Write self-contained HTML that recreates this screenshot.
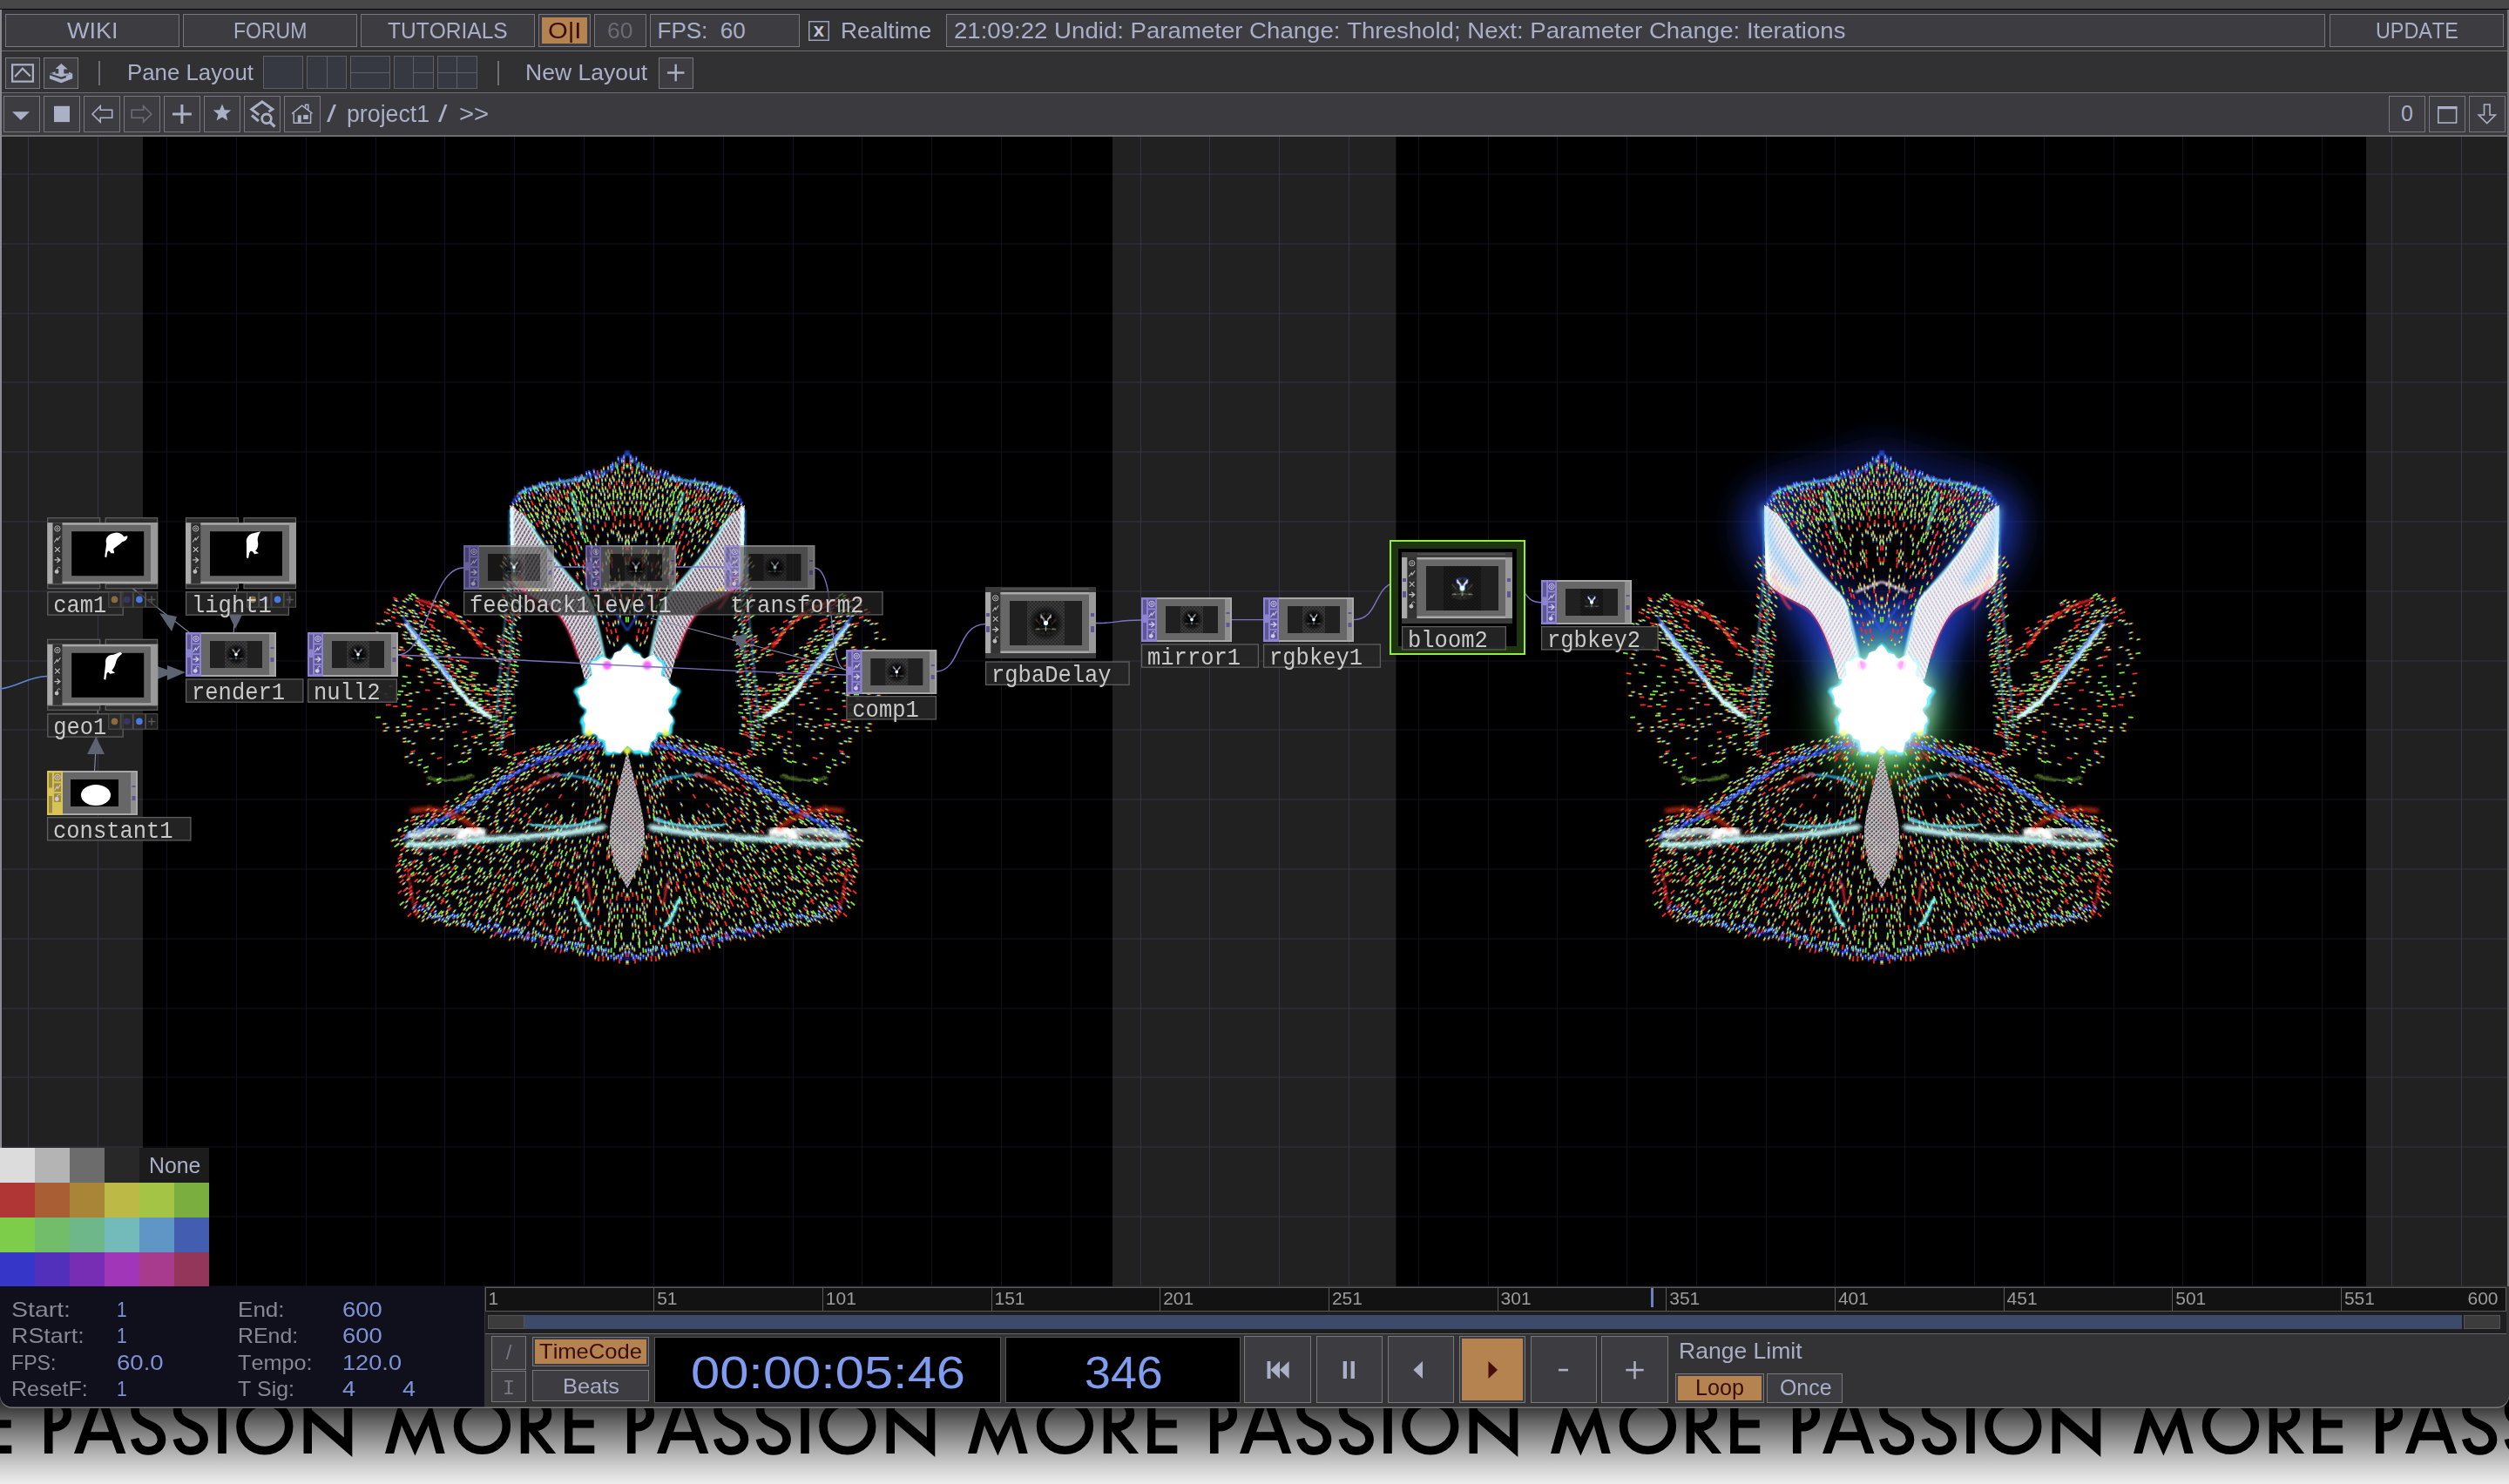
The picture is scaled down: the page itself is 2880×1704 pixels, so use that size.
<!DOCTYPE html>
<html><head><meta charset="utf-8"><style>
html,body{margin:0;padding:0;}
body{width:2880px;height:1704px;position:relative;overflow:hidden;background:#f2f2f2;font-family:"Liberation Sans",sans-serif;}
.a{position:absolute;}
.t{white-space:pre;transform-origin:0 0;font-kerning:none;}
</style></head><body>
<div class="a" style="left:0;top:1600px;width:2880px;height:104px;background:linear-gradient(#202020 0px,#3e3e3e 17px,#6c6c6c 35px,#a2a2a2 60px,#d2d2d2 85px,#ededed 104px);"></div>
<svg class="a" style="left:0;top:0" width="2880" height="1704"><defs><g id="pmunit">
<g fill="none" stroke="#000" stroke-width="9.6">
<path d="M55.75,1669 V1600 M55.75,1608.8 H62.45 A14.95,14.95 0 0 1 62.45,1638.7 H55.75"/>
<path d="M100,1649 H130"/>
<path d="M185.5,1614 C181.5,1608 175.5,1604.8 169,1604.8 C160,1604.8 155,1611 155,1619 C155,1628 162,1632 170,1635.5 C180,1639.5 185.5,1645 185.5,1653 C185.5,1661 179,1666 170,1666 C162,1666 156.5,1661 154.8,1652"/>
<path transform="translate(48.6,0)" d="M185.5,1614 C181.5,1608 175.5,1604.8 169,1604.8 C160,1604.8 155,1611 155,1619 C155,1628 162,1632 170,1635.5 C180,1639.5 185.5,1645 185.5,1653 C185.5,1661 179,1666 170,1666 C162,1666 156.5,1661 154.8,1652"/>
<path d="M255,1669 V1600"/>
<circle cx="303.85" cy="1637.8" r="27.85"/>
<circle cx="553.45" cy="1637.4" r="27.85"/>
<path d="M602.5,1669 V1600 M602.5,1608.8 H613.65 A14.85,14.85 0 0 1 613.65,1638.5 H602.5"/>
</g>
<g fill="#000">
<polygon points="85,1669 95.3,1669 119.7,1600 109.4,1600"/>
<polygon points="134,1669 144.4,1669 119.8,1600 109.5,1600"/>
<polygon points="348.5,1600 348.5,1669 358,1669 358,1633 404.3,1673 404.3,1600 394.8,1600 394.8,1650.5 358,1619 358,1600"/>
<polygon points="442,1669 452.1,1669 461,1636.6 476.4,1671.6 491.7,1636.6 500.6,1669 510.7,1669 494.8,1610.9 476.4,1650 457.9,1610.9"/>
<polygon points="606,1642 616.8,1642 638.2,1669 627.3,1669"/>
<rect x="648.2" y="1600" width="9.2" height="69"/>
<rect x="648.2" y="1630.4" width="33.5" height="9.2"/>
<rect x="648.2" y="1659.6" width="34.1" height="9.4"/>
</g></g></defs>
<use href="#pmunit" transform="translate(-669,0)"/><use href="#pmunit"/><use href="#pmunit" transform="translate(669,0)"/><use href="#pmunit" transform="translate(1338,0)"/><use href="#pmunit" transform="translate(2007,0)"/><use href="#pmunit" transform="translate(2676,0)"/>
</svg>
<div class="a" style="left:0.00px;top:0.00px;width:2880.00px;height:10.00px;background:#474747;"></div>
<div class="a" style="left:0.00px;top:9.50px;width:2880.00px;height:1.80px;background:#050505;"></div>
<div class="a" style="left:0.00px;top:11.00px;width:2880.00px;height:47.00px;background:#333335;"></div>
<div class="a" style="left:0.00px;top:58.00px;width:2880.00px;height:1.00px;background:#6c6c72;"></div>
<div class="a" style="left:0.00px;top:59.00px;width:2880.00px;height:47.00px;background:#313133;"></div>
<div class="a" style="left:0.00px;top:106.00px;width:2880.00px;height:1.00px;background:#6c6c72;"></div>
<div class="a" style="left:0.00px;top:107.00px;width:2880.00px;height:48.00px;background:#3a3a3f;"></div>
<div class="a" style="left:0.00px;top:155.00px;width:2880.00px;height:1.50px;background:#6c6c72;"></div>
<div class="a" style="left:6.00px;top:16.00px;width:200.00px;height:38.00px;background:#3c3c41;box-shadow:inset 0 0 0 1px #77777d;"></div>
<div class="a t" style="left:77.00px;top:20.67px;font-size:26px;line-height:29.04px;font-family:'Liberation Sans', sans-serif;color:#a9afc7;transform:scaleX(1.0403);">WIKI</div>
<div class="a" style="left:210.00px;top:16.00px;width:200.00px;height:38.00px;background:#3c3c41;box-shadow:inset 0 0 0 1px #77777d;"></div>
<div class="a t" style="left:267.60px;top:20.67px;font-size:26px;line-height:29.04px;font-family:'Liberation Sans', sans-serif;color:#a9afc7;transform:scaleX(0.8855);">FORUM</div>
<div class="a" style="left:414.00px;top:16.00px;width:200.00px;height:38.00px;background:#3c3c41;box-shadow:inset 0 0 0 1px #77777d;"></div>
<div class="a t" style="left:444.65px;top:20.67px;font-size:26px;line-height:29.04px;font-family:'Liberation Sans', sans-serif;color:#a9afc7;transform:scaleX(0.9438);">TUTORIALS</div>
<div class="a" style="left:618.00px;top:16.00px;width:60.00px;height:38.00px;background:#3c3c41;box-shadow:inset 0 0 0 1px #77777d;"></div>
<div class="a" style="left:622.00px;top:19.50px;width:52.00px;height:30.50px;background:#b5834f;"></div>
<div class="a t" style="left:628.55px;top:20.67px;font-size:26px;line-height:29.04px;font-family:'Liberation Sans', sans-serif;color:#3b0c0c;transform:scaleX(1.1257);">O|I</div>
<div class="a" style="left:682.00px;top:16.00px;width:60.00px;height:38.00px;background:#3c3c41;box-shadow:inset 0 0 0 1px #77777d;"></div>
<div class="a t" style="left:697.00px;top:20.67px;font-size:26px;line-height:29.04px;font-family:'Liberation Sans', sans-serif;color:#6b6b72;transform:scaleX(1.0166);">60</div>
<div class="a" style="left:746.00px;top:16.00px;width:172.00px;height:38.00px;background:#3c3c41;box-shadow:inset 0 0 0 1px #77777d;"></div>
<div class="a t" style="left:754.50px;top:20.67px;font-size:26px;line-height:29.04px;font-family:'Liberation Sans', sans-serif;color:#a9afc7;">FPS:  60</div>
<div class="a" style="left:928.00px;top:24.40px;width:23.50px;height:23.00px;box-shadow:inset 0 0 0 1.5px #9aa0b5;"></div>
<div class="a t" style="left:933.68px;top:22.59px;font-size:22px;line-height:24.57px;font-family:'Liberation Sans', sans-serif;font-weight:bold;color:#c0c4d4;">x</div>
<div class="a t" style="left:964.50px;top:20.97px;font-size:26px;line-height:29.04px;font-family:'Liberation Sans', sans-serif;color:#a9afc7;transform:scaleX(1.0157);">Realtime</div>
<div class="a" style="left:1086.00px;top:16.00px;width:1583.00px;height:38.00px;background:#3c3c41;box-shadow:inset 0 0 0 1px #77777d;"></div>
<div class="a t" style="left:1094.50px;top:20.67px;font-size:26px;line-height:29.04px;font-family:'Liberation Sans', sans-serif;color:#a9afc7;transform:scaleX(1.0617);">21:09:22 Undid: Parameter Change: Threshold; Next: Parameter Change: Iterations</div>
<div class="a" style="left:2674.00px;top:16.00px;width:200.00px;height:38.00px;background:#3c3c41;box-shadow:inset 0 0 0 1px #77777d;"></div>
<div class="a t" style="left:2726.65px;top:20.67px;font-size:26px;line-height:29.04px;font-family:'Liberation Sans', sans-serif;color:#a9afc7;transform:scaleX(0.8980);">UPDATE</div>
<div class="a" style="left:6.20px;top:66.00px;width:39.60px;height:35.60px;background:#3c3c41;box-shadow:inset 0 0 0 1px #77777d;"></div>
<div class="a" style="left:50.20px;top:66.00px;width:39.60px;height:35.60px;background:#3c3c41;box-shadow:inset 0 0 0 1px #77777d;"></div>
<div class="a" style="left:113.00px;top:70.00px;width:2.00px;height:28.00px;background:#6e6e74;"></div>
<div class="a t" style="left:145.90px;top:69.67px;font-size:25px;line-height:27.93px;font-family:'Liberation Sans', sans-serif;color:#a9afc7;transform:scaleX(1.0328);">Pane Layout</div>
<div class="a" style="left:302.20px;top:64.30px;width:45.60px;height:37.30px;background:#363941;box-shadow:inset 0 0 0 1px #5f5f67;"></div>
<div class="a" style="left:352.20px;top:64.30px;width:45.60px;height:37.30px;background:#363941;box-shadow:inset 0 0 0 1px #5f5f67;"></div>
<div class="a" style="left:374.50px;top:64.30px;width:1.00px;height:37.30px;background:#5f5f67;"></div>
<div class="a" style="left:402.00px;top:64.30px;width:45.60px;height:37.30px;background:#363941;box-shadow:inset 0 0 0 1px #5f5f67;"></div>
<div class="a" style="left:402.00px;top:82.50px;width:45.60px;height:1.00px;background:#5f5f67;"></div>
<div class="a" style="left:452.00px;top:64.30px;width:45.60px;height:37.30px;background:#363941;box-shadow:inset 0 0 0 1px #5f5f67;"></div>
<div class="a" style="left:474.30px;top:64.30px;width:1.00px;height:37.30px;background:#5f5f67;"></div>
<div class="a" style="left:474.80px;top:82.50px;width:22.80px;height:1.00px;background:#5f5f67;"></div>
<div class="a" style="left:502.00px;top:64.30px;width:45.60px;height:37.30px;background:#363941;box-shadow:inset 0 0 0 1px #5f5f67;"></div>
<div class="a" style="left:524.30px;top:64.30px;width:1.00px;height:37.30px;background:#5f5f67;"></div>
<div class="a" style="left:502.00px;top:82.50px;width:45.60px;height:1.00px;background:#5f5f67;"></div>
<div class="a" style="left:571.00px;top:70.00px;width:2.00px;height:28.00px;background:#6e6e74;"></div>
<div class="a t" style="left:603.00px;top:69.67px;font-size:25px;line-height:27.93px;font-family:'Liberation Sans', sans-serif;color:#a9afc7;transform:scaleX(1.0605);">New Layout</div>
<div class="a" style="left:756.00px;top:66.00px;width:39.50px;height:35.50px;background:#3c3c41;box-shadow:inset 0 0 0 1px #77777d;"></div>
<div class="a" style="left:4.10px;top:110.20px;width:41.60px;height:41.50px;background:#3c3c41;box-shadow:inset 0 0 0 1px #77777d;"></div>
<div class="a" style="left:50.20px;top:110.20px;width:41.60px;height:41.50px;background:#3c3c41;box-shadow:inset 0 0 0 1px #77777d;"></div>
<div class="a" style="left:96.20px;top:110.20px;width:41.60px;height:41.50px;background:#3c3c41;box-shadow:inset 0 0 0 1px #77777d;"></div>
<div class="a" style="left:142.00px;top:110.20px;width:41.60px;height:41.50px;background:#3c3c41;box-shadow:inset 0 0 0 1px #77777d;"></div>
<div class="a" style="left:188.10px;top:110.20px;width:41.60px;height:41.50px;background:#3c3c41;box-shadow:inset 0 0 0 1px #77777d;"></div>
<div class="a" style="left:234.20px;top:110.20px;width:41.60px;height:41.50px;background:#3c3c41;box-shadow:inset 0 0 0 1px #77777d;"></div>
<div class="a" style="left:280.20px;top:110.20px;width:41.60px;height:41.50px;background:#3c3c41;box-shadow:inset 0 0 0 1px #77777d;"></div>
<div class="a" style="left:326.10px;top:110.20px;width:41.60px;height:41.50px;background:#3c3c41;box-shadow:inset 0 0 0 1px #77777d;"></div>
<div class="a t" style="left:375.30px;top:115.66px;font-size:27px;line-height:30.16px;font-family:'Liberation Sans', sans-serif;color:#a9afc7;transform:scaleX(1.4664);">/</div>
<div class="a t" style="left:397.70px;top:115.66px;font-size:27px;line-height:30.16px;font-family:'Liberation Sans', sans-serif;color:#a9afc7;transform:scaleX(0.9901);">project1</div>
<div class="a t" style="left:503.40px;top:115.66px;font-size:27px;line-height:30.16px;font-family:'Liberation Sans', sans-serif;color:#a9afc7;transform:scaleX(1.3997);">/</div>
<div class="a t" style="left:526.60px;top:115.66px;font-size:27px;line-height:30.16px;font-family:'Liberation Sans', sans-serif;color:#a9afc7;transform:scaleX(1.0845);">&gt;&gt;</div>
<div class="a" style="left:2742.00px;top:110.20px;width:41.50px;height:41.50px;background:#3c3c41;box-shadow:inset 0 0 0 1px #77777d;"></div>
<div class="a t" style="left:2756.05px;top:117.07px;font-size:25px;line-height:27.93px;font-family:'Liberation Sans', sans-serif;color:#a9afc7;">0</div>
<div class="a" style="left:2788.00px;top:110.20px;width:41.50px;height:41.50px;background:#3c3c41;box-shadow:inset 0 0 0 1px #77777d;"></div>
<div class="a" style="left:2834.00px;top:110.20px;width:41.50px;height:41.50px;background:#3c3c41;box-shadow:inset 0 0 0 1px #77777d;"></div>
<svg class="a" style="left:0;top:0" width="2880" height="156" fill="none" stroke="#aab0c6" stroke-width="2.2">
<rect x="14.1" y="74.3" width="23.8" height="19.3"/>
<polyline points="17.1,87.9 25.9,78.6 34.8,87.5"/>
<g fill="#aab0c6" stroke="none">
<polygon points="63.6,79 70.3,73 77.8,79.5 73.3,79.5 73.3,86 67.2,86 67.2,79"/>
<polygon points="57,84.6 57,90.4 70.3,95.2 83.2,90.2 83.2,84.2 75.8,86.9 75.8,89.2 70.3,91 57,86.2"/>
<polygon points="57,84.6 63.5,82.3 63.5,84.2 59.8,85.3 70.3,88.5 83.2,84.2 79,82.8 79,85.1 83.2,84.2"/>
<polygon points="14,128.2 34,128.2 23.9,138.1"/>
<rect x="62" y="121.8" width="18" height="18.3"/>
<polygon points="255,119.5 257.8,126.3 265.2,126.6 259.5,131.2 261.4,138.4 255,134.4 248.6,138.4 250.5,131.2 244.8,126.6 252.2,126.3"/>
<rect x="341.8" y="132.3" width="4" height="8.4"/>
<rect x="348.2" y="131.9" width="5.6" height="5.1"/>
</g>
<polygon stroke-width="1.6" points="106,131 115.2,121.8 115.2,126.2 128.7,126.2 128.7,135.3 115.2,135.3 115.2,140.1"/>
<polygon stroke="#6c6c74" stroke-width="1.6" points="173.8,131 164.6,121.8 164.6,126.2 151.1,126.2 151.1,135.3 164.6,135.3 164.6,140.1"/>
<path stroke-width="3" d="M198,131.1 H219.9 M208.9,120 V141.9"/>
<polyline stroke-width="3" points="297.2,131.9 288.8,125.5 300.9,116.8 312.8,125.5 308.4,128.2"/>
<line stroke-width="3" x1="289" y1="132.5" x2="296.8" y2="139"/>
<circle stroke-width="2.8" cx="306" cy="136.3" r="5.3"/>
<line stroke-width="3.2" x1="309.8" y1="140.2" x2="315.5" y2="145.5"/>
<polyline stroke-width="1.5" points="335,130.7 346.6,121.1 358.6,130.3"/>
<polyline stroke-width="1.5" points="337.2,130 337.2,141.3 356.6,141.3 356.6,130"/>
<polyline stroke-width="1.5" points="350.6,124 350.6,120.3 353.8,120.3 353.8,126.8"/>
<path stroke-width="2.4" d="M766,83.5 H785.5 M775.7,73.8 V93.3"/>
<rect stroke-width="1.6" x="2798.8" y="123.5" width="20.8" height="17.5"/>
<rect fill="#aab0c6" stroke="none" x="2798" y="122" width="22.4" height="3.2"/>
<polygon stroke-width="1.6" points="2851.5,120 2858,120 2858,132 2864.3,132 2854.75,141.6 2845.2,132 2851.5,132"/>
</svg>
<div class="a" style="left:0.00px;top:156.50px;width:2880.00px;height:1320.50px;background:#212121;"></div>
<div class="a" style="left:164.00px;top:156.50px;width:1113.00px;height:1320.50px;background:#000;"></div>
<div class="a" style="left:1602.50px;top:156.50px;width:1113.50px;height:1320.50px;background:#000;"></div>
<svg class="a" style="left:0;top:156.5px" width="2880" height="1320.5"><defs><clipPath id="blk"><rect x="164" y="0" width="1113" height="2000"/><rect x="1602.5" y="0" width="1113.5" height="2000"/></clipPath></defs><g fill="#363445"><rect x="32" y="0" width="1" height="1320.5"/><rect x="112" y="0" width="1" height="1320.5"/><rect x="191" y="0" width="1" height="1320.5"/><rect x="271" y="0" width="1" height="1320.5"/><rect x="351" y="0" width="1" height="1320.5"/><rect x="431" y="0" width="1" height="1320.5"/><rect x="510" y="0" width="1" height="1320.5"/><rect x="590" y="0" width="1" height="1320.5"/><rect x="670" y="0" width="1" height="1320.5"/><rect x="750" y="0" width="1" height="1320.5"/><rect x="830" y="0" width="1" height="1320.5"/><rect x="910" y="0" width="1" height="1320.5"/><rect x="989" y="0" width="1" height="1320.5"/><rect x="1069" y="0" width="1" height="1320.5"/><rect x="1149" y="0" width="1" height="1320.5"/><rect x="1229" y="0" width="1" height="1320.5"/><rect x="1309" y="0" width="1" height="1320.5"/><rect x="1388" y="0" width="1" height="1320.5"/><rect x="1468" y="0" width="1" height="1320.5"/><rect x="1548" y="0" width="1" height="1320.5"/><rect x="1628" y="0" width="1" height="1320.5"/><rect x="1708" y="0" width="1" height="1320.5"/><rect x="1787" y="0" width="1" height="1320.5"/><rect x="1867" y="0" width="1" height="1320.5"/><rect x="1947" y="0" width="1" height="1320.5"/><rect x="2027" y="0" width="1" height="1320.5"/><rect x="2106" y="0" width="1" height="1320.5"/><rect x="2186" y="0" width="1" height="1320.5"/><rect x="2266" y="0" width="1" height="1320.5"/><rect x="2346" y="0" width="1" height="1320.5"/><rect x="2426" y="0" width="1" height="1320.5"/><rect x="2505" y="0" width="1" height="1320.5"/><rect x="2585" y="0" width="1" height="1320.5"/><rect x="2665" y="0" width="1" height="1320.5"/><rect x="2745" y="0" width="1" height="1320.5"/><rect x="2825" y="0" width="1" height="1320.5"/><rect x="0" y="42.50" width="2880" height="1"/><rect x="0" y="122.50" width="2880" height="1"/><rect x="0" y="202.50" width="2880" height="1"/><rect x="0" y="281.50" width="2880" height="1"/><rect x="0" y="361.50" width="2880" height="1"/><rect x="0" y="441.50" width="2880" height="1"/><rect x="0" y="521.50" width="2880" height="1"/><rect x="0" y="601.50" width="2880" height="1"/><rect x="0" y="680.50" width="2880" height="1"/><rect x="0" y="760.50" width="2880" height="1"/><rect x="0" y="840.50" width="2880" height="1"/><rect x="0" y="920.50" width="2880" height="1"/><rect x="0" y="1000.50" width="2880" height="1"/><rect x="0" y="1079.50" width="2880" height="1"/><rect x="0" y="1159.50" width="2880" height="1"/><rect x="0" y="1239.50" width="2880" height="1"/><rect x="0" y="1319.50" width="2880" height="1"/></g><g fill="#000" clip-path="url(#blk)"><rect x="0" y="0" width="2880" height="2000"/></g><g fill="#13111b" clip-path="url(#blk)"><rect x="32" y="0" width="1" height="1320.5"/><rect x="112" y="0" width="1" height="1320.5"/><rect x="191" y="0" width="1" height="1320.5"/><rect x="271" y="0" width="1" height="1320.5"/><rect x="351" y="0" width="1" height="1320.5"/><rect x="431" y="0" width="1" height="1320.5"/><rect x="510" y="0" width="1" height="1320.5"/><rect x="590" y="0" width="1" height="1320.5"/><rect x="670" y="0" width="1" height="1320.5"/><rect x="750" y="0" width="1" height="1320.5"/><rect x="830" y="0" width="1" height="1320.5"/><rect x="910" y="0" width="1" height="1320.5"/><rect x="989" y="0" width="1" height="1320.5"/><rect x="1069" y="0" width="1" height="1320.5"/><rect x="1149" y="0" width="1" height="1320.5"/><rect x="1229" y="0" width="1" height="1320.5"/><rect x="1309" y="0" width="1" height="1320.5"/><rect x="1388" y="0" width="1" height="1320.5"/><rect x="1468" y="0" width="1" height="1320.5"/><rect x="1548" y="0" width="1" height="1320.5"/><rect x="1628" y="0" width="1" height="1320.5"/><rect x="1708" y="0" width="1" height="1320.5"/><rect x="1787" y="0" width="1" height="1320.5"/><rect x="1867" y="0" width="1" height="1320.5"/><rect x="1947" y="0" width="1" height="1320.5"/><rect x="2027" y="0" width="1" height="1320.5"/><rect x="2106" y="0" width="1" height="1320.5"/><rect x="2186" y="0" width="1" height="1320.5"/><rect x="2266" y="0" width="1" height="1320.5"/><rect x="2346" y="0" width="1" height="1320.5"/><rect x="2426" y="0" width="1" height="1320.5"/><rect x="2505" y="0" width="1" height="1320.5"/><rect x="2585" y="0" width="1" height="1320.5"/><rect x="2665" y="0" width="1" height="1320.5"/><rect x="2745" y="0" width="1" height="1320.5"/><rect x="2825" y="0" width="1" height="1320.5"/><rect x="0" y="42.50" width="2880" height="1"/><rect x="0" y="122.50" width="2880" height="1"/><rect x="0" y="202.50" width="2880" height="1"/><rect x="0" y="281.50" width="2880" height="1"/><rect x="0" y="361.50" width="2880" height="1"/><rect x="0" y="441.50" width="2880" height="1"/><rect x="0" y="521.50" width="2880" height="1"/><rect x="0" y="601.50" width="2880" height="1"/><rect x="0" y="680.50" width="2880" height="1"/><rect x="0" y="760.50" width="2880" height="1"/><rect x="0" y="840.50" width="2880" height="1"/><rect x="0" y="920.50" width="2880" height="1"/><rect x="0" y="1000.50" width="2880" height="1"/><rect x="0" y="1079.50" width="2880" height="1"/><rect x="0" y="1159.50" width="2880" height="1"/><rect x="0" y="1239.50" width="2880" height="1"/><rect x="0" y="1319.50" width="2880" height="1"/></g></svg>
<div class="a" style="left:0.00px;top:11.00px;width:2.00px;height:1466.00px;background:#8a8a92;"></div>
<div class="a" style="left:2877.50px;top:11.00px;width:2.50px;height:1466.00px;background:#77777c;"></div>
<svg class="a" style="left:0;top:0" width="2880" height="1704"><defs>
<pattern id="chk" width="4" height="4" patternUnits="userSpaceOnUse"><rect width="4" height="4" fill="#2a2a2a"/><rect width="2" height="2" fill="#3a3a3a"/><rect x="2" y="2" width="2" height="2" fill="#3a3a3a"/></pattern>
<radialGradient id="rdisc"><stop offset="0.45" stop-color="#000"/><stop offset="1" stop-color="#000" stop-opacity="0"/></radialGradient>
<pattern id="mesh" width="4" height="4" patternUnits="userSpaceOnUse" patternTransform="rotate(30)">
<rect width="4" height="4" fill="#584a5c" fill-opacity="0.8"/><rect width="1.9" height="4" fill="#fffcfe"/><rect y="2.2" width="4" height="0.8" fill="#ffa0d0" fill-opacity="0.6"/></pattern>
<pattern id="mesh2" width="4" height="4" patternUnits="userSpaceOnUse" patternTransform="rotate(-35)">
<rect width="1" height="4" fill="#bff8ff" fill-opacity="0.55"/></pattern>
<pattern id="meshD" width="3.6" height="3.6" patternUnits="userSpaceOnUse" patternTransform="rotate(45)">
<rect width="3.6" height="3.6" fill="#3a5a78"/><rect width="1.4" height="3.6" fill="#d8fcff"/><rect y="1.8" width="3.6" height="1" fill="#ff7ab0"/></pattern>
<pattern id="meshD2" width="3.6" height="3.6" patternUnits="userSpaceOnUse" patternTransform="rotate(-45)">
<rect width="1" height="3.6" fill="#e8ff90" fill-opacity="0.6"/></pattern>
<path id="dRGB" d="M716.3 522.1l0.1 5.2M713.8 526.0l0.1 6.3M708.4 532.1l0.3 6.2M716.2 530.7l0.1 5.2M720.5 532.1l-0.0 5.9M692.7 535.4l0.5 5.3M697.9 534.8l0.4 5.5M708.3 533.7l0.2 5.5M716.0 534.0l0.1 5.7M690.3 539.0l0.7 6.1M706.1 540.4l0.3 6.2M714.4 539.2l0.1 5.5M667.5 544.1l1.1 5.3M677.3 543.9l0.9 5.6M683.2 544.9l0.8 6.0M688.1 544.2l0.7 5.5M691.2 543.4l0.7 6.0M696.7 543.5l0.5 5.9M703.1 545.1l0.4 6.0M711.0 543.8l0.2 6.1M717.6 542.4l0.1 5.8M660.0 546.6l1.2 5.2M665.0 548.1l1.1 5.1M669.9 548.2l1.2 6.1M674.7 549.5l1.0 5.9M678.5 548.4l1.0 6.2M690.7 548.4l0.7 6.2M694.9 548.1l0.5 5.4M699.8 548.2l0.4 5.5M704.7 548.0l0.3 5.8M710.5 548.9l0.2 5.6M715.3 548.4l0.1 5.2M621.4 553.5l1.9 4.9M627.7 552.1l1.8 5.0M632.1 552.8l1.9 5.4M638.4 553.7l1.8 5.6M641.1 553.8l1.9 5.9M647.8 553.8l1.6 5.7M652.3 553.5l1.6 5.8M658.8 553.3l1.2 5.1M668.6 553.3l1.2 5.8M673.6 553.3l1.1 6.2M676.2 552.5l0.9 5.4M683.9 551.4l0.8 6.0M686.6 551.5l0.8 6.1M691.2 553.3l0.6 5.4M698.8 553.5l0.5 5.8M701.5 551.3l0.4 6.0M714.1 551.9l0.1 6.0M611.0 556.5l2.2 4.9M613.6 557.3l2.1 4.9M619.3 556.3l2.1 5.1M624.5 555.5l2.0 5.2M628.8 558.1l2.2 5.9M661.1 556.7l1.3 5.6M664.1 556.8l1.2 5.3M670.7 555.6l1.0 5.2M675.0 555.9l1.1 5.8M681.0 556.9l0.8 5.2M684.7 557.3l0.9 6.1M691.1 557.8l0.6 5.2M694.9 557.8l0.5 5.4M705.1 556.4l0.3 5.3M711.0 557.8l0.2 6.0M715.8 555.2l0.1 6.3M720.0 556.7l-0.0 5.2M602.3 562.3l2.4 5.0M616.3 559.7l2.2 5.2M621.7 559.6l2.3 5.8M627.7 561.4l2.1 5.7M632.7 561.3l1.9 5.2M642.0 562.1l1.8 5.6M651.1 562.1l1.4 5.1M657.3 561.7l1.4 5.3M663.3 559.8l1.3 5.5M667.9 562.0l1.2 5.7M673.3 561.7l1.2 6.0M678.8 559.7l0.9 5.1M687.7 560.6l0.8 6.2M692.1 560.7l0.7 6.0M697.2 561.1l0.5 5.6M703.6 560.9l0.4 5.4M706.4 561.1l0.3 5.3M717.3 562.2l0.1 5.3M619.8 565.6l2.0 4.8M626.1 564.6l2.2 5.8M630.3 566.7l2.2 5.9M634.6 565.9l1.9 5.2M640.0 566.1l1.7 5.1M656.0 564.7l1.4 5.2M669.8 566.3l1.1 5.3M679.1 566.6l0.9 5.4M683.8 565.9l0.9 6.2M689.6 564.4l0.7 5.4M693.8 565.2l0.6 5.5M699.6 565.7l0.5 5.6M703.7 564.2l0.4 5.6M708.7 565.4l0.3 5.8M713.6 564.6l0.1 5.3M593.5 568.7l3.0 5.6M597.6 568.7l2.6 5.0M601.5 568.9l2.7 5.4M606.7 568.7l2.5 5.2M612.0 568.9l2.2 4.9M623.0 569.8l2.3 5.7M640.9 571.1l1.7 5.0M649.0 569.7l1.7 5.5M651.5 569.6l1.8 6.1M657.9 570.9l1.4 5.3M661.3 568.0l1.5 6.0M678.5 568.9l1.0 5.8M683.6 568.7l0.9 5.8M693.9 569.5l0.6 5.4M697.8 568.2l0.5 5.4M708.2 567.9l0.3 6.2M712.3 568.8l0.2 5.8M717.0 569.3l0.1 6.2M594.6 572.2l2.6 4.8M600.7 573.6l2.7 5.3M605.2 575.1l2.4 4.8M620.7 572.3l2.1 4.9M630.6 573.0l2.1 5.4M635.3 572.6l1.8 5.0M639.0 574.0l2.0 5.7M643.9 575.0l1.9 5.7M651.4 572.2l1.5 5.2M656.2 574.8l1.4 5.2M660.6 573.5l1.3 5.2M664.7 575.0l1.2 5.1M674.6 573.7l1.1 5.6M678.4 574.1l0.9 5.1M686.6 572.3l0.9 5.9M689.3 573.8l0.8 5.8M696.5 575.4l0.6 5.8M701.2 574.7l0.5 5.9M704.3 574.7l0.4 6.3M709.4 574.6l0.3 5.8M714.5 574.0l0.1 5.3M719.4 575.4l0.0 5.6M587.7 579.7l3.0 5.1M592.0 576.8l2.6 4.7M596.2 579.1l2.8 5.1M602.7 578.6l2.6 5.0M606.7 578.8l2.7 5.5M613.4 579.6l2.4 5.0M618.9 576.9l2.3 5.3M631.1 578.1l2.0 5.0M637.1 577.0l2.1 5.7M641.4 576.6l1.8 5.2M647.5 578.5l1.9 5.9M658.0 577.8l1.4 5.1M667.9 577.2l1.2 5.4M671.6 577.2l1.2 5.8M679.1 577.2l1.0 5.3M683.7 577.4l1.0 6.1M687.0 578.1l0.8 5.3M692.8 577.9l0.7 6.2M711.4 578.9l0.2 5.4M595.8 583.5l2.9 5.2M599.2 582.8l2.7 5.0M604.7 582.5l2.8 5.3M610.4 582.5l2.6 5.3M616.3 582.3l2.5 5.3M625.1 582.5l2.4 5.7M629.0 583.4l2.3 5.5M636.3 583.6l2.0 5.3M649.7 584.0l1.7 5.5M656.0 583.2l1.7 5.8M660.1 581.6l1.5 5.4M670.7 581.7l1.2 5.4M673.7 582.8l1.1 5.3M680.9 582.8l0.9 5.2M684.6 583.1l0.9 5.6M691.0 581.9l0.8 5.8M694.0 583.9l0.7 5.6M699.5 581.0l0.5 5.6M705.0 583.7l0.4 5.2M709.9 582.3l0.3 5.7M716.2 582.2l0.1 5.8M587.9 585.3l2.7 4.5M591.5 588.1l3.1 5.3M598.1 587.3l2.7 4.8M608.4 588.1l2.7 5.3M613.8 587.3l2.3 4.7M616.0 587.8l2.4 4.9M621.9 586.9l2.6 5.7M628.6 585.6l2.5 5.9M631.0 586.3l2.1 5.1M636.2 586.6l2.0 5.3M641.3 587.8l2.1 5.9M648.9 586.8l1.7 5.3M652.5 588.1l1.7 5.5M657.8 586.8l1.5 5.2M667.8 588.2l1.5 6.2M671.1 586.2l1.2 5.4M676.5 587.6l1.0 5.2M681.2 586.9l1.0 5.8M696.4 588.1l0.7 6.2M712.6 586.7l0.2 5.4M716.6 585.5l0.1 6.2M595.9 592.2l3.2 5.5M609.9 590.2l2.9 5.6M615.7 590.7l2.7 5.5M621.4 592.0l2.2 4.8M626.1 590.5l2.5 5.7M628.4 591.0l2.1 4.9M634.7 591.3l2.1 5.2M644.3 591.6l2.0 5.6M654.3 592.5l1.6 5.2M660.4 592.3l1.6 5.6M670.1 589.4l1.4 6.2M676.0 590.2l1.1 5.2M681.2 591.0l1.1 6.2M685.5 589.6l0.9 5.7M689.6 591.5l0.8 5.6M695.6 592.3l0.6 5.6M698.6 592.1l0.6 5.8M604.0 595.7l3.0 5.4M608.9 596.1l2.7 5.0M612.0 594.3l2.7 5.2M622.2 595.3l2.5 5.4M627.2 595.5l2.5 5.7M633.6 594.2l2.3 5.6M638.8 596.6l2.2 5.8M643.7 594.1l2.1 5.7M646.8 593.9l2.0 5.8M651.6 594.4l1.9 5.7M658.5 594.9l1.5 5.1M661.9 593.7l1.4 5.2M673.5 594.1l1.3 5.8M677.0 595.5l1.2 6.0M686.0 596.2l0.9 5.7M605.4 598.7l3.1 5.5M608.7 599.9l2.6 4.8M620.7 598.2l2.5 5.1M625.7 598.8l2.5 5.5M628.9 600.9l2.2 4.8M636.6 598.7l2.3 5.7M640.4 600.4l1.9 5.0M646.0 598.1l1.8 5.2M665.7 598.6l1.4 5.2M711.5 599.7l0.2 5.3M716.1 600.7l0.1 5.6M611.7 603.1l2.9 5.3M622.8 604.4l2.6 5.4M641.5 602.6l2.1 5.3M647.3 604.6l2.2 5.9M663.0 603.2l1.5 5.2M673.0 602.9l1.2 5.2M691.3 604.8l0.8 5.6M706.6 602.9l0.4 5.6M629.1 609.7l2.4 5.2M635.5 606.7l2.1 5.0M638.4 608.5l2.2 5.3M645.7 607.0l1.9 5.0M660.3 608.0l1.8 6.0M666.2 609.7l1.7 6.1M668.6 609.5l1.3 5.0M701.5 607.2l0.6 6.2M704.0 608.8l0.4 5.5M710.1 608.8l0.3 6.1M622.0 612.5l2.9 5.6M632.1 613.2l2.6 5.6M636.2 612.8l2.4 5.5M643.4 611.6l2.2 5.6M651.2 612.9l1.9 5.2M667.9 613.8l1.5 5.4M671.7 611.4l1.5 5.9M686.1 612.8l0.9 5.2M697.4 611.5l0.7 5.8M708.4 611.2l0.3 5.7M711.7 613.0l0.2 5.6M718.2 613.4l0.1 5.7M635.8 617.8l2.5 5.5M644.5 617.8l2.3 5.8M684.0 616.7l1.2 6.1M710.1 616.7l0.3 6.2M714.1 616.4l0.2 6.3M718.8 618.1l0.0 5.9M626.5 620.0l2.7 5.3M631.4 620.2l2.3 4.9M659.0 620.8l1.8 5.4M663.1 620.8l1.8 6.0M677.2 620.9l1.3 5.7M683.3 622.5l1.1 5.5M697.2 620.1l0.8 6.2M717.9 621.0l0.1 5.7M666.4 626.2l1.8 5.9M678.7 624.7l1.4 6.1M714.9 626.6l0.2 6.3M586.9 628.2l3.2 4.3M636.6 629.7l2.7 5.6M648.1 630.4l2.0 4.9M697.9 630.2l0.8 6.0M644.6 634.7l2.6 5.8M656.2 634.4l2.2 5.9M663.4 632.5l1.9 5.9M695.3 633.1l0.8 5.7M715.0 633.6l0.2 5.7M578.1 638.7l3.5 4.1M583.8 637.4l3.7 4.6M586.0 637.7l3.7 4.6M591.3 637.4l3.5 4.5M660.9 637.0l1.9 5.3M672.6 639.8l1.6 5.6M677.1 639.5l1.6 6.1M697.6 637.7l0.8 6.2M576.2 644.2l4.1 4.6M683.8 643.5l1.4 6.1M695.6 644.0l0.8 5.3M700.0 641.5l0.8 6.2M718.5 644.0l0.1 5.2M573.7 648.4l4.1 4.3M578.6 646.8l3.7 4.1M583.2 646.0l3.9 4.5M586.0 646.7l3.8 4.5M591.3 647.4l3.9 4.8M653.3 646.2l2.0 4.8M663.3 646.2l2.0 5.5M668.9 648.2l1.8 5.6M681.1 648.3l1.3 5.4M584.9 650.6l4.1 4.6M591.1 651.7l3.5 4.1M594.1 650.7l3.4 4.2M599.1 652.3l3.9 4.9M691.0 651.4l1.2 6.2M709.9 652.0l0.4 5.3M592.4 655.7l4.1 4.8M662.0 656.5l2.1 5.5M668.9 654.0l1.9 5.5M671.4 656.6l1.8 5.6M676.1 655.0l1.5 5.1M683.1 655.8l1.5 6.0M579.6 658.6l4.2 4.4M585.5 659.2l3.8 4.1M679.8 659.0l1.5 5.6M700.1 659.9l0.7 5.2M711.0 659.2l0.4 5.9M577.0 662.8l4.3 4.3M586.2 663.3l3.8 4.0M598.1 664.3l4.2 4.8M706.0 663.4l0.5 5.4M711.5 665.0l0.4 5.9M581.1 669.1l4.3 4.2M591.2 668.1l3.8 4.0M666.5 667.2l1.9 5.0M694.8 668.6l1.0 5.6M699.6 669.9l0.8 5.2M709.6 667.6l0.5 6.2M714.3 668.3l0.2 5.3M577.2 673.5l4.2 3.9M583.4 674.0l4.6 4.4M589.0 672.8l4.0 4.0M591.3 673.9l4.2 4.3M597.6 671.8l3.8 4.1M693.1 672.0l1.1 5.2M696.0 673.1l1.0 5.3M703.9 671.9l0.7 5.9M711.3 671.7l0.4 5.8M581.0 676.4l4.0 3.7M583.5 678.0l4.3 4.0M593.8 677.6l4.3 4.4M670.1 678.5l2.3 5.8M675.0 678.1l1.9 5.3M685.5 675.5l1.4 5.1M700.2 676.8l0.9 5.9M468.3 682.9l4.7 2.3M584.1 682.3l4.6 4.1M588.9 681.4l4.2 4.0M672.8 682.8l1.9 4.9M703.0 680.9l0.8 5.9M712.9 681.1l0.3 5.7M464.7 687.1l5.4 2.5M476.2 685.6l5.0 2.4M576.1 684.4l4.0 3.3M585.3 687.2l4.8 4.2M588.7 686.4l4.1 3.7M596.6 684.2l3.8 3.7M680.4 687.0l1.8 5.2M705.9 684.4l0.6 5.4M719.2 684.8l0.0 5.7M452.1 688.5l5.7 2.5M461.4 689.4l5.7 2.5M496.4 689.1l4.7 2.4M503.7 690.4l4.8 2.6M507.6 688.4l5.2 2.8M511.2 690.8l5.2 2.8M581.7 690.4l4.9 4.0M587.0 688.4l4.4 3.9M591.2 689.8l4.0 3.6M681.8 691.2l1.8 5.2M713.8 689.8l0.3 5.4M449.9 694.1l5.6 2.3M461.4 695.8l5.2 2.2M476.2 694.0l5.2 2.4M493.6 692.9l5.1 2.5M499.5 694.9l5.2 2.6M503.7 694.5l5.0 2.5M575.2 694.5l4.7 3.6M580.9 694.3l4.3 3.4M583.7 692.9l4.8 3.9M589.5 695.7l4.2 3.5M596.1 693.8l4.4 3.9M679.8 694.8l1.9 5.3M699.9 694.3l1.0 5.7M705.0 692.6l0.7 5.4M715.8 692.9l0.2 6.0M720.5 694.2l-0.0 5.7M443.7 699.2l4.9 1.9M457.4 697.0l5.5 2.3M467.6 699.9l4.9 2.0M471.5 700.0l5.8 2.4M496.8 699.4l4.8 2.3M503.7 699.4l5.4 2.7M507.4 699.0l4.9 2.4M587.0 699.1l4.5 3.6M591.6 699.0l4.9 4.0M711.5 698.0l0.5 6.2M716.8 700.1l0.2 5.3M448.9 702.0l5.7 2.2M454.7 702.5l5.2 2.0M459.0 701.6l5.2 2.1M463.5 703.4l5.9 2.3M469.8 702.2l5.1 2.1M474.7 703.5l5.3 2.2M483.9 701.8l5.5 2.4M495.6 703.1l5.6 2.6M504.8 701.5l5.7 2.7M593.7 703.5l4.2 3.3M684.9 701.9l1.7 5.0M689.1 703.4l1.8 5.8M695.7 704.2l1.4 5.9M711.5 704.2l0.5 6.2M458.7 706.1l5.8 2.2M463.6 706.1l5.4 2.1M472.2 706.8l5.4 2.1M477.1 707.6l4.8 1.9M486.6 705.7l5.0 2.1M522.8 706.1l5.4 2.7M526.1 706.8l5.1 2.6M582.4 706.6l4.7 3.4M593.8 707.3l4.3 3.3M440.2 711.9l5.4 1.8M444.1 711.3l5.2 1.8M465.1 712.0l4.9 1.8M468.7 712.4l6.0 2.2M481.1 712.3l5.6 2.2M521.5 710.8l5.0 2.4M526.2 712.0l5.8 2.8M530.0 712.5l5.3 2.6M589.5 710.1l4.3 3.1M691.2 712.1l1.7 5.5M705.9 712.0l0.8 5.4M709.5 711.4l0.7 6.4M431.5 715.3l5.2 1.6M436.5 715.6l5.7 1.8M459.0 716.2l5.0 1.7M473.3 714.7l4.9 1.8M476.2 714.7l5.9 2.2M481.8 717.2l5.0 1.9M528.1 714.7l5.4 2.5M583.4 715.3l5.3 3.5M588.0 715.2l4.9 3.3M703.5 714.5l1.0 5.7M455.4 718.5l5.1 1.7M474.8 721.1l5.8 2.0M480.9 718.9l5.5 2.0M485.6 719.0l6.0 2.2M528.5 720.4l5.2 2.3M536.5 721.6l5.8 2.6M540.1 720.2l5.6 2.6M578.4 720.7l5.0 3.0M583.4 719.5l4.7 3.0M431.2 725.6l6.1 1.7M463.3 725.3l5.5 1.7M471.9 725.0l5.0 1.6M488.8 724.1l5.3 1.9M492.6 723.6l5.6 2.0M501.0 723.1l5.5 2.1M578.6 723.6l4.9 2.8M581.4 725.8l5.3 3.0M586.0 723.9l4.5 2.7M592.8 724.2l4.6 2.9M461.1 728.3l5.9 1.8M475.1 728.1l6.1 1.9M481.4 727.1l5.8 1.9M485.6 728.6l5.9 1.9M495.0 728.5l5.8 2.0M499.5 729.5l5.7 1.9M540.8 728.3l5.7 2.4M545.7 727.7l5.3 2.4M570.2 729.4l5.4 2.7M575.9 728.6l5.7 3.0M578.4 729.9l5.3 2.8M594.6 728.3l4.8 2.9M696.5 729.0l1.9 6.0M422.8 733.6l5.1 1.2M431.4 732.6l5.1 1.3M462.3 732.6l5.4 1.5M466.5 732.8l5.7 1.6M471.3 732.9l5.7 1.7M476.6 732.0l5.4 1.6M493.6 732.3l5.0 1.6M497.5 733.9l5.8 1.9M501.7 733.2l6.0 2.0M507.5 732.5l5.6 1.9M543.2 733.9l5.4 2.2M587.2 731.8l4.7 2.6M698.9 734.3l1.7 5.8M708.3 731.9l0.8 5.2M465.8 737.3l5.3 1.4M468.8 737.7l5.5 1.5M476.1 738.0l5.6 1.5M483.8 737.7l5.9 1.7M505.6 735.9l5.8 1.9M546.1 737.6l5.2 2.0M553.7 738.3l5.2 2.1M569.4 735.8l5.3 2.4M586.3 735.8l5.7 2.9M590.2 737.5l5.0 2.6M704.1 737.3l1.2 5.3M442.6 742.6l6.1 1.4M458.2 742.7l5.1 1.2M472.8 740.1l5.4 1.4M478.3 740.7l5.5 1.5M481.8 741.0l5.3 1.4M488.3 741.5l5.4 1.5M501.2 741.7l5.5 1.6M508.7 740.9l5.2 1.6M512.8 742.3l5.3 1.6M517.7 742.8l5.4 1.6M578.7 740.4l5.0 2.3M582.4 740.8l5.4 2.5M586.2 743.0l5.0 2.3M434.8 745.8l6.1 1.3M456.3 745.5l5.1 1.1M483.5 746.8l5.9 1.5M490.9 744.3l6.0 1.6M505.6 746.9l5.0 1.4M510.9 744.6l5.8 1.7M570.8 746.4l4.9 1.9M573.7 746.5l5.9 2.3M585.7 746.3l5.3 2.3M591.3 745.4l5.8 2.7M432.4 750.8l5.3 1.0M481.7 750.8l5.8 1.3M486.0 751.2l5.4 1.2M497.9 749.8l5.9 1.5M512.7 751.5l5.3 1.4M523.3 750.7l6.1 1.7M556.0 751.3l5.3 1.7M562.1 750.2l5.4 1.9M571.6 748.7l5.6 2.1M577.1 750.8l5.5 2.1M581.3 751.0l5.7 2.2M587.3 750.0l5.0 2.1M430.3 755.3l6.2 1.1M466.1 754.6l5.7 1.1M469.1 755.9l5.3 1.0M484.5 754.1l6.1 1.3M490.6 754.6l6.1 1.4M494.4 753.4l5.9 1.3M498.8 754.7l5.7 1.3M511.2 753.1l5.5 1.4M565.2 753.8l5.1 1.7M571.5 755.9l6.0 2.0M580.6 753.7l5.1 1.9M584.0 754.6l5.1 1.9M483.8 757.4l6.1 1.2M487.2 757.3l5.3 1.1M495.9 758.0l5.8 1.2M503.1 758.5l5.8 1.2M508.9 758.8l5.9 1.3M512.5 759.2l6.2 1.4M522.7 758.1l5.5 1.3M568.3 758.4l5.3 1.6M577.1 757.2l5.9 2.0M588.8 758.8l4.9 1.7M434.9 763.3l5.4 0.8M445.1 762.5l6.0 0.9M494.9 763.3l5.4 1.0M505.6 763.0l5.9 1.2M515.9 762.8l5.2 1.1M525.8 763.5l5.4 1.1M530.3 764.5l5.5 1.2M574.4 761.7l5.5 1.6M487.5 767.1l5.9 1.0M497.6 765.8l6.2 1.1M512.1 767.7l5.2 0.9M516.5 765.9l5.2 1.0M522.8 767.8l5.7 1.1M527.8 766.0l5.1 1.0M531.6 767.5l5.6 1.1M587.3 767.6l5.1 1.4M489.2 771.2l6.1 0.9M496.5 772.2l5.6 0.8M498.4 771.1l5.3 0.8M509.8 770.6l5.8 0.9M520.0 772.7l5.3 0.9M539.8 771.9l6.1 1.1M576.5 772.4l5.2 1.2M590.0 770.9l5.8 1.5M478.8 776.7l6.1 0.7M491.1 775.1l5.4 0.7M513.9 776.0l5.3 0.7M523.4 776.8l5.2 0.7M528.5 776.7l6.3 0.9M531.0 777.4l5.4 0.8M537.8 776.3l5.4 0.8M571.7 776.6l5.6 1.1M578.6 774.7l5.3 1.1M586.6 775.9l5.5 1.2M500.4 779.6l6.1 0.7M505.7 780.6l5.8 0.7M518.5 779.4l6.0 0.8M540.9 779.3l5.3 0.8M576.3 780.3l5.4 0.9M581.5 779.9l5.3 1.0M584.3 779.3l5.6 1.1M589.7 781.4l6.1 1.1M427.1 784.3l5.4 0.4M481.4 783.1l5.2 0.5M532.8 785.9l5.7 0.6M541.0 785.9l6.2 0.7M546.7 786.0l5.4 0.6M554.1 785.9l5.7 0.7M573.7 783.5l6.2 0.9M578.4 785.5l6.0 0.8M588.7 786.1l5.9 0.9M445.6 787.9l5.6 0.3M505.9 787.8l6.4 0.5M513.9 788.6l5.3 0.4M525.2 787.7l6.3 0.6M530.5 789.1l6.0 0.5M533.7 789.9l5.4 0.4M561.1 790.3l5.4 0.5M568.8 787.6l5.7 0.7M576.4 788.6l5.7 0.6M579.2 787.2l6.0 0.8M585.6 788.6l5.4 0.7M431.9 794.5l5.4 0.2M476.3 794.7l6.0 0.3M517.0 793.9l5.2 0.3M528.4 794.3l5.7 0.3M533.9 792.1l5.4 0.4M542.5 791.7l6.2 0.5M546.8 792.2l5.8 0.4M557.1 793.2l5.6 0.4M563.9 793.0l5.2 0.4M567.0 791.9l5.9 0.5M573.3 793.5l5.2 0.4M577.8 793.3l5.6 0.5M582.2 793.2l5.9 0.5M428.7 798.7l6.0 0.1M440.0 796.7l5.3 0.2M464.3 798.0l6.4 0.2M468.5 796.2l5.6 0.2M509.0 796.1l6.1 0.3M524.2 796.8l5.5 0.2M535.5 796.9l5.9 0.3M544.9 797.2l5.6 0.2M548.4 797.2l5.5 0.3M565.4 797.8l5.9 0.3M571.3 797.8l6.1 0.3M575.7 797.0l6.1 0.3M580.3 797.0l6.0 0.3M584.8 797.0l5.9 0.4M452.2 802.5l5.3 0.0M501.1 802.0l6.2 0.1M521.2 801.8l6.3 0.1M532.0 801.6l5.7 0.1M538.6 803.3l6.2 0.1M541.1 800.8l6.1 0.1M548.8 802.6l5.3 0.1M577.8 802.9l6.3 0.1M468.7 804.6l5.5 0.0M506.0 806.9l5.5 -0.0M544.3 806.5l5.2 -0.0M555.7 804.6l6.3 0.0M565.2 806.1l6.3 -0.0M569.8 805.0l5.7 -0.0M533.5 809.4l5.7 -0.1M541.2 808.7l5.9 -0.1M547.7 809.3l5.9 -0.1M557.5 808.9l5.4 -0.1M567.1 811.2l6.3 -0.3M576.6 811.3l5.4 -0.2M587.2 810.6l5.7 -0.2M498.5 813.6l6.2 -0.2M539.6 815.3l6.0 -0.3M546.5 815.5l6.0 -0.4M550.4 813.0l5.5 -0.3M559.2 814.9l5.7 -0.3M564.5 814.0l5.7 -0.3M568.8 816.0l6.1 -0.4M576.4 813.9l6.0 -0.4M581.0 815.1l6.0 -0.4M461.3 819.5l5.5 -0.3M478.3 820.1l5.7 -0.4M527.2 819.7l5.4 -0.4M532.4 820.1l5.7 -0.5M542.2 817.3l5.5 -0.4M546.5 818.2l6.0 -0.5M551.9 818.4l6.1 -0.5M556.8 818.0l5.4 -0.4M571.8 818.7l5.5 -0.5M578.8 819.3l5.4 -0.6M518.5 823.5l5.8 -0.5M541.4 824.5l5.9 -0.6M548.5 824.7l5.6 -0.6M553.8 822.0l5.5 -0.6M560.3 824.6l5.2 -0.6M583.6 823.8l6.1 -0.8M462.7 828.7l5.4 -0.5M506.9 826.0l5.8 -0.6M537.2 827.5l6.3 -0.8M546.8 828.4l5.3 -0.7M568.3 827.8l6.1 -0.9M572.4 829.0l5.2 -0.8M438.7 831.5l5.9 -0.6M470.3 832.2l5.8 -0.6M479.3 831.4l6.2 -0.7M495.8 833.4l5.6 -0.7M510.9 831.3l5.6 -0.7M519.6 832.1l6.2 -0.8M550.8 831.1l5.5 -0.8M558.7 830.8l6.3 -1.0M565.7 832.9l5.6 -1.0M570.4 833.4l6.2 -1.2M584.0 832.7l5.5 -1.1M442.0 835.8l5.5 -0.6M453.6 835.4l5.3 -0.6M462.2 835.0l5.6 -0.7M466.2 835.9l5.4 -0.7M481.0 834.5l5.8 -0.7M488.8 836.1l5.3 -0.7M501.8 835.0l6.2 -0.9M511.6 834.9l5.5 -0.8M561.8 835.2l6.2 -1.2M567.5 835.4l5.2 -1.0M573.4 837.6l5.3 -1.2M577.8 837.6l5.2 -1.2M583.4 834.6l5.9 -1.3M439.2 839.5l5.7 -0.7M453.9 839.7l6.2 -0.8M474.9 840.0l5.6 -0.8M504.9 839.6l5.3 -0.9M560.4 840.2l5.5 -1.2M570.6 841.6l5.9 -1.4M575.0 841.4l5.2 -1.3M586.3 839.6l5.6 -1.5M698.9 840.3l3.2 -5.4M574.0 845.2l6.0 -1.7M586.1 843.4l6.1 -1.7M672.3 843.5l4.1 -3.3M461.5 848.3l5.5 -0.9M494.5 848.3l5.8 -1.1M503.8 849.3l5.3 -1.1M531.4 848.9l5.1 -1.2M543.5 847.7l5.4 -1.3M574.8 848.0l6.0 -1.8M655.7 850.4l5.0 -3.5M660.4 847.5l4.6 -3.3M665.2 848.0l4.1 -3.2M668.8 848.1l4.8 -4.0M675.0 849.3l4.2 -4.1M679.2 849.4l4.0 -4.3M685.0 849.5l3.8 -4.8M690.8 848.8l3.0 -4.5M695.2 847.6l2.7 -4.6M699.0 850.0l2.4 -5.1M711.2 849.2l1.1 -5.3M461.8 852.1l5.2 -0.9M466.3 851.8l5.9 -1.1M472.0 854.3l5.6 -1.1M542.9 853.3l5.5 -1.5M548.5 854.8l5.6 -1.6M568.4 853.8l5.6 -1.8M573.6 852.9l5.5 -1.8M637.9 853.0l4.8 -2.8M647.0 852.1l5.1 -3.3M653.8 852.9l4.7 -3.4M657.0 852.5l4.9 -3.7M667.0 854.2l4.4 -4.0M670.9 854.5l4.4 -4.4M678.6 854.0l4.0 -4.7M686.5 854.5l3.6 -5.3M698.5 853.1l2.1 -4.8M701.8 852.3l2.1 -5.4M531.5 857.8l5.8 -1.6M564.5 856.7l6.0 -2.0M568.6 856.6l5.8 -2.0M615.7 859.1l5.1 -2.6M619.6 859.0l5.1 -2.7M643.7 858.2l5.2 -3.6M656.5 857.3l4.2 -3.5M660.8 858.3l3.9 -3.6M663.6 858.6l4.3 -4.1M670.9 858.4l4.3 -4.7M686.3 858.0l3.0 -4.7M691.3 857.4l3.0 -5.5M696.1 856.2l2.3 -4.8M705.9 857.6l1.5 -5.6M536.2 862.0l5.7 -1.8M561.1 861.8l5.3 -1.9M568.6 861.8l5.0 -1.9M572.9 860.7l5.2 -2.0M617.0 861.3l4.8 -2.6M623.7 861.8l4.8 -2.8M627.8 860.8l4.4 -2.7M633.3 861.0l5.3 -3.4M638.4 862.2l4.9 -3.4M641.4 860.5l5.1 -3.6M647.9 860.6l5.0 -3.8M656.8 860.7l4.6 -4.0M663.0 861.9l4.0 -4.0M667.7 861.3l3.7 -4.0M676.1 860.4l3.3 -4.2M682.5 860.9l3.2 -4.8M696.9 861.7l2.0 -4.9M701.3 862.1l1.8 -5.5M706.8 861.8l1.4 -6.2M711.3 862.7l0.9 -6.0M470.0 866.1l6.0 -1.5M494.2 866.0l5.6 -1.5M528.9 865.6l5.8 -1.8M535.5 865.3l5.8 -1.9M560.1 866.6l5.2 -2.0M571.2 867.5l5.2 -2.2M599.0 865.4l5.5 -2.8M610.2 864.9l4.6 -2.5M618.7 865.0l4.9 -2.9M625.7 865.5l4.9 -3.2M629.1 867.0l5.2 -3.6M634.0 867.2l4.6 -3.3M648.4 866.4l4.6 -3.9M658.8 865.3l4.5 -4.4M664.1 866.3l3.6 -3.9M676.1 866.0l3.1 -4.3M679.6 866.9l3.5 -5.3M694.4 864.7l2.2 -5.1M463.9 869.7l5.9 -1.5M536.2 872.1l5.1 -1.9M579.0 869.5l5.4 -2.5M582.3 870.5l5.1 -2.4M588.3 871.2l4.9 -2.4M601.5 871.6l4.6 -2.6M607.6 869.3l5.0 -2.9M616.8 871.3l5.0 -3.2M623.5 869.1l4.5 -3.0M626.9 871.6l5.2 -3.7M631.6 871.8l4.8 -3.7M636.6 870.9l4.8 -3.8M641.1 870.4l4.5 -3.7M647.8 868.9l4.1 -3.7M651.8 869.5l4.2 -4.0M656.6 872.0l4.3 -4.6M663.3 871.8l3.9 -4.5M677.6 872.0l3.1 -5.0M702.9 870.5l1.5 -5.6M469.1 876.2l5.4 -1.5M589.2 873.6l4.7 -2.4M599.8 875.8l4.6 -2.7M604.5 874.3l4.5 -2.7M610.0 875.2l5.3 -3.4M615.2 874.4l4.8 -3.2M620.2 873.4l4.4 -3.0M625.9 873.6l4.8 -3.5M645.7 875.8l4.4 -4.2M648.4 874.4l4.3 -4.2M675.9 873.2l3.3 -5.2M678.8 874.1l3.2 -5.3M478.4 879.1l5.5 -1.7M513.3 878.6l6.0 -2.1M586.3 878.5l5.6 -3.1M596.8 879.7l4.7 -2.9M603.2 880.3l4.5 -2.9M609.0 880.3l4.4 -3.0M623.8 877.8l5.0 -3.8M634.0 879.4l4.7 -4.1M637.4 880.5l4.4 -4.1M648.7 878.4l3.7 -3.8M678.4 880.0l3.0 -5.5M686.1 879.9l2.5 -5.6M566.4 883.0l5.4 -2.7M570.1 883.9l4.9 -2.6M581.1 882.6l4.6 -2.6M585.2 884.5l5.3 -3.1M591.0 882.0l4.6 -2.8M601.3 883.0l5.1 -3.4M614.6 882.9l5.0 -3.7M624.7 882.5l4.4 -3.6M670.3 882.5l3.1 -4.9M701.4 882.0l1.4 -5.6M704.2 882.3l1.1 -5.2M486.3 887.1l5.1 -1.8M563.9 887.6l5.2 -2.7M566.2 886.2l5.4 -2.8M573.0 886.9l5.4 -3.0M578.8 887.4l4.5 -2.6M583.3 888.6l4.9 -3.0M592.5 888.1l4.8 -3.1M599.1 889.2l4.6 -3.2M603.8 888.1l4.3 -3.1M609.0 886.8l4.2 -3.1M618.1 887.5l4.9 -4.0M623.3 888.1l4.8 -4.2M626.7 886.8l4.3 -3.8M661.0 888.2l3.6 -5.1M676.7 888.5l2.8 -5.4M688.7 889.0l2.0 -5.4M564.5 892.1l4.6 -2.6M568.7 891.6l4.7 -2.7M574.1 893.4l5.1 -3.1M581.4 893.3l5.3 -3.4M586.3 892.1l4.4 -2.9M596.3 891.4l5.0 -3.5M599.1 890.6l4.5 -3.2M604.5 891.7l4.3 -3.2M633.6 893.4l4.0 -4.1M650.8 890.8l3.9 -4.8M654.7 890.8l3.4 -4.5M674.8 893.2l2.6 -5.0M680.5 893.0l2.3 -5.2M685.8 892.9l2.2 -5.7M696.3 892.3l1.5 -5.4M701.2 891.0l1.2 -5.5M705.7 890.5l0.9 -5.2M713.9 893.6l0.4 -5.4M552.4 897.8l5.1 -2.8M556.5 896.0l5.4 -3.0M562.0 897.8l4.7 -2.7M569.0 896.2l5.3 -3.2M573.5 894.9l5.4 -3.3M576.7 895.4l4.7 -2.9M582.3 895.0l5.1 -3.3M592.3 895.8l4.7 -3.3M597.4 896.4l4.5 -3.3M601.8 895.8l4.5 -3.4M642.9 897.5l3.5 -4.3M647.1 896.4l3.4 -4.3M668.4 895.9l2.7 -4.7M672.4 897.7l2.8 -5.4M676.8 897.0l2.3 -4.9M703.3 894.9l1.0 -5.4M708.3 894.9l0.7 -5.3M489.6 901.2l5.4 -2.2M501.5 899.8l5.5 -2.4M543.6 899.9l5.5 -3.0M549.0 899.9l5.2 -2.9M554.2 901.6l5.0 -2.9M559.9 899.1l5.5 -3.2M564.5 902.1l4.5 -2.8M569.7 901.1l4.5 -2.9M575.9 900.7l5.1 -3.4M580.6 899.6l4.7 -3.2M590.8 899.3l5.0 -3.6M611.4 899.9l4.0 -3.5M615.6 900.7l3.9 -3.5M645.9 902.2l3.9 -5.1M659.9 900.3l2.8 -4.4M675.9 900.6l2.4 -5.3M681.1 900.4l2.0 -4.9M685.1 902.2l1.8 -5.0M690.6 899.8l1.6 -5.2M701.1 901.5l1.1 -5.5M542.0 905.5l5.1 -2.9M551.0 906.4l5.3 -3.2M562.3 905.9l4.7 -3.0M566.3 906.3l4.5 -3.0M578.3 906.2l4.9 -3.5M597.1 905.6l4.1 -3.3M606.2 904.3l4.7 -4.1M627.3 903.9l4.4 -4.6M632.9 905.1l4.2 -4.8M643.9 904.0l3.6 -4.7M655.9 903.4l3.4 -5.2M677.8 906.5l2.3 -5.6M684.1 904.1l2.1 -5.9M693.2 904.6l1.4 -5.3M698.9 906.4l1.3 -6.1M536.6 910.3l4.8 -2.7M554.3 909.8l5.1 -3.2M559.3 909.0l5.1 -3.3M564.5 909.6l4.9 -3.3M570.6 908.6l5.0 -3.4M580.0 908.0l4.7 -3.5M600.1 908.1l4.7 -4.0M605.3 908.7l4.2 -3.8M609.6 908.7l4.5 -4.3M615.8 910.0l4.3 -4.3M621.6 908.4l4.0 -4.2M660.0 908.2l3.1 -5.3M680.4 908.8l1.9 -4.9M690.7 909.8l1.5 -5.5M696.2 907.7l1.2 -5.3M698.9 909.3l1.2 -5.9M526.3 913.2l4.6 -2.5M547.4 913.9l4.5 -2.9M551.6 913.5l5.1 -3.3M558.1 912.8l5.1 -3.4M564.0 912.3l5.1 -3.5M567.2 912.7l5.2 -3.7M577.5 914.6l4.3 -3.3M593.0 913.7l4.2 -3.6M598.8 914.8l4.4 -4.0M606.1 912.6l4.2 -4.0M677.4 914.5l2.0 -5.2M681.2 914.5l2.1 -5.9M688.4 914.6l1.6 -5.6M698.7 915.0l1.1 -5.6M534.0 917.4l5.1 -3.1M539.2 917.2l4.5 -2.8M543.7 917.6l4.6 -2.9M549.1 916.6l5.3 -3.4M560.7 917.1l4.4 -3.1M579.1 919.4l4.8 -3.9M586.2 916.7l4.7 -3.9M604.0 919.1l4.2 -4.1M609.8 919.3l4.0 -4.1M685.0 917.2l1.7 -5.4M690.8 918.5l1.3 -5.2M511.2 921.7l4.7 -2.7M523.1 921.6l4.5 -2.7M532.3 920.9l5.2 -3.2M543.3 922.5l4.5 -3.0M553.4 920.7l5.1 -3.5M557.5 922.0l4.6 -3.3M562.4 922.4l4.3 -3.2M572.0 923.7l4.6 -3.7M577.8 921.5l4.1 -3.3M586.1 921.5l4.3 -3.8M597.5 922.5l4.4 -4.2M687.0 922.9l1.5 -5.5M693.1 922.6l1.3 -5.9M516.3 927.1l5.1 -3.0M534.8 925.8l4.6 -3.0M541.5 925.2l5.1 -3.4M555.5 927.9l4.8 -3.6M571.3 925.5l4.8 -3.9M580.3 926.0l3.9 -3.4M584.8 925.1l4.7 -4.1M603.4 925.8l3.7 -3.8M656.4 926.5l2.9 -5.4M679.3 927.4l1.8 -5.3M488.7 930.7l4.6 -2.5M497.5 932.1l5.0 -2.9M508.6 930.8l5.0 -3.0M514.0 931.2l4.7 -2.9M523.3 929.2l4.8 -3.1M531.5 931.6l5.0 -3.4M536.5 932.2l4.5 -3.1M541.7 929.2l4.4 -3.1M552.8 930.8l5.0 -3.8M556.8 930.1l4.4 -3.4M571.2 932.1l4.0 -3.4M581.0 930.0l4.1 -3.7M587.1 930.6l4.5 -4.2M613.7 931.0l3.5 -4.2M618.5 931.8l3.4 -4.3M673.8 930.4l2.0 -5.4M688.6 929.4l1.5 -6.0M696.0 930.2l1.0 -5.3M488.5 936.2l4.7 -2.7M495.7 935.9l4.9 -2.9M505.7 935.1l4.5 -2.7M513.7 934.9l5.0 -3.1M520.8 934.2l4.8 -3.1M534.1 934.6l5.2 -3.6M544.3 933.5l4.6 -3.3M548.5 936.4l4.8 -3.7M568.7 935.2l4.2 -3.6M580.1 936.2l4.6 -4.3M594.2 934.4l4.0 -4.1M618.8 936.1l3.5 -4.5M635.8 935.3l3.4 -5.3M681.3 934.8l1.5 -5.0M685.6 935.6l1.4 -5.4M688.9 933.8l1.5 -6.1M472.0 939.4l5.4 -2.9M476.6 939.4l5.3 -2.9M487.5 938.3l5.0 -2.9M493.8 939.4l5.3 -3.1M501.7 937.8l5.4 -3.3M547.9 939.9l4.5 -3.5M552.8 939.5l4.1 -3.3M558.5 940.9l4.9 -4.1M567.7 939.8l4.0 -3.6M583.4 938.6l4.0 -3.9M586.6 938.8l4.0 -4.0M606.4 940.3l3.8 -4.6M626.0 939.0l3.5 -5.0M631.1 938.9l3.3 -4.9M642.7 939.5l2.8 -4.8M656.1 939.4l2.4 -5.1M676.1 939.7l1.8 -5.6M693.9 940.4l1.0 -5.3M464.5 943.5l4.6 -2.5M475.4 942.2l4.6 -2.6M481.3 944.2l4.6 -2.7M483.7 943.9l4.6 -2.7M489.7 943.0l5.2 -3.1M499.8 943.7l5.1 -3.2M504.9 942.6l4.6 -3.0M516.1 944.8l4.5 -3.1M525.8 942.2l4.7 -3.3M535.5 942.0l4.5 -3.3M546.4 943.8l4.7 -3.8M566.2 944.9l4.2 -3.8M569.0 944.6l4.2 -3.9M578.7 943.6l4.4 -4.3M595.5 943.2l3.6 -4.0M628.5 944.5l2.9 -4.4M641.5 944.0l2.6 -4.6M643.4 942.4l2.7 -4.9M655.4 943.8l2.7 -5.8M688.8 942.1l1.3 -5.7M472.8 947.4l5.3 -3.0M476.4 947.3l4.8 -2.8M481.0 947.4l4.5 -2.7M489.0 949.4l5.2 -3.3M506.1 947.1l4.8 -3.2M513.2 948.2l4.9 -3.4M518.1 946.3l4.6 -3.2M541.2 947.3l4.7 -3.7M547.1 948.8l4.2 -3.5M561.4 948.1l4.0 -3.6M568.1 948.5l4.1 -3.9M596.5 946.5l4.0 -4.6M603.5 949.1l3.4 -4.1M623.9 946.8l3.4 -5.0M638.8 947.4l2.6 -4.6M646.7 949.4l2.6 -5.2M653.3 946.8l2.5 -5.3M658.8 948.0l2.1 -4.8M671.2 948.4l1.9 -5.6M676.0 947.1l1.7 -5.5M683.3 947.3l1.5 -5.7M456.0 953.7l5.3 -3.0M474.8 953.0l5.5 -3.3M486.3 953.1l4.7 -3.0M490.8 953.7l4.8 -3.1M494.7 953.4l5.1 -3.3M501.3 953.3l5.3 -3.6M521.3 953.5l4.9 -3.6M526.4 950.8l4.2 -3.2M545.3 953.4l4.0 -3.4M568.9 952.8l4.5 -4.4M573.7 953.5l4.5 -4.5M586.2 951.0l3.6 -3.9M599.8 952.4l3.4 -4.2M613.8 952.5l3.1 -4.3M621.2 952.4l3.0 -4.5M629.1 953.3l3.3 -5.3M635.6 951.5l2.7 -4.6M649.9 951.6l2.5 -5.2M666.1 952.7l2.1 -5.8M675.5 951.7l1.8 -5.9M456.2 955.0l4.7 -2.7M462.9 955.3l5.2 -3.1M472.8 955.1l5.0 -3.1M477.6 955.6l4.9 -3.1M484.1 957.8l5.1 -3.3M487.0 955.1l4.6 -3.0M492.8 957.5l4.5 -3.0M501.9 955.2l4.4 -3.0M527.1 957.1l4.8 -3.8M531.6 955.2l4.2 -3.4M543.5 956.8l4.2 -3.6M547.3 956.9l4.5 -3.9M568.8 956.4l4.4 -4.4M571.9 956.2l4.2 -4.2M583.8 956.0l4.3 -4.7M602.8 956.8l3.4 -4.4M618.0 955.1l3.0 -4.4M638.7 955.6l2.5 -4.6M643.0 955.0l2.6 -5.1M470.6 960.7l5.2 -3.3M475.0 960.3l4.7 -3.0M478.7 961.2l5.2 -3.3M488.8 961.3l5.3 -3.6M495.4 960.7l4.9 -3.4M500.9 961.2l4.4 -3.2M509.8 962.1l4.4 -3.3M525.0 961.2l4.7 -3.8M536.6 962.1l4.0 -3.4M545.6 960.6l4.6 -4.1M679.7 960.8l1.4 -5.4M711.5 960.3l0.3 -5.8M716.0 959.6l0.1 -5.7M719.7 959.6l0.0 -5.7M448.7 966.4l5.3 -3.1M452.9 965.4l4.5 -2.7M457.8 966.3l4.9 -3.0M461.8 964.3l5.0 -3.1M471.3 966.6l4.8 -3.1M491.1 966.1l4.3 -3.0M518.3 963.8l4.7 -3.7M526.2 964.1l4.7 -3.8M536.8 965.9l4.4 -3.8M592.5 966.5l3.6 -4.5M628.6 965.4l3.0 -5.3M632.8 964.4l2.7 -4.9M639.0 965.6l2.7 -5.4M646.4 964.0l2.5 -5.5M691.5 964.3l1.0 -5.5M697.5 964.0l0.7 -5.2M702.8 965.2l0.6 -5.8M454.3 970.8l4.8 -3.0M459.3 970.6l4.5 -2.9M465.8 970.7l5.1 -3.3M479.2 970.5l4.4 -3.0M495.1 968.8l4.6 -3.4M509.6 970.0l5.0 -3.9M519.5 968.2l4.2 -3.4M526.3 969.1l4.6 -3.9M545.8 970.9l4.4 -4.2M558.6 967.9l4.1 -4.1M585.6 970.5l3.6 -4.4M588.7 968.4l3.8 -4.8M594.0 970.6l3.3 -4.3M626.1 969.9l2.8 -4.9M648.7 968.5l2.3 -5.4M656.0 968.9l1.9 -5.0M664.9 968.8l2.0 -5.9M676.2 969.2l1.5 -5.8M681.5 970.4l1.2 -5.3M686.2 970.0l1.1 -5.2M699.9 970.6l0.7 -5.7M709.7 967.9l0.4 -5.6M463.4 973.2l4.9 -3.2M466.0 973.6l4.7 -3.1M473.8 972.4l4.8 -3.3M478.8 974.6l5.0 -3.5M492.6 975.0l4.5 -3.4M503.8 975.0l4.9 -3.9M512.9 972.6l4.6 -3.7M517.8 974.2l4.8 -4.0M532.3 972.7l4.1 -3.6M536.6 974.4l4.2 -3.9M552.6 974.8l4.3 -4.4M575.9 975.1l4.1 -4.9M581.7 973.4l3.7 -4.5M593.5 973.5l3.4 -4.5M611.5 972.3l3.0 -4.6M622.7 974.9l2.7 -4.8M625.9 974.4l2.9 -5.3M640.9 973.9l2.6 -5.6M648.2 975.3l2.2 -5.2M666.1 974.8l1.8 -5.6M672.6 974.8l1.6 -5.6M688.4 973.2l1.1 -6.0M699.1 974.8l0.6 -5.3M713.1 974.0l0.3 -6.2M719.0 973.3l0.0 -5.7M465.1 978.4l4.8 -3.2M471.6 977.0l5.0 -3.4M475.8 977.5l4.6 -3.3M510.6 976.7l4.6 -3.7M540.9 977.1l4.1 -3.9M558.5 978.8l3.6 -3.8M568.6 979.0l4.1 -4.7M574.9 978.3l3.4 -4.1M580.4 976.6l3.5 -4.3M585.4 977.3l3.2 -4.1M590.9 979.6l3.4 -4.6M595.4 978.3l3.4 -4.7M603.8 979.4l3.2 -4.8M619.9 976.7l3.2 -5.5M640.8 979.2l2.2 -4.9M653.9 978.4l2.1 -5.4M658.8 977.3l1.9 -5.3M696.5 977.3l0.7 -5.3M704.2 978.9l0.6 -6.2M711.2 978.1l0.3 -6.1M713.5 976.9l0.2 -5.7M720.3 979.3l-0.0 -5.9M458.3 982.8l4.4 -3.0M474.0 980.8l5.0 -3.5M478.2 981.1l5.2 -3.8M481.2 982.5l4.7 -3.5M492.3 982.8l4.5 -3.5M538.2 981.0l3.9 -3.8M547.4 982.4l3.7 -3.8M562.0 982.6l4.2 -4.7M571.3 980.8l3.8 -4.5M576.8 983.1l3.4 -4.2M588.8 981.6l3.5 -4.6M608.8 981.2l3.4 -5.3M631.4 981.5l2.7 -5.4M658.7 983.0l2.0 -5.9M672.7 980.8l1.5 -5.6M678.1 981.0l1.5 -6.2M686.4 982.0l1.1 -5.8M698.3 981.7l0.8 -6.3M708.2 981.5l0.4 -5.7M713.7 981.4l0.2 -6.3M716.8 983.3l0.1 -5.7M495.6 987.4l4.6 -3.7M520.6 986.5l4.7 -4.3M525.6 985.0l4.3 -3.9M556.4 985.9l4.0 -4.5M561.1 988.0l3.7 -4.3M565.3 988.1l3.5 -4.1M579.5 986.5l3.5 -4.5M584.5 987.6l3.4 -4.6M623.5 985.1l2.9 -5.5M636.0 987.8l2.4 -5.2M638.7 986.4l2.4 -5.3M643.4 986.8l2.3 -5.5M661.5 986.7l1.9 -5.9M664.3 986.9l1.8 -5.9M671.3 985.8l1.4 -5.3M679.6 986.6l1.3 -6.0M698.9 986.1l0.7 -5.8M718.6 987.6l0.0 -5.9M456.9 990.2l4.4 -3.1M467.7 992.4l5.1 -3.8M475.9 990.5l4.6 -3.5M481.3 992.2l4.4 -3.5M491.4 989.7l4.8 -3.9M502.3 990.3l4.1 -3.5M518.8 991.0l3.8 -3.5M543.3 990.1l3.7 -3.9M548.3 991.5l3.6 -3.9M561.5 991.8l3.8 -4.5M572.9 989.9l3.8 -4.8M577.1 991.0l3.3 -4.2M582.1 990.4l3.7 -4.9M593.4 991.9l3.1 -4.6M611.1 990.2l2.7 -4.7M623.8 990.0l2.5 -4.8M633.4 992.3l2.6 -5.7M646.6 990.9l2.3 -5.9M656.4 991.4l2.0 -5.9M703.4 990.9l0.5 -5.5M459.8 994.5l4.8 -3.5M463.4 996.7l4.6 -3.4M469.3 994.5l5.0 -3.8M474.7 996.4l4.7 -3.7M481.2 995.8l4.7 -3.8M495.1 994.5l4.6 -3.9M505.1 995.7l4.8 -4.2M520.3 996.8l4.0 -3.8M535.9 995.6l3.7 -3.9M579.8 995.6l3.4 -4.6M593.5 996.4l3.2 -4.8M604.4 996.8l3.0 -5.0M620.5 995.9l2.9 -5.5M630.0 994.5l2.4 -5.1M650.8 994.7l2.0 -5.4M665.7 995.2l1.5 -5.1M674.2 994.4l1.4 -5.7M704.7 995.5l0.5 -5.9M456.2 1000.4l4.4 -3.3M503.4 1000.8l4.2 -3.8M507.2 998.8l4.2 -3.8M513.2 999.0l4.1 -3.9M537.7 998.3l3.6 -3.8M548.0 999.7l4.2 -4.8M551.0 1000.1l3.7 -4.2M573.1 1000.0l3.5 -4.6M578.0 998.1l3.7 -5.0M584.0 999.1l3.3 -4.8M601.4 999.0l3.1 -5.1M642.4 998.6l2.1 -5.1M654.1 998.1l1.9 -5.6M655.9 998.0l1.9 -5.6M663.0 998.1l1.6 -5.4M688.2 1000.0l1.0 -6.3M692.2 998.7l0.8 -5.2M706.2 1000.1l0.4 -5.6M712.7 1000.4l0.2 -6.0M454.9 1002.2l4.5 -3.3M479.2 1004.1l4.2 -3.5M483.7 1005.0l4.7 -3.9M488.5 1005.2l4.0 -3.5M499.4 1003.2l4.1 -3.7M504.8 1005.0l4.4 -4.1M514.6 1003.5l4.2 -4.0M529.1 1005.3l4.1 -4.3M550.1 1002.2l3.6 -4.1M553.9 1004.7l3.8 -4.5M560.8 1005.0l3.5 -4.4M590.7 1004.7l3.4 -5.3M615.3 1002.2l2.8 -5.2M625.4 1004.8l2.5 -5.3M640.2 1005.3l2.3 -5.8M671.2 1004.8l1.4 -5.9M679.8 1002.8l1.1 -5.3M686.1 1005.4l0.9 -5.3M695.3 1004.0l0.8 -6.2M714.6 1005.2l0.1 -5.5M457.5 1008.1l4.8 -3.7M472.0 1006.6l4.4 -3.6M523.5 1009.2l4.4 -4.6M528.0 1009.4l3.7 -3.9M537.1 1009.2l3.5 -3.9M548.4 1008.7l3.7 -4.4M553.6 1009.1l3.4 -4.1M557.3 1009.7l3.3 -4.1M561.2 1008.4l3.7 -4.8M566.8 1008.7l3.4 -4.5M576.5 1007.1l3.1 -4.4M583.5 1007.0l3.5 -5.2M588.8 1008.9l3.0 -4.7M596.0 1007.2l3.0 -4.9M612.2 1007.6l2.7 -5.0M627.9 1009.3l2.3 -5.2M646.7 1006.6l2.2 -6.0M663.1 1007.8l1.6 -5.7M673.3 1007.7l1.4 -6.2M711.4 1009.0l0.3 -6.3M466.4 1011.5l4.9 -4.0M484.0 1013.6l3.9 -3.5M498.5 1013.3l3.9 -3.7M514.6 1014.0l4.2 -4.2M521.2 1013.7l3.9 -4.1M524.6 1011.5l4.3 -4.5M529.6 1011.4l3.7 -4.0M543.9 1013.5l3.6 -4.3M579.3 1013.5l3.5 -5.2M601.1 1011.3l3.0 -5.2M609.1 1011.5l2.9 -5.4M614.7 1012.0l2.5 -5.0M661.2 1012.9l1.7 -5.9M666.4 1011.1l1.3 -5.1M669.9 1012.2l1.4 -5.9M680.4 1012.8l1.1 -5.8M705.1 1012.2l0.4 -5.6M461.3 1016.4l4.9 -4.0M493.8 1017.6l4.5 -4.2M497.4 1015.9l4.1 -3.9M500.9 1017.1l3.9 -3.8M512.0 1016.1l4.1 -4.2M536.2 1015.4l3.7 -4.3M546.7 1016.9l3.7 -4.5M551.4 1016.7l3.3 -4.2M560.9 1017.6l3.4 -4.5M566.0 1016.6l3.6 -4.9M577.2 1018.1l3.2 -4.8M583.6 1015.8l2.9 -4.5M588.3 1016.7l3.1 -5.0M599.1 1015.6l2.8 -4.9M616.0 1017.8l2.6 -5.4M631.0 1015.3l2.1 -4.9M643.8 1017.3l2.0 -5.5M668.9 1016.0l1.3 -5.5M698.5 1015.2l0.6 -5.8M703.3 1017.4l0.5 -5.8M706.2 1017.2l0.4 -5.8M464.4 1022.3l4.0 -3.4M510.7 1021.4l3.8 -4.0M534.6 1021.3l3.7 -4.4M559.6 1020.9l3.2 -4.4M564.3 1022.4l3.5 -4.9M600.9 1020.5l2.7 -4.9M603.7 1021.9l2.7 -5.0M615.2 1020.8l2.5 -5.2M623.6 1020.0l2.4 -5.4M636.6 1022.2l1.9 -5.1M660.5 1020.9l1.7 -6.1M671.5 1021.4l1.2 -5.2M673.5 1020.3l1.3 -6.1M684.6 1020.3l0.9 -5.3M694.8 1021.5l0.6 -5.2M698.5 1022.2l0.5 -5.3M488.6 1025.6l4.0 -3.8M492.8 1025.0l4.3 -4.1M521.7 1025.5l4.0 -4.4M526.8 1025.8l4.0 -4.5M531.3 1024.0l4.0 -4.6M536.0 1026.3l4.0 -4.8M557.8 1026.4l3.4 -4.6M573.8 1025.6l3.1 -4.7M576.3 1025.4l3.2 -4.9M617.4 1024.2l2.6 -5.5M636.0 1024.2l2.2 -5.7M648.2 1025.0l1.9 -5.9M652.9 1023.9l1.7 -5.6M668.6 1025.4l1.3 -5.6M692.8 1026.0l0.7 -5.3M702.0 1024.3l0.5 -5.5M716.0 1025.4l0.1 -5.8M464.3 1028.6l4.4 -3.8M469.8 1028.7l4.7 -4.2M494.6 1030.3l3.8 -3.8M500.2 1029.5l3.8 -3.9M519.1 1028.3l4.0 -4.4M539.9 1030.2l3.5 -4.4M545.1 1029.1l3.8 -4.8M550.0 1028.4l3.7 -4.8M561.0 1031.2l3.0 -4.3M570.1 1030.9l3.1 -4.7M600.0 1029.0l2.6 -4.8M603.7 1031.0l2.8 -5.4M619.5 1029.1l2.1 -4.8M624.3 1031.0l2.4 -5.7M631.1 1029.6l2.2 -5.7M650.5 1029.6l1.7 -5.4M668.9 1030.5l1.3 -5.7M684.2 1029.6l0.8 -5.3M709.3 1028.6l0.3 -5.4M719.5 1030.9l0.0 -5.8M477.6 1032.9l4.6 -4.3M486.1 1034.2l4.4 -4.3M502.1 1033.4l4.3 -4.5M523.4 1032.5l3.9 -4.5M527.5 1034.5l3.4 -4.0M532.1 1033.9l3.4 -4.1M558.4 1033.5l3.2 -4.5M561.3 1034.7l3.0 -4.3M573.9 1034.8l3.4 -5.3M589.0 1034.8l2.6 -4.6M593.1 1032.6l3.0 -5.3M607.8 1034.9l2.7 -5.6M612.3 1033.1l2.7 -5.6M618.3 1033.8l2.6 -5.8M626.9 1033.5l2.0 -4.9M633.9 1034.7l2.0 -5.3M642.8 1034.6l1.8 -5.5M651.3 1034.0l1.5 -5.1M692.8 1033.4l0.6 -5.2M696.1 1033.8l0.6 -5.5M464.8 1037.2l4.1 -3.7M489.2 1039.1l3.7 -3.7M495.1 1038.5l3.6 -3.8M511.0 1037.5l3.9 -4.3M526.5 1038.2l3.7 -4.5M543.8 1039.0l3.6 -4.8M555.0 1038.3l3.4 -4.8M560.2 1037.0l3.2 -4.7M571.3 1037.7l2.9 -4.6M584.7 1039.1l2.9 -5.0M603.5 1038.2l2.5 -5.0M611.4 1039.7l2.6 -5.6M615.7 1038.2l2.3 -5.2M620.7 1039.3l2.5 -5.8M631.4 1039.7l1.9 -5.0M650.3 1039.5l1.7 -5.9M656.5 1039.0l1.4 -5.1M659.6 1038.4l1.5 -5.8M669.1 1039.3l1.3 -6.2M680.8 1038.0l0.9 -5.4M693.6 1037.3l0.7 -6.1M463.5 1043.4l4.6 -4.3M473.8 1042.6l4.5 -4.4M488.5 1041.6l4.2 -4.3M493.0 1041.3l4.0 -4.2M497.1 1043.8l3.9 -4.2M513.3 1042.8l3.9 -4.5M538.8 1043.5l3.2 -4.2M548.8 1041.9l3.4 -4.7M557.3 1042.8l3.4 -5.0M571.1 1041.2l2.9 -4.6M587.0 1043.4l2.6 -4.6M591.5 1042.5l2.6 -4.8M602.3 1044.0l2.5 -5.0M606.9 1042.6l2.6 -5.4M618.4 1041.9l2.1 -4.8M622.9 1044.0l2.3 -5.7M642.2 1043.0l1.8 -5.5M666.7 1042.9l1.3 -5.9M671.4 1044.0l1.0 -5.1M697.0 1042.9l0.5 -5.6M702.4 1041.3l0.4 -5.7M708.7 1043.6l0.3 -6.3M717.2 1042.7l0.1 -6.4M474.4 1048.2l4.2 -4.2M478.6 1047.7l3.8 -3.8M485.5 1048.3l3.7 -3.8M490.7 1045.4l4.0 -4.2M511.5 1048.2l3.6 -4.3M519.8 1048.4l3.6 -4.3M531.6 1045.8l3.9 -4.9M545.7 1047.5l3.6 -5.0M565.7 1046.5l3.3 -5.1M569.2 1047.0l3.0 -4.8M574.2 1046.0l2.9 -4.9M615.1 1046.9l2.5 -5.7M620.1 1045.8l2.4 -5.7M654.9 1046.6l1.4 -5.4M658.8 1047.1l1.3 -5.3M665.0 1045.6l1.4 -5.9M674.4 1046.5l1.0 -5.3M678.7 1046.8l1.1 -6.2M686.4 1046.1l0.8 -5.9M700.2 1045.9l0.5 -6.2M705.0 1047.4l0.4 -6.2M708.6 1046.5l0.3 -5.5M719.9 1048.0l0.0 -5.7M487.0 1050.9l3.7 -3.9M491.5 1051.8l3.8 -4.1M497.6 1052.6l3.7 -4.2M506.0 1050.0l3.8 -4.3M511.0 1051.1l3.5 -4.2M531.0 1052.6l3.5 -4.6M536.7 1052.3l3.7 -5.0M552.3 1050.3l3.2 -4.8M569.1 1051.2l3.1 -5.1M576.3 1050.0l3.0 -5.1M583.6 1050.9l3.0 -5.4M587.0 1052.4l2.5 -4.7M594.0 1052.3l2.5 -4.9M611.0 1052.5l2.5 -5.7M616.5 1052.3l2.2 -5.3M622.2 1052.3l2.1 -5.4M633.3 1049.7l1.9 -5.5M641.3 1052.7l1.8 -5.8M647.3 1051.0l1.8 -5.9M668.6 1052.2l1.2 -5.7M698.9 1052.3l0.5 -6.3M701.4 1050.9l0.4 -5.4M479.0 1054.5l4.1 -4.3M484.0 1054.8l3.7 -3.9M489.1 1056.1l4.3 -4.7M494.9 1055.1l3.7 -4.1M500.2 1054.2l4.1 -4.7M505.3 1053.8l3.5 -4.0M511.4 1055.3l3.9 -4.7M514.7 1054.6l3.4 -4.1M519.7 1055.4l3.7 -4.6M524.0 1055.5l3.2 -4.1M529.8 1055.0l3.8 -5.0M544.9 1055.8l3.2 -4.6M551.2 1054.8l3.2 -4.8M554.1 1054.1l3.1 -4.6M560.5 1056.8l2.9 -4.5M565.4 1054.7l3.1 -5.0M575.2 1055.9l2.9 -5.0M601.5 1055.0l2.3 -4.8M610.4 1055.8l2.2 -4.9M635.4 1053.9l1.9 -5.5M643.9 1056.4l1.7 -5.6M650.3 1056.9l1.5 -5.3M659.7 1054.7l1.4 -5.6M671.4 1054.4l1.1 -5.6M699.4 1056.0l0.5 -6.2M705.2 1055.5l0.3 -5.8M715.2 1054.9l0.1 -5.4M483.7 1059.0l4.3 -4.6M497.7 1060.9l4.0 -4.6M502.2 1058.2l4.1 -4.7M508.6 1059.8l3.6 -4.4M518.8 1060.9l3.4 -4.3M522.3 1060.6l3.4 -4.4M528.2 1060.1l3.8 -5.1M531.5 1059.3l3.2 -4.4M536.5 1061.0l3.2 -4.5M546.9 1060.8l3.4 -5.0M561.8 1058.9l2.8 -4.6M568.6 1058.6l2.7 -4.6M588.8 1059.9l2.7 -5.2M596.6 1058.9l2.5 -5.1M616.3 1060.9l2.1 -5.2M647.2 1060.3l1.6 -5.5M661.2 1059.7l1.2 -5.3M681.2 1059.4l1.0 -6.3M698.4 1059.2l0.5 -5.9M702.5 1059.4l0.4 -5.5M711.4 1060.8l0.2 -5.6M511.4 1064.1l3.6 -4.5M514.9 1063.8l3.4 -4.3M523.4 1063.5l3.7 -4.8M531.1 1064.5l3.6 -5.0M535.8 1064.9l3.5 -4.9M546.4 1063.2l3.2 -4.8M558.7 1065.3l2.8 -4.5M566.6 1064.3l3.0 -5.1M568.9 1065.4l2.7 -4.6M588.9 1063.0l2.6 -5.1M593.7 1064.9l2.6 -5.4M615.6 1062.7l2.4 -5.9M619.6 1063.4l2.0 -5.1M638.9 1063.1l1.8 -5.6M666.1 1063.3l1.1 -5.5M674.6 1064.1l1.0 -5.5M694.0 1063.7l0.5 -5.3M698.9 1065.1l0.5 -5.7M710.5 1065.0l0.2 -5.6M714.0 1064.7l0.1 -6.3M542.6 1068.8l3.5 -5.2M551.7 1068.9l2.9 -4.6M563.1 1069.6l3.2 -5.4M571.8 1069.7l3.0 -5.4M577.9 1068.3l2.7 -5.0M583.2 1068.0l2.4 -4.7M592.6 1069.2l2.7 -5.6M597.9 1068.8l2.4 -5.3M601.4 1068.1l2.2 -5.0M611.4 1069.3l2.0 -5.0M623.1 1069.2l2.2 -5.9M627.1 1069.2l2.0 -5.8M641.2 1068.9l1.7 -5.6M648.0 1069.9l1.6 -5.9M666.7 1068.5l1.1 -5.6M682.1 1068.8l0.9 -6.1M707.0 1066.9l0.3 -5.4M554.4 1072.2l3.2 -5.2M570.7 1071.7l2.7 -4.9M585.4 1071.0l2.5 -4.9M596.5 1073.6l2.3 -4.9M598.6 1072.2l2.6 -5.6M610.7 1073.6l2.3 -5.7M613.9 1072.9l2.0 -5.0M631.0 1071.9l1.9 -5.7M644.7 1072.5l1.6 -5.6M651.1 1072.2l1.4 -5.3M659.1 1072.5l1.2 -5.5M675.5 1072.4l0.9 -5.5M678.6 1071.5l0.8 -5.4M686.5 1073.2l0.7 -5.8M705.9 1073.9l0.3 -5.9M562.5 1077.7l2.9 -5.0M574.1 1077.0l2.5 -4.7M594.1 1077.9l2.3 -5.0M598.4 1078.3l2.1 -4.8M619.0 1077.2l1.8 -5.0M621.7 1077.4l1.9 -5.2M631.3 1078.2l1.6 -5.0M678.8 1077.5l0.9 -6.1M687.6 1076.1l0.7 -6.1M707.1 1078.1l0.3 -5.4M584.2 1080.7l2.5 -5.1M589.2 1079.6l2.6 -5.5M600.9 1080.7l2.2 -5.2M605.3 1079.9l2.2 -5.2M610.1 1082.3l2.3 -5.7M623.5 1080.2l1.9 -5.4M630.1 1081.8l1.9 -5.8M633.9 1081.9l1.8 -5.9M658.7 1079.9l1.4 -6.1M665.9 1081.3l1.0 -5.3M669.6 1081.5l1.0 -5.4M680.4 1081.2l0.9 -6.2M688.6 1080.3l0.6 -5.3M713.5 1080.1l0.1 -6.4M627.1 1085.8l1.9 -5.7M637.1 1086.1l1.6 -5.4M648.2 1085.6l1.3 -5.2M651.9 1085.5l1.3 -5.2M656.6 1085.8l1.1 -5.1M663.3 1086.3l1.0 -5.1M683.4 1085.3l0.8 -5.9M697.9 1085.9l0.5 -6.2M706.6 1086.5l0.3 -6.3M716.1 1086.8l0.1 -5.4M625.2 1090.7l1.7 -5.1M633.5 1089.7l1.7 -5.7M639.5 1089.1l1.6 -5.8M643.6 1088.8l1.4 -5.3M649.6 1089.2l1.3 -5.4M661.0 1090.8l1.1 -5.1M665.1 1088.8l1.1 -5.9M679.5 1089.5l0.7 -5.2M689.9 1090.5l0.6 -5.6M714.1 1091.2l0.1 -6.3M719.4 1089.9l0.0 -5.7M647.8 1093.5l1.3 -5.2M657.3 1092.7l1.3 -5.8M667.0 1094.8l1.0 -5.6M687.1 1093.3l0.7 -6.3M692.8 1094.2l0.5 -5.3M698.3 1094.7l0.4 -5.9M711.6 1093.2l0.2 -6.0M665.0 1098.0l1.1 -6.0M669.7 1097.6l1.0 -5.8M674.7 1098.5l0.9 -6.0M679.6 1097.6l0.8 -6.1M683.7 1099.7l0.7 -5.3M691.3 1098.3l0.6 -6.1M695.8 1099.4l0.5 -5.6M704.4 1098.6l0.3 -5.5M714.6 1099.1l0.1 -5.8M683.0 1102.4l0.7 -5.5M697.8 1103.4l0.5 -6.2M707.3 1102.3l0.2 -5.7M712.7 1101.3l0.1 -5.9M719.3 1107.7l0.0 -5.4"/><path id="dRED" d="M716.7 527.2l0.1 5.5M714.0 535.4l0.1 5.6M681.4 538.9l0.8 5.2M685.6 539.8l0.8 6.0M701.4 538.1l0.4 5.3M686.5 548.0l0.8 6.2M662.3 552.6l1.4 6.1M707.7 552.0l0.3 5.4M716.4 552.6l0.1 5.8M646.4 555.3l1.8 6.0M653.5 557.6l1.4 5.2M699.6 555.5l0.5 5.9M636.6 560.9l1.9 5.6M596.0 565.6l2.4 4.7M610.3 564.7l2.4 5.2M644.0 566.7l1.8 5.6M650.1 564.8l1.5 5.1M626.3 568.8l2.0 5.1M631.8 568.5l2.0 5.4M636.9 569.4l1.8 5.1M609.5 574.6l2.7 5.6M651.9 579.4l1.8 5.8M703.7 579.7l0.4 5.2M590.5 582.6l3.2 5.5M641.0 581.2l1.8 5.2M644.5 583.4l1.9 5.4M601.4 588.0l2.6 4.7M663.8 587.8l1.6 6.1M702.4 585.6l0.5 6.2M639.5 592.1l2.0 5.2M705.8 592.3l0.4 6.1M716.3 589.9l0.1 5.9M618.0 596.6l2.5 5.0M666.1 595.1l1.5 6.0M712.0 596.9l0.2 5.8M615.3 600.0l2.6 5.1M655.4 600.9l1.6 5.1M694.3 599.3l0.8 6.0M703.8 600.1l0.5 5.7M681.6 602.5l1.2 6.1M655.3 609.4l1.7 5.2M657.6 613.2l1.9 5.8M648.9 621.0l2.1 5.5M654.4 626.2l2.0 5.6M661.1 625.4l2.0 6.0M718.8 626.2l0.0 6.0M662.8 630.7l1.7 5.2M676.9 631.2l1.5 5.9M702.0 631.0l0.6 5.3M657.3 639.9l2.0 5.4M702.2 639.8l0.6 5.6M717.4 639.4l0.1 6.1M581.4 643.6l3.6 4.2M586.4 642.8l4.0 4.8M659.0 643.3l2.2 5.8M669.6 642.9l1.7 5.5M597.6 647.9l3.7 4.8M686.0 646.5l1.2 5.6M691.4 646.0l0.9 5.2M702.2 646.1l0.7 6.2M673.9 651.3l1.6 5.4M587.7 656.8l4.3 4.8M661.4 660.2l2.0 4.9M671.5 659.5l1.8 5.4M686.5 660.0l1.2 5.1M581.5 664.8l4.3 4.3M585.0 667.3l4.3 4.4M682.0 673.9l1.5 5.1M589.7 677.2l4.5 4.4M711.0 675.6l0.4 5.6M576.1 681.9l4.1 3.5M684.1 680.7l1.6 5.5M687.2 681.9l1.6 5.9M451.4 686.1l4.8 2.1M713.4 684.8l0.3 5.4M476.6 689.5l5.6 2.6M694.0 688.7l1.3 6.0M480.9 693.2l5.8 2.7M489.8 695.6l5.6 2.7M510.6 693.0l4.6 2.5M451.2 698.7l5.2 2.1M482.4 697.8l5.5 2.5M583.1 698.5l4.9 3.8M441.0 702.6l5.9 2.2M480.7 703.3l4.9 2.1M491.3 701.9l4.9 2.2M516.2 702.4l5.2 2.6M579.1 703.3l4.5 3.3M589.4 703.8l4.7 3.7M448.9 707.9l5.3 1.9M508.8 706.9l5.4 2.5M578.3 705.5l4.6 3.2M474.0 712.1l5.5 2.1M490.2 710.2l5.3 2.2M493.5 711.2l5.8 2.4M535.9 712.0l5.2 2.6M579.4 710.0l4.8 3.2M584.2 711.3l4.4 3.1M453.7 715.0l5.7 1.9M462.3 717.2l5.6 1.9M492.6 716.7l4.9 1.9M698.0 714.1l1.2 5.1M494.8 719.7l5.0 1.9M550.6 720.2l5.1 2.6M695.8 720.2l1.5 5.3M706.5 721.5l0.9 5.4M483.2 723.7l5.9 2.0M548.3 724.0l5.6 2.6M701.1 722.8l1.2 5.4M471.3 730.1l5.4 1.6M708.8 729.7l0.8 5.4M571.4 733.3l4.7 2.3M576.5 733.0l5.1 2.6M593.7 732.3l5.5 3.2M481.4 737.5l6.0 1.7M508.9 737.1l5.5 1.8M548.6 737.1l5.3 2.1M580.2 735.7l5.4 2.7M556.7 742.2l5.4 2.1M574.0 739.9l5.3 2.4M459.9 745.6l5.2 1.2M561.2 744.7l5.5 2.1M580.5 746.8l5.1 2.1M552.2 750.8l5.5 1.8M460.9 753.5l6.0 1.2M514.4 755.9l6.1 1.5M589.6 752.8l5.4 2.2M527.3 757.9l5.7 1.4M533.0 759.4l5.3 1.3M581.2 758.0l5.5 1.9M465.9 763.8l5.8 0.9M511.4 763.8l5.4 1.1M482.0 768.6l6.1 0.9M508.5 766.9l5.2 0.9M572.5 766.7l5.0 1.3M578.8 766.0l5.8 1.6M426.6 773.2l5.9 0.6M515.0 770.3l5.7 1.0M585.9 771.1l5.8 1.5M519.0 775.3l5.8 0.9M540.9 774.9l5.8 1.0M526.2 781.6l5.5 0.7M497.3 783.9l5.4 0.5M501.6 784.0l5.9 0.6M513.3 785.4l5.4 0.5M538.7 785.9l5.4 0.6M520.1 789.9l5.6 0.4M565.3 790.0l6.1 0.6M487.9 792.3l5.6 0.3M538.4 792.8l5.5 0.4M556.3 796.2l5.8 0.3M559.4 797.5l5.9 0.3M441.9 800.4l5.4 0.1M571.4 802.6l5.6 0.1M581.5 801.9l5.6 0.1M535.5 807.1l6.4 -0.1M576.4 806.4l5.8 -0.1M442.9 809.5l6.0 -0.1M451.1 811.1l5.3 -0.1M466.5 811.3l6.0 -0.1M516.3 809.2l6.3 -0.1M552.5 811.6l6.1 -0.2M561.4 811.7l5.6 -0.2M573.0 810.1l5.7 -0.2M484.5 814.4l6.2 -0.2M556.3 815.0l6.0 -0.4M561.2 817.9l5.6 -0.5M568.7 817.5l5.5 -0.5M569.5 822.6l6.0 -0.7M468.0 827.1l6.2 -0.5M582.1 825.9l6.0 -0.9M486.0 831.8l5.6 -0.6M488.7 832.8l5.6 -0.7M576.2 832.3l6.1 -1.2M530.7 841.2l5.5 -1.1M580.2 841.9l5.3 -1.4M540.9 846.1l5.8 -1.3M562.0 844.7l5.4 -1.4M577.9 846.2l5.2 -1.5M581.2 844.6l6.0 -1.7M668.9 845.5l4.7 -3.7M569.2 848.5l5.7 -1.6M683.8 854.5l3.7 -5.1M640.9 858.2l4.4 -3.0M649.6 858.8l5.1 -3.9M676.2 856.7l3.5 -4.2M678.9 856.5l3.6 -4.5M471.5 863.4l5.1 -1.2M576.2 863.4l5.8 -2.4M608.3 861.2l5.1 -2.6M653.2 862.7l4.7 -4.1M692.0 862.8l2.6 -5.3M576.0 867.3l5.5 -2.4M589.7 867.2l5.8 -2.8M593.7 866.2l5.6 -2.7M614.1 865.6l5.4 -3.1M641.3 866.1l4.6 -3.6M669.9 867.3l3.5 -4.4M685.0 866.1l2.6 -4.6M501.7 871.2l5.5 -1.7M666.4 869.8l3.4 -4.1M673.6 871.5l3.1 -4.5M596.5 875.8l5.1 -2.9M629.7 874.5l4.5 -3.5M665.6 874.6l3.9 -5.0M593.8 877.6l4.7 -2.7M609.5 883.7l4.8 -3.4M586.1 887.8l4.6 -2.8M682.7 886.4l2.2 -4.9M639.3 892.7l3.9 -4.2M585.9 895.9l5.2 -3.5M668.8 899.6l2.6 -4.8M695.2 899.9l1.4 -5.3M709.4 901.5l0.7 -6.3M583.9 904.5l4.6 -3.3M686.3 905.2l2.0 -5.8M590.3 907.9l4.7 -3.7M536.2 914.9l4.8 -2.9M582.2 913.0l4.1 -3.2M641.4 916.8l3.4 -4.9M693.7 917.7l1.2 -5.3M528.4 922.7l4.8 -3.0M508.8 927.1l4.6 -2.6M625.8 927.2l3.4 -4.4M494.0 931.5l5.2 -2.9M518.0 931.6l4.6 -2.9M592.1 931.9l4.5 -4.5M529.8 934.5l4.5 -3.0M586.2 935.4l4.0 -3.9M671.6 936.5l2.1 -5.7M695.3 934.4l1.2 -6.2M481.6 938.3l4.8 -2.7M496.6 938.6l5.2 -3.1M507.8 939.1l4.8 -3.0M517.1 940.7l5.3 -3.5M601.3 937.8l3.7 -4.1M470.8 943.3l5.0 -2.8M495.7 942.3l4.8 -2.9M589.7 944.2l4.3 -4.6M605.8 944.8l3.4 -4.2M636.5 943.2l3.0 -5.0M659.2 944.2l2.2 -5.0M684.3 945.1l1.5 -5.9M492.2 946.4l4.4 -2.7M641.1 947.7l2.8 -5.1M506.0 952.8l4.4 -3.0M625.9 952.3l3.0 -4.7M661.0 953.4l2.3 -5.9M536.4 954.9l4.1 -3.3M563.0 956.8l3.8 -3.7M459.5 961.3l5.1 -3.1M518.5 959.6l4.3 -3.3M695.0 962.2l0.8 -5.3M482.9 965.5l4.8 -3.3M498.1 965.4l4.6 -3.3M531.7 965.9l4.3 -3.7M621.1 964.7l3.2 -5.1M686.2 965.6l1.3 -6.1M713.6 966.1l0.2 -5.5M504.5 968.2l4.8 -3.6M530.3 970.4l4.1 -3.6M631.6 968.8l2.5 -4.6M481.0 973.4l4.4 -3.1M544.0 974.0l4.0 -3.9M547.9 975.0l3.9 -3.9M684.0 972.4l1.3 -6.0M459.4 977.0l4.7 -3.1M479.1 978.5l5.1 -3.7M521.1 979.4l4.3 -3.7M551.2 978.5l3.9 -4.0M679.9 978.3l1.4 -5.8M508.3 982.2l4.1 -3.4M521.1 981.2l4.0 -3.5M623.9 981.5l2.7 -5.0M661.4 983.6l1.9 -5.9M701.6 982.4l0.6 -5.6M456.6 986.4l5.0 -3.4M491.6 986.6l4.2 -3.3M696.6 987.3l0.8 -5.9M472.7 991.0l4.7 -3.5M598.2 990.7l3.3 -5.0M454.1 995.1l5.2 -3.7M608.9 995.3l2.7 -4.7M636.1 994.3l2.2 -4.9M639.9 994.9l2.4 -5.7M680.8 994.9l1.2 -5.6M463.6 1000.4l4.7 -3.6M467.6 1000.8l4.9 -3.8M486.5 1000.1l4.0 -3.3M518.5 999.1l4.3 -4.2M612.8 999.0l2.5 -4.6M474.6 1005.4l4.3 -3.5M569.9 1004.8l3.8 -5.1M658.8 1002.7l1.7 -5.5M720.5 1002.7l-0.0 -5.6M460.9 1007.8l4.9 -3.8M469.0 1007.6l4.4 -3.6M491.1 1009.2l4.3 -3.8M507.4 1006.9l4.3 -4.0M532.0 1009.5l4.1 -4.4M637.4 1007.4l2.2 -5.4M651.6 1008.6l1.7 -5.1M458.7 1013.8l4.8 -3.8M475.6 1012.8l4.2 -3.6M489.4 1011.7l4.4 -4.0M494.8 1012.8l4.2 -3.9M575.5 1011.1l3.3 -4.7M584.9 1012.5l3.3 -5.0M507.3 1017.5l4.3 -4.3M626.6 1018.0l2.5 -5.8M653.4 1017.0l1.6 -5.1M662.2 1017.9l1.6 -5.8M468.8 1021.3l4.3 -3.7M578.9 1020.3l3.3 -5.0M586.3 1022.5l3.3 -5.4M680.2 1019.4l1.2 -6.2M456.9 1026.0l4.1 -3.4M462.8 1023.8l4.3 -3.6M468.6 1025.9l4.3 -3.8M477.7 1026.2l4.5 -4.1M513.7 1024.2l4.0 -4.2M566.5 1024.0l3.4 -4.9M581.7 1025.5l3.1 -4.9M598.6 1026.4l2.9 -5.4M608.3 1024.9l2.6 -5.1M641.3 1025.6l1.9 -5.4M663.1 1023.8l1.5 -5.8M563.5 1029.7l3.0 -4.3M596.2 1029.3l3.1 -5.5M608.5 1030.0l2.3 -4.7M634.1 1030.5l2.1 -5.5M713.6 1029.9l0.2 -5.4M467.6 1033.7l4.6 -4.1M506.4 1034.9l3.6 -3.9M583.0 1035.2l2.9 -4.9M682.1 1034.4l1.0 -5.8M707.8 1034.1l0.3 -6.4M718.1 1034.5l0.0 -5.4M475.6 1038.4l3.8 -3.6M505.7 1038.1l3.9 -4.2M538.4 1036.7l3.5 -4.5M600.2 1036.9l2.5 -4.8M623.4 1038.1l2.2 -5.3M700.4 1037.8l0.5 -6.2M483.9 1042.2l4.0 -4.0M580.9 1041.7l2.8 -4.8M598.1 1040.9l2.7 -5.2M613.9 1043.6l2.2 -4.9M494.6 1047.1l3.6 -3.9M514.3 1046.0l3.6 -4.2M713.6 1048.0l0.1 -5.6M467.9 1052.5l4.3 -4.2M476.6 1051.1l4.1 -4.2M542.8 1051.5l3.5 -4.9M573.6 1050.9l2.9 -4.9M673.3 1050.1l1.2 -6.2M686.7 1050.9l0.8 -6.1M622.1 1061.1l2.0 -5.3M605.7 1063.3l2.5 -5.6M624.2 1064.7l1.8 -4.9M637.4 1069.2l1.9 -6.0M663.7 1069.7l1.1 -5.3M672.4 1067.9l1.1 -6.1M688.9 1068.5l0.7 -6.3M576.5 1071.8l2.7 -5.0M581.6 1071.7l2.5 -4.8M638.6 1073.7l1.8 -5.8M699.0 1072.8l0.4 -5.3M567.0 1075.4l3.0 -5.2M603.2 1077.1l2.2 -5.0M606.0 1076.7l2.3 -5.6M646.4 1077.0l1.5 -5.5M621.0 1081.6l1.8 -5.0M621.1 1086.2l1.8 -5.2M631.9 1085.3l1.8 -5.7M674.7 1090.6l0.9 -6.0M637.2 1093.7l1.5 -5.2M643.1 1094.6l1.5 -5.5M718.7 1098.9l0.0 -6.1M686.9 1104.0l0.7 -6.3M692.1 1104.0l0.6 -6.2M711.0 1106.4l0.2 -5.9"/><path id="dGRN" d="M706.6 530.4l0.3 6.1M702.7 534.7l0.4 5.7M709.3 538.1l0.2 6.1M634.1 556.5l1.8 5.2M612.5 560.2l2.3 5.3M646.8 562.5l1.8 5.9M711.9 562.0l0.2 6.3M600.9 564.6l2.5 5.0M659.2 563.7l1.4 5.4M665.7 563.9l1.4 6.1M617.0 570.5l2.5 5.6M666.5 569.9l1.4 6.2M673.4 570.6l1.1 5.5M704.0 568.2l0.4 5.7M669.1 575.1l1.1 5.1M626.6 578.9l2.0 4.8M698.7 577.7l0.6 6.2M663.5 581.4l1.3 5.1M686.0 586.7l0.9 5.9M692.7 586.2l0.7 5.9M707.5 586.8l0.3 5.8M605.9 590.2l2.6 4.8M648.8 591.6l2.0 5.9M665.0 592.6l1.6 6.0M626.1 602.5l2.4 5.1M670.9 618.0l1.4 5.4M673.7 616.2l1.5 6.0M641.4 625.8l2.3 5.2M683.6 631.2l1.3 6.0M586.3 632.7l3.5 4.6M699.7 634.5l0.7 5.8M590.6 642.5l3.6 4.5M673.3 672.2l2.1 6.0M472.0 681.6l5.6 2.8M469.2 686.5l5.0 2.3M685.6 694.5l1.6 5.2M585.0 702.9l4.3 3.3M512.6 707.6l5.3 2.5M574.0 706.1l5.1 3.4M718.7 708.3l0.1 6.2M538.1 725.6l5.7 2.5M483.7 733.8l5.5 1.7M487.4 734.3l5.4 1.6M582.6 732.1l4.7 2.5M491.6 741.1l5.4 1.5M478.7 745.1l5.4 1.3M500.1 745.3l5.6 1.5M554.9 746.5l5.9 2.1M423.1 749.7l5.5 1.0M492.7 750.9l5.1 1.2M502.8 749.0l5.8 1.5M592.1 750.3l5.1 2.2M585.7 762.9l5.2 1.6M589.9 763.4l5.5 1.8M441.3 772.2l6.2 0.7M523.7 770.5l5.7 1.0M543.6 772.3l5.7 1.1M461.8 776.7l6.0 0.7M535.2 780.2l6.2 0.8M570.4 780.8l5.7 0.9M466.6 783.7l5.4 0.5M518.1 784.1l5.3 0.5M528.6 783.7l6.2 0.7M461.0 787.4l5.3 0.4M541.1 787.7l5.8 0.6M545.0 790.4l5.7 0.5M456.9 793.7l6.0 0.3M523.8 792.5l5.7 0.4M551.4 793.0l5.6 0.4M453.9 797.5l6.3 0.2M549.5 805.2l6.0 -0.0M580.1 807.0l5.8 -0.1M460.9 809.2l5.7 -0.1M538.7 810.6l6.1 -0.2M587.1 818.8l5.5 -0.6M431.3 823.9l5.6 -0.4M459.9 821.9l6.1 -0.4M566.1 823.0l5.5 -0.6M487.6 826.8l6.0 -0.6M563.0 826.9l5.8 -0.8M577.0 828.8l6.3 -1.0M548.3 844.5l6.1 -1.4M566.7 844.0l5.2 -1.3M706.2 845.9l2.0 -5.8M562.8 853.4l5.4 -1.7M520.8 857.0l5.2 -1.4M625.8 857.0l5.3 -2.9M553.1 861.4l5.7 -1.9M673.5 861.0l3.6 -4.4M691.3 867.7l2.2 -4.9M480.0 873.5l5.1 -1.4M525.5 875.7l5.4 -1.9M531.1 875.6l6.0 -2.2M633.6 874.0l4.3 -3.4M659.3 873.6l3.7 -4.2M583.1 877.8l5.1 -2.7M627.6 880.7l4.4 -3.6M486.1 882.2l5.9 -2.0M681.5 882.9l2.6 -5.3M501.0 895.6l5.6 -2.3M651.3 895.4l3.6 -4.8M687.2 895.9l1.8 -5.1M540.0 908.0l5.4 -3.1M545.4 909.3l5.3 -3.2M521.5 918.3l4.8 -2.7M556.3 917.2l5.1 -3.5M538.8 923.3l5.3 -3.5M523.5 927.1l5.0 -3.1M528.6 925.0l5.4 -3.4M529.0 930.0l4.5 -2.9M610.5 935.5l3.7 -4.4M511.6 939.2l5.0 -3.2M529.1 940.8l5.0 -3.6M688.8 939.3l1.3 -5.7M510.5 943.5l5.1 -3.4M518.5 943.6l5.1 -3.5M551.3 943.4l4.5 -3.7M497.5 949.2l4.9 -3.2M631.6 947.3l3.0 -4.8M668.3 946.3l2.0 -5.4M463.6 951.4l4.9 -2.8M673.4 966.5l1.7 -5.9M483.5 970.6l5.1 -3.6M554.4 968.7l3.7 -3.7M705.5 969.2l0.5 -5.7M452.6 972.4l5.1 -3.2M487.2 972.1l4.7 -3.4M572.8 973.1l3.8 -4.3M585.9 972.8l3.9 -4.9M626.3 977.4l2.5 -4.6M670.1 978.5l1.7 -5.8M611.8 982.3l3.1 -5.0M643.7 981.1l2.2 -5.1M648.9 983.2l2.3 -5.7M499.3 986.7l4.2 -3.5M535.9 987.2l3.9 -3.8M615.3 985.0l3.0 -5.2M656.5 988.2l1.8 -5.2M462.2 989.9l4.5 -3.2M511.1 995.8l4.2 -3.8M643.6 993.8l2.1 -5.2M478.1 998.9l4.8 -3.8M521.9 998.6l4.1 -4.0M531.1 1000.8l3.9 -4.0M561.8 1000.7l3.9 -4.8M626.3 998.5l2.7 -5.6M631.2 998.6l2.6 -5.6M471.2 1004.5l4.2 -3.4M520.5 1003.9l3.7 -3.7M545.5 1004.0l4.1 -4.7M594.7 1002.5l3.0 -4.7M700.0 1002.9l0.6 -5.9M498.7 1009.2l4.4 -4.0M516.8 1007.8l4.5 -4.5M571.3 1009.1l3.7 -5.1M696.9 1009.1l0.6 -5.4M479.1 1013.4l4.2 -3.6M510.2 1013.9l4.4 -4.4M555.7 1011.9l3.4 -4.3M603.4 1012.7l2.6 -4.6M629.9 1012.9l2.4 -5.5M571.6 1017.7l3.1 -4.4M592.0 1017.3l2.7 -4.6M681.3 1017.0l1.1 -6.0M609.6 1020.5l2.4 -4.7M619.5 1019.6l2.7 -5.7M654.0 1020.9l1.6 -5.1M508.4 1026.5l4.2 -4.4M518.1 1026.6l3.7 -4.0M603.2 1025.2l2.6 -5.0M683.5 1026.7l0.9 -5.6M511.0 1030.0l3.9 -4.2M646.1 1030.4l2.0 -6.0M483.8 1034.9l4.4 -4.3M597.0 1032.9l2.7 -5.1M658.8 1034.3l1.4 -5.4M702.9 1032.3l0.4 -5.9M458.9 1039.5l4.6 -4.2M533.6 1039.7l3.5 -4.4M550.1 1038.8l3.6 -4.9M640.8 1037.2l2.0 -6.0M644.8 1038.1l2.0 -6.1M526.9 1041.0l3.7 -4.5M551.1 1042.8l3.3 -4.6M566.6 1042.9l2.9 -4.4M627.2 1041.5l2.0 -5.1M676.5 1041.9l1.1 -5.7M534.9 1046.3l3.5 -4.6M604.4 1048.3l2.5 -5.2M503.2 1050.2l4.1 -4.6M527.8 1052.0l3.3 -4.3M546.0 1052.5l3.0 -4.3M607.6 1051.1l2.5 -5.4M708.7 1055.8l0.3 -6.2M511.7 1059.1l3.4 -4.2M573.3 1059.8l2.8 -4.8M641.1 1059.7l1.8 -5.8M544.9 1071.1l3.2 -4.9M690.0 1073.3l0.6 -5.4M710.1 1072.0l0.2 -5.4M613.9 1077.8l2.2 -5.6M666.4 1077.0l1.1 -5.7M697.4 1075.5l0.5 -6.3M712.9 1076.7l0.2 -5.9M639.0 1081.6l1.8 -6.1M705.9 1082.7l0.3 -5.9M693.1 1084.1l0.6 -6.2M613.5 1088.7l2.1 -5.6M655.7 1089.7l1.3 -5.7M669.4 1088.7l1.1 -5.9M686.5 1091.3l0.7 -5.7M705.8 1088.6l0.3 -5.8M662.7 1094.2l1.1 -5.3M701.4 1094.1l0.4 -5.9M717.6 1094.7l0.0 -6.0"/><path id="dBLU" d="M472.7 1044.5l4.3 -4.2M479.5 1043.1l4.4 -4.3M482.9 1046.4l4.3 -4.4M489.3 1044.8l3.5 -3.7M492.2 1054.0l3.2 -3.5M497.8 1048.8l3.3 -3.6M497.7 1055.0l3.6 -4.1M502.2 1054.4l3.1 -3.5M506.1 1058.1l4.0 -4.7M512.7 1057.0l3.3 -4.0M517.3 1053.1l3.8 -4.7M519.6 1054.4l3.1 -3.8M522.8 1053.7l3.8 -4.8M529.4 1063.9l2.9 -3.9M535.7 1063.2l2.7 -3.8M539.0 1063.9l3.3 -4.8M540.2 1066.3l3.1 -4.5M547.5 1069.0l2.7 -4.1M549.5 1064.8l3.1 -4.7M555.0 1066.7l2.6 -4.2M560.2 1060.3l3.0 -4.7M559.4 1067.5l3.3 -5.4M566.6 1064.9l3.1 -5.3M570.4 1065.7l3.1 -5.4M573.1 1071.9l3.0 -5.4M578.2 1076.4l2.7 -5.1M584.3 1071.6l2.8 -5.5M588.3 1071.2l2.9 -5.8M590.5 1070.3l2.7 -5.5M594.5 1071.0l2.4 -5.0M597.3 1074.2l2.1 -4.6M604.9 1074.2l2.3 -5.3M604.3 1079.8l2.1 -5.1M610.0 1079.7l2.4 -5.9M613.2 1081.1l1.7 -4.3M617.0 1075.5l2.1 -5.6M625.2 1079.1l1.7 -4.9M629.6 1078.2l1.7 -5.2M632.6 1079.4l1.9 -6.1M635.9 1088.3l1.3 -4.5M642.4 1079.9l1.6 -5.7M643.7 1089.9l1.5 -5.7M650.4 1093.1l1.2 -5.1M653.5 1085.1l1.1 -4.5M660.1 1086.7l1.0 -4.9M659.8 1086.2l1.0 -4.8M662.9 1086.8l1.1 -5.6M667.3 1087.8l1.1 -6.1M674.5 1098.3l0.9 -5.6M677.5 1094.6l0.9 -5.9M680.2 1092.4l0.8 -5.7M685.3 1091.4l0.6 -5.4M690.4 1093.3l0.5 -4.5M695.2 1094.1l0.5 -6.1M701.3 1100.9l0.3 -4.6M704.7 1103.7l0.2 -4.7M709.5 1100.7l0.2 -4.8M712.8 1103.1l0.2 -6.4M717.9 1096.6l0.0 -6.0M694.5 854.3l2.1 -4.1M690.0 859.6l2.4 -4.4M685.1 852.5l2.8 -3.8M679.7 858.9l3.0 -4.1M675.3 861.4l3.5 -4.5M671.6 855.0l3.5 -3.6M667.9 859.6l4.4 -4.6M663.2 860.1l3.6 -3.5M657.4 856.0l4.6 -3.7M650.6 864.1l4.4 -3.7M646.3 861.5l3.8 -2.9M643.3 863.3l4.0 -3.0M639.9 867.4l5.0 -3.9M635.0 864.1l4.3 -3.0M629.2 863.6l5.2 -3.3M626.1 871.0l4.8 -3.4M622.7 870.9l4.5 -3.0M616.0 873.3l5.3 -3.5M614.2 872.3l4.6 -2.9M608.4 872.7l5.5 -3.3M602.4 879.1l4.6 -2.9M602.4 881.5l5.3 -3.4M594.6 879.7l4.8 -2.8M592.9 886.4l4.7 -3.0M588.8 889.0l4.1 -2.6M583.8 891.9l4.3 -2.8M582.2 891.7l4.7 -3.0M576.7 892.8l4.5 -2.7M572.9 895.9l4.6 -2.8M571.1 899.8l4.7 -3.0M567.7 902.9l5.1 -3.3M563.2 907.2l4.0 -2.6M559.1 910.6l5.2 -3.4M557.1 908.8l4.0 -2.5M553.7 909.4l4.3 -2.7M548.5 914.4l5.2 -3.3M544.6 914.3l4.1 -2.6M539.8 919.1l3.9 -2.5M537.7 925.8l4.8 -3.2M534.4 923.6l5.3 -3.4M530.0 930.6l4.4 -2.9M524.4 926.5l4.7 -2.9M521.7 929.2l3.9 -2.4M514.3 937.7l4.7 -3.1M511.1 935.8l4.9 -3.0M509.8 938.5l5.2 -3.3M505.2 942.5l4.4 -2.8M498.3 942.1l4.2 -2.6M494.0 944.9l4.1 -2.6M492.8 946.7l4.7 -2.9M488.9 944.6l4.0 -2.4M482.3 950.0l5.4 -3.3M476.9 951.2l4.4 -2.7M473.6 956.5l4.0 -2.5M469.3 959.8l4.4 -2.7M467.6 956.7l4.3 -2.6M587.6 576.2l2.4 4.1M591.1 572.6l2.3 4.1M594.2 570.5l2.5 4.7M595.1 569.8l2.5 4.8M599.2 561.6l2.1 4.3M601.7 558.5l2.1 4.3M606.0 563.5l2.6 5.5M607.7 559.9l2.1 4.6M614.6 562.2l2.5 5.7M618.4 553.6l2.0 4.9M621.7 552.7l2.3 5.9M625.8 559.3l2.1 5.5M628.8 558.1l1.9 5.1M633.2 558.2l1.8 5.0M638.4 557.0l1.9 5.7M641.7 548.4l1.5 4.8M647.0 553.2l1.7 6.0M651.3 552.8l1.7 6.1M656.1 551.9l1.1 4.4M659.8 547.5l1.3 5.4M663.8 549.5l1.0 4.5M666.2 545.3l1.2 5.9M672.8 541.1l0.9 4.8M675.8 539.8l1.0 6.2M677.0 541.4l1.0 6.3M681.4 538.5l0.8 5.8M684.6 545.4l0.8 5.7M691.7 543.5l0.5 4.6M693.4 540.8l0.6 5.6M701.0 533.0l0.3 4.7M702.1 535.7l0.4 6.5M703.2 530.3l0.3 5.6M709.5 523.7l0.2 5.8M715.5 526.2l0.1 4.9M716.1 522.1l0.1 6.2"/>
<filter id="jit" x="-5%" y="-5%" width="110%" height="110%"><feTurbulence type="turbulence" baseFrequency="0.09" numOctaves="2" seed="3" result="n"/><feDisplacementMap in="SourceGraphic" in2="n" scale="3.5" xChannelSelector="R" yChannelSelector="G"/></filter>
<filter id="b1" x="-20%" y="-20%" width="140%" height="140%"><feGaussianBlur stdDeviation="1.1"/></filter>
<filter id="b2" x="-30%" y="-30%" width="160%" height="160%"><feGaussianBlur stdDeviation="2.2"/></filter>
<filter id="b4" x="-50%" y="-50%" width="200%" height="200%"><feGaussianBlur stdDeviation="4"/></filter>
<filter id="b8" x="-50%" y="-50%" width="200%" height="200%"><feGaussianBlur stdDeviation="9"/></filter>
<filter id="b20" x="-80%" y="-80%" width="260%" height="260%"><feGaussianBlur stdDeviation="22"/></filter>



<g id="h0">
 <g fill="none" stroke-width="1.8">
  <use href="#dRGB" stroke="#ff2a2a" stroke-dasharray="2.4 60"/>
  <use href="#dRGB" stroke="#3a50ff" stroke-dasharray="0 3.6 2.6 60"/>
  <use href="#dRGB" stroke="#90ff40" stroke-dasharray="0 1.5 2.9 60"/>
  <use href="#dRED" stroke="#ff2626"/>
  <use href="#dGRN" stroke="#74f034"/>
  <use href="#dBLU" stroke="#3a4cff" stroke-width="2"/>
  <use href="#dBLU" stroke="#7ae0ff" stroke-width="1.4" stroke-dasharray="0 2 2.5 60"/>
 </g>
 <g fill="none" stroke-linecap="round" filter="url(#jit)">
  <path d="M588,576 C592,562 610,556 650,550 C680,546 700,540 708,532 C714,526 718,521 721,518" stroke="#2f5cff" stroke-width="2.2" opacity="0.75" filter="url(#b1)"/>
  <path d="M594,566 C612,557 640,552 672,548" stroke="#7ff" stroke-width="2" filter="url(#b1)" opacity="0.8"/>
  <path d="M590,660 C588,720 582,790 574,860" stroke="#58d0ff" stroke-width="1.8" opacity="0.6" filter="url(#b1)"/>
  <path d="M466,716 C480,736 500,758 520,785 C536,805 550,816 562,822" stroke="#d0ffff" stroke-width="5.5" filter="url(#b1)"/>
  <path d="M462,708 C476,728 496,750 516,778" stroke="#3a6cff" stroke-width="2.5" filter="url(#b1)" opacity="0.8"/>
  <path d="M480,688 C510,696 536,715 552,742" stroke="#ff2a2a" stroke-width="3.2" opacity="0.85" filter="url(#b1)"/>
  <path d="M490,893 C505,898 525,895 542,890" stroke="#b8ff60" stroke-width="3" opacity="0.45" filter="url(#b1)"/>
  <path d="M697,853 C649,859 597,878 565,905 C540,922 500,945 463,962" stroke="#3050ff" stroke-width="2.5" filter="url(#b1)"/>
  <path d="M628,890 C650,887 670,890 690,900" stroke="#38b8ff" stroke-width="2.2" filter="url(#b1)"/>
  <path d="M607,946 C630,950 655,950 688,940" stroke="#6ae8ff" stroke-width="3" filter="url(#b1)"/>
  <path d="M600,908 C612,897 625,892 640,888" stroke="#ff3030" stroke-width="3" opacity="0.7" filter="url(#b1)"/>
  <path d="M468,968 C490,972 520,966 560,962 C600,962 650,956 691,949" stroke="#c8ffff" stroke-width="7" filter="url(#b2)"/>
  <path d="M470,960 C490,955 520,950 545,955" stroke="#e8ffff" stroke-width="10" opacity="0.8" filter="url(#b2)"/>
  <path d="M528,960 C535,952 545,950 552,955" stroke="#fff" stroke-width="11" filter="url(#b2)"/>
  <path d="M472,930 C495,925 520,930 545,950" stroke="#ff3a20" stroke-width="5" opacity="0.7" filter="url(#b2)"/>
  <path d="M468,1000 C470,1020 473,1035 476,1047" stroke="#ff2a2a" stroke-width="3" opacity="0.6" filter="url(#b1)"/>
  <path d="M565,1068 C628,1082 670,1092 720,1100" stroke="#2a40ff" stroke-width="2" opacity="0.45" filter="url(#b1)"/>
  <path d="M660,1032 C664,1045 668,1055 676,1062" stroke="#8ff" stroke-width="4" filter="url(#b1)"/>
  <path d="M672,1010 C675,1022 676,1030 678,1038" stroke="#ff3050" stroke-width="3" opacity="0.7" filter="url(#b1)"/>
 </g>
 <path d="M585,580 C585,610 586,650 590,670 C598,680 612,686 633,697 C645,705 656,730 664,754 L671,780 L699,778 C693,750 688,735 685,722 C682,705 680,695 677,689 C668,678 660,670 655,665 C645,655 640,645 633,638 C622,622 610,605 600,590 Z" fill="url(#mesh)" opacity="0.9"/>
 <path d="M585,580 C585,610 586,650 590,670 C598,680 612,686 633,697 C645,705 656,730 664,754 L671,780 L699,778 C693,750 688,735 685,722 C682,705 680,695 677,689 C668,678 660,670 655,665 C645,655 640,645 633,638 C622,622 610,605 600,590 Z" fill="url(#mesh2)"/>
 <path d="M585,580 C585,610 586,650 590,670 C598,680 612,686 633,697 C645,705 656,730 664,754 L671,780 L699,778 C693,750 688,735 685,722 C682,705 680,695 677,689 C668,678 660,670 655,665 C645,655 640,645 633,638 C622,622 610,605 600,590 Z" fill="#fff0f8" opacity="0.22"/>
 <path d="M596,660 C600,675 606,690 616,700" stroke="#ff3a6a" stroke-width="3" fill="none" opacity="0.7" filter="url(#b1)"/>
 <path d="M655,565 C660,580 664,595 668,610" stroke="#6ff" stroke-width="2.5" fill="none" opacity="0.8" filter="url(#b1)"/>
 <path d="M690,680 C700,676 712,671 720,668" stroke="#ffd8f0" stroke-width="2.5" fill="none" opacity="0.9" filter="url(#b1)"/>
 <path d="M697,690 C705,700 712,712 720,724" stroke="#3a60ff" stroke-width="2" fill="none" opacity="0.8" filter="url(#b1)"/>
 <path d="M587,582 C587,612 588,650 591,668" stroke="#e8ffff" stroke-width="6" fill="none" filter="url(#b1)"/>
 <path d="M592,673 C602,682 615,688 633,699 C648,709 656,730 664,756" stroke="#ff3a6a" stroke-width="2.5" fill="none" opacity="0.75" filter="url(#b1)"/>
 <path d="M588,660 C596,668 606,675 620,680" stroke="#ffe040" stroke-width="3" fill="none" opacity="0.6" filter="url(#b1)"/>
 <path d="M601,592 C615,612 625,628 633,638 C650,660 670,680 677,690 C682,702 690,735 698,778" stroke="#a8f8ff" stroke-width="3" fill="none" filter="url(#b1)"/>
 <path d="M585,585 C584,620 586,660 581,700 C577,740 572,790 569,838" stroke="#46b0ff" stroke-width="1.8" opacity="0.7" fill="none" filter="url(#b1)"/>
</g>
<g id="h1"><use href="#h0"/></g>
<g id="fl1">
 <use href="#h1"/>
 <use href="#h1" transform="translate(1440,0) scale(-1,1)"/>
 <path d="M720,861 C727,895 740,935 740,957 C740,985 728,1005 720,1020 C712,1005 700,985 700,957 C700,935 713,895 720,861 Z" fill="url(#meshD)" opacity="0.9"/>
 <path d="M720,861 C727,895 740,935 740,957 C740,985 728,1005 720,1020 C712,1005 700,985 700,957 C700,935 713,895 720,861 Z" fill="url(#meshD2)"/>
 <path d="M720,742 L707,770 L733,770 Z" fill="#7ad8ff" filter="url(#b1)"/>
 <path d="M720.0,738.2 L724.2,741.9 L727.7,747.3 L731.4,748.7 L734.9,750.2 L737.3,755.1 L740.2,757.3 L745.8,754.0 L751.6,751.7 L754.9,754.5 L757.9,757.6 L762.3,759.1 L764.3,763.3 L762.1,770.7 L761.4,776.1 L765.1,778.1 L768.4,780.7 L769.3,784.7 L773.0,787.5 L779.6,790.1 L781.8,794.3 L778.3,799.4 L775.9,803.9 L776.0,808.1 L773.1,812.0 L768.5,815.2 L769.0,819.1 L773.5,824.6 L774.5,829.6 L772.3,833.3 L771.9,838.1 L771.4,843.2 L766.1,844.6 L758.9,843.6 L755.5,845.4 L754.1,849.6 L750.9,851.6 L747.7,853.5 L746.8,859.9 L745.3,866.9 L741.0,867.8 L735.9,865.6 L731.9,866.1 L727.9,866.1 L723.6,861.6 L720.0,858.2 L716.4,861.6 L712.1,866.1 L708.1,866.1 L704.1,865.6 L699.0,867.8 L694.7,866.9 L693.2,859.9 L692.3,853.5 L689.1,851.6 L685.9,849.6 L684.5,845.4 L681.1,843.6 L673.9,844.6 L668.6,843.2 L668.1,838.1 L667.7,833.3 L665.5,829.6 L666.5,824.6 L671.0,819.1 L671.5,815.2 L666.9,812.0 L664.0,808.1 L664.1,803.9 L661.7,799.4 L658.2,794.3 L660.4,790.1 L667.0,787.5 L670.7,784.7 L671.6,780.7 L674.9,778.1 L678.6,776.1 L677.9,770.7 L675.7,763.3 L677.7,759.1 L682.1,757.6 L685.1,754.5 L688.4,751.7 L694.2,754.0 L699.8,757.3 L702.7,755.1 L705.1,750.2 L708.6,748.7 L712.3,747.3 L715.8,741.9Z" fill="#3fe8ff" filter="url(#b1)"/>
 <path d="M720.0,740.2 L723.9,744.4 L727.1,749.8 L730.6,750.6 L734.1,751.3 L736.6,755.0 L739.7,756.6 L745.1,753.4 L750.5,751.7 L753.1,755.1 L755.4,758.8 L759.1,760.7 L760.9,764.7 L759.1,771.6 L759.1,776.2 L763.3,777.6 L767.0,779.9 L768.0,783.8 L771.1,786.8 L776.6,789.6 L777.8,793.9 L773.8,798.8 L771.5,803.0 L772.0,807.0 L770.1,810.8 L766.6,814.0 L767.7,818.0 L772.0,823.5 L772.5,828.2 L769.6,831.5 L768.5,835.6 L767.6,840.1 L762.5,841.4 L756.1,840.6 L753.5,842.9 L752.7,847.7 L750.0,850.3 L747.0,852.2 L745.8,858.1 L744.0,864.1 L739.6,864.0 L734.7,861.2 L731.0,861.6 L727.3,862.1 L723.4,858.6 L720.0,856.2 L716.5,860.2 L712.3,864.7 L708.5,864.1 L704.9,862.8 L700.4,864.0 L696.6,862.6 L695.3,855.8 L694.3,850.0 L690.8,848.9 L687.3,847.7 L685.5,844.1 L682.1,842.3 L675.6,843.0 L671.2,841.0 L671.5,835.6 L671.7,830.8 L669.7,827.2 L670.3,822.7 L673.7,817.6 L673.4,814.0 L668.4,810.9 L665.6,807.1 L666.1,802.9 L664.7,798.6 L662.2,793.9 L664.8,790.0 L671.2,787.6 L674.2,784.8 L674.4,780.6 L676.7,777.6 L679.7,775.3 L679.0,770.0 L677.4,763.0 L679.8,759.5 L684.6,758.8 L687.7,756.4 L690.8,753.9 L696.0,755.7 L700.9,758.1 L703.4,755.0 L705.5,749.7 L708.9,748.1 L712.6,747.2 L716.0,742.8Z" fill="#fff"/>
 <circle cx="697" cy="764" r="5" fill="#ff40ff" opacity="0.8" filter="url(#b1)"/>
 <circle cx="743" cy="764" r="5" fill="#ff40ff" opacity="0.8" filter="url(#b1)"/>
 <circle cx="676" cy="842" r="4" fill="#ffff40" opacity="0.8" filter="url(#b1)"/>
 <circle cx="764" cy="842" r="4" fill="#ffff40" opacity="0.8" filter="url(#b1)"/>
 <circle cx="720" cy="862" r="4" fill="#ffff40" opacity="0.9" filter="url(#b1)"/>
</g>
<g id="fl2">
 <g filter="url(#b20)" fill="none" stroke-linecap="round">
  <path d="M590,590 C590,625 600,640 622,660 C645,700 665,740 690,790" stroke="#2a50ff" stroke-width="46" opacity="0.8"/>
  <path d="M850,590 C850,625 840,640 818,660 C795,700 775,740 750,790" stroke="#2a50ff" stroke-width="46" opacity="0.8"/>
  <path d="M592,572 C610,556 680,548 720,528 C760,548 830,556 848,572" stroke="#2a48ff" stroke-width="24" opacity="0.55"/>
 </g>
 <path d="M660,700 L720,690 L780,700 L760,850 L680,850 Z" fill="#2a4cff" opacity="0.75" filter="url(#b20)"/>
 <ellipse cx="720" cy="812" rx="62" ry="80" fill="#5dff5a" opacity="0.75" filter="url(#b20)"/>
 <use href="#fl1"/>
 <path d="M585,580 C585,610 586,650 590,670 C598,680 612,686 633,697 C645,705 656,730 664,754 L671,780 L699,778 C693,750 688,735 685,722 C682,705 680,695 677,689 C668,678 660,670 655,665 C645,655 640,645 633,638 C622,622 610,605 600,590 Z" fill="#fff" opacity="0.62"/>
 <path d="M855.0 580C855.0 610 854.0 650 850.0 670C842.0 680 828.0 686 807.0 697C795.0 705 784.0 730 776.0 754L769.0 780L741.0 778C747.0 750 752.0 735 755.0 722C758.0 705 760.0 695 763.0 689C772.0 678 780.0 670 785.0 665C795.0 655 800.0 645 807.0 638C818.0 622 830.0 605 840.0 590Z" fill="#fff" opacity="0.62"/>
 <g filter="url(#b4)" fill="none" opacity="0.6">
  <path d="M586,580 C586,620 600,645 625,670" stroke="#7cf" stroke-width="8"/>
  <path d="M854,580 C854,620 840,645 815,670" stroke="#7cf" stroke-width="8"/>
 </g>
 <ellipse cx="720" cy="810" rx="58" ry="62" fill="#fff" opacity="0.5" filter="url(#b8)"/>
</g>
</defs><use href="#fl1"/><use href="#fl2" transform="translate(1440,0)"/></svg>
<svg class="a" style="left:0;top:0" width="2880" height="1704"><g fill="none" stroke="#7b72c4" stroke-width="1.4">
<path d="M456,752 C492,752 494,652 532,652"/>
<path d="M456,752 C600,757 800,770 971,775"/>
<path d="M636,651 H672"/>
<path d="M776,651 H832"/>
<path d="M935,652 C962,654 948,769 971,769"/>
<path d="M1075,771 C1104,770 1098,716.6 1131,716.6"/>
<path d="M1258,715.5 C1285,715.5 1280,712 1310,712"/>
<path d="M1414,711.6 H1450"/>
<path d="M1553,711.6 C1586,711.6 1574,667.8 1609,667.8"/>
<path d="M1737,676 C1756,676 1749,691.7 1769,691.7"/>
</g>
<path d="M0,791 C22,788 32,777 54,776.5" fill="none" stroke="#5a86d6" stroke-width="1.6"/>
<g fill="none" stroke="#8a90a8" stroke-width="1.1">
<path d="M747,710 L971,769"/>
<path d="M133,660.8 L240,743.9"/>
<path d="M272.8,660.8 L268,729"/>
<path d="M108.5,886 L112.5,812"/>
</g>
<g fill="#5c6372">
<polygon points="840,731 859,728 852,747"/>
<polygon points="183,704 203,708 197,725"/>
<polygon points="261,702 280,702 270,722"/>
<polygon points="178,764 200,772 178,781"/>
<polygon points="192,764 213,772 192,781"/>
<polygon points="100,866 120,866 110,846"/>
</g><rect x="54.7" y="594.7" width="60" height="6" fill="#2c2c2c" stroke="#606060" stroke-width="1.2"/><rect x="121.2" y="594.7" width="59.5" height="6" fill="#2c2c2c" stroke="#606060" stroke-width="1.2"/><rect x="54.7" y="670.7" width="60" height="5" fill="#2c2c2c" stroke="#606060" stroke-width="1.2"/><rect x="121.2" y="670.7" width="59.5" height="5" fill="#2c2c2c" stroke="#606060" stroke-width="1.2"/><rect x="54.2" y="600.2" width="127" height="70" fill="#a9a9a9"/><rect x="71.2" y="602.7" width="102" height="65" fill="#676767"/><rect x="60.5" y="600.2" width="11" height="70" fill="#333"/><rect x="61.50" y="602.20" width="8.8" height="9.5" fill="#2b2b2b"/><circle cx="65.90" cy="606.95" r="3.2" fill="none" stroke="#b9b9b9" stroke-width="1"/><circle cx="65.90" cy="606.95" r="1.2" fill="none" stroke="#b9b9b9" stroke-width="0.9"/><rect x="61.50" y="614.20" width="8.8" height="9.5" fill="#2b2b2b"/><polyline points="62.40,622.45 65.40,617.95 66.20,620.15 69.40,615.45" fill="none" stroke="#b9b9b9" stroke-width="1.1"/><rect x="61.50" y="626.20" width="8.8" height="9.5" fill="#2b2b2b"/><path d="M63.10,628.15 L68.70,633.75 M68.70,628.15 L63.10,633.75" stroke="#b9b9b9" stroke-width="1.2"/><rect x="61.50" y="638.20" width="8.8" height="9.5" fill="#2b2b2b"/><path d="M62.40,642.95 H67.90 M65.40,639.95 L68.90,642.95 L65.40,645.95" fill="none" stroke="#b9b9b9" stroke-width="1.3"/><rect x="61.50" y="650.20" width="8.8" height="9.5" fill="#2b2b2b"/><circle cx="65.10" cy="656.45" r="2.4" fill="#b9b9b9"/><path d="M65.90,654.45 V652.45 A1.8,1.8 0 0 1 69.30,652.45" fill="none" stroke="#b9b9b9" stroke-width="1"/><rect x="173.2" y="600.2" width="8" height="70" fill="#999"/><rect x="82.2" y="610.2" width="83" height="51" fill="#000"/><path d="M122.2,624.2 C120.2,618.2 124.2,613.2 130.2,612.2 C136.2,610.2 140.2,613.2 142.2,616.2 L146.2,615.2 C147.2,618.2 144.2,621.2 140.2,622.2 C136.2,626.2 132.2,628.2 130.2,630.2 L131.2,635.2 L127.2,635.2 C126.2,632.2 124.2,631.2 123.2,634.2 L122.2,640.2 L120.2,639.2 Z" fill="#fff"/><rect x="54.800000000000004" y="679.8000000000001" width="86.39999999999999" height="26.3" fill="#262626" fill-opacity="0.92" stroke="#5f5f5f" stroke-width="1.3"/><rect x="124.80" y="679.7" width="13.4" height="17.5" fill="#2e2e2e" fill-opacity="0.7" stroke="#505050" stroke-width="1"/><circle cx="131.50" cy="688.4000000000001" r="3.8" fill="#8a6a3a"/><rect x="139.00" y="679.7" width="13.4" height="17.5" fill="#2e2e2e" fill-opacity="0.7" stroke="#505050" stroke-width="1"/><circle cx="145.70" cy="688.4000000000001" r="3.8" fill="#3a3462"/><rect x="153.20" y="679.7" width="13.4" height="17.5" fill="#2e2e2e" fill-opacity="0.7" stroke="#505050" stroke-width="1"/><circle cx="159.90" cy="688.4000000000001" r="3.8" fill="#4a7ae0"/><rect x="167.40" y="679.7" width="13.4" height="17.5" fill="#2e2e2e" fill-opacity="0.7" stroke="#505050" stroke-width="1"/><path d="M174.10,684.2 V692.7 M169.90,688.4000000000001 H178.30" stroke="#555" stroke-width="1.5"/><text transform="translate(61.20,702.80) scale(1,1.12)" font-family="Liberation Mono" font-size="25.5" fill="#c9c9c9" xml:space="preserve">cam1</text><rect x="213.5" y="594.7" width="60" height="6" fill="#2c2c2c" stroke="#606060" stroke-width="1.2"/><rect x="280" y="594.7" width="59.5" height="6" fill="#2c2c2c" stroke="#606060" stroke-width="1.2"/><rect x="213.5" y="670.7" width="60" height="5" fill="#2c2c2c" stroke="#606060" stroke-width="1.2"/><rect x="280" y="670.7" width="59.5" height="5" fill="#2c2c2c" stroke="#606060" stroke-width="1.2"/><rect x="213" y="600.2" width="127" height="70" fill="#a9a9a9"/><rect x="230" y="602.7" width="102" height="65" fill="#676767"/><rect x="219.3" y="600.2" width="11" height="70" fill="#333"/><rect x="220.30" y="602.20" width="8.8" height="9.5" fill="#2b2b2b"/><circle cx="224.70" cy="606.95" r="3.2" fill="none" stroke="#b9b9b9" stroke-width="1"/><circle cx="224.70" cy="606.95" r="1.2" fill="none" stroke="#b9b9b9" stroke-width="0.9"/><rect x="220.30" y="614.20" width="8.8" height="9.5" fill="#2b2b2b"/><polyline points="221.20,622.45 224.20,617.95 225.00,620.15 228.20,615.45" fill="none" stroke="#b9b9b9" stroke-width="1.1"/><rect x="220.30" y="626.20" width="8.8" height="9.5" fill="#2b2b2b"/><path d="M221.90,628.15 L227.50,633.75 M227.50,628.15 L221.90,633.75" stroke="#b9b9b9" stroke-width="1.2"/><rect x="220.30" y="638.20" width="8.8" height="9.5" fill="#2b2b2b"/><path d="M221.20,642.95 H226.70 M224.20,639.95 L227.70,642.95 L224.20,645.95" fill="none" stroke="#b9b9b9" stroke-width="1.3"/><rect x="220.30" y="650.20" width="8.8" height="9.5" fill="#2b2b2b"/><circle cx="223.90" cy="656.45" r="2.4" fill="#b9b9b9"/><path d="M224.70,654.45 V652.45 A1.8,1.8 0 0 1 228.10,652.45" fill="none" stroke="#b9b9b9" stroke-width="1"/><rect x="332" y="600.2" width="8" height="70" fill="#999"/><rect x="241" y="610.2" width="83" height="51" fill="#000"/><path d="M283,624.2 C282,618.2 285,613.2 291,612.2 L299,610.2 C297,614.2 295,617.2 296,622.2 C297,627.2 295,631.2 293,632.2 L297,635.2 L292,636.2 C290,632.2 287,631.2 286,636.2 L285,641.2 L283,640.2 Z" fill="#fff"/><rect x="213.6" y="679.8000000000001" width="117.8" height="26.3" fill="#262626" fill-opacity="0.92" stroke="#5f5f5f" stroke-width="1.3"/><rect x="283.50" y="679.7" width="13.4" height="17.5" fill="#2e2e2e" fill-opacity="0.7" stroke="#505050" stroke-width="1"/><circle cx="290.20" cy="688.4000000000001" r="3.8" fill="#8a6a3a"/><rect x="297.70" y="679.7" width="13.4" height="17.5" fill="#2e2e2e" fill-opacity="0.7" stroke="#505050" stroke-width="1"/><circle cx="304.40" cy="688.4000000000001" r="3.8" fill="#3a3462"/><rect x="311.90" y="679.7" width="13.4" height="17.5" fill="#2e2e2e" fill-opacity="0.7" stroke="#505050" stroke-width="1"/><circle cx="318.60" cy="688.4000000000001" r="3.8" fill="#4a7ae0"/><rect x="326.10" y="679.7" width="13.4" height="17.5" fill="#2e2e2e" fill-opacity="0.7" stroke="#505050" stroke-width="1"/><path d="M332.80,684.2 V692.7 M328.60,688.4000000000001 H337.00" stroke="#555" stroke-width="1.5"/><text transform="translate(220.00,702.80) scale(1,1.12)" font-family="Liberation Mono" font-size="25.5" fill="#c9c9c9" xml:space="preserve">light1</text><rect x="54.7" y="734.3" width="60" height="6" fill="#2c2c2c" stroke="#606060" stroke-width="1.2"/><rect x="121.2" y="734.3" width="59.5" height="6" fill="#2c2c2c" stroke="#606060" stroke-width="1.2"/><rect x="54.7" y="810.3" width="60" height="5" fill="#2c2c2c" stroke="#606060" stroke-width="1.2"/><rect x="121.2" y="810.3" width="59.5" height="5" fill="#2c2c2c" stroke="#606060" stroke-width="1.2"/><rect x="54.2" y="739.8" width="127" height="70" fill="#a9a9a9"/><rect x="71.2" y="742.3" width="102" height="65" fill="#676767"/><rect x="60.5" y="739.8" width="11" height="70" fill="#333"/><rect x="61.50" y="741.80" width="8.8" height="9.5" fill="#2b2b2b"/><circle cx="65.90" cy="746.55" r="3.2" fill="none" stroke="#b9b9b9" stroke-width="1"/><circle cx="65.90" cy="746.55" r="1.2" fill="none" stroke="#b9b9b9" stroke-width="0.9"/><rect x="61.50" y="753.80" width="8.8" height="9.5" fill="#2b2b2b"/><polyline points="62.40,762.05 65.40,757.55 66.20,759.75 69.40,755.05" fill="none" stroke="#b9b9b9" stroke-width="1.1"/><rect x="61.50" y="765.80" width="8.8" height="9.5" fill="#2b2b2b"/><path d="M63.10,767.75 L68.70,773.35 M68.70,767.75 L63.10,773.35" stroke="#b9b9b9" stroke-width="1.2"/><rect x="61.50" y="777.80" width="8.8" height="9.5" fill="#2b2b2b"/><path d="M62.40,782.55 H67.90 M65.40,779.55 L68.90,782.55 L65.40,785.55" fill="none" stroke="#b9b9b9" stroke-width="1.3"/><rect x="61.50" y="789.80" width="8.8" height="9.5" fill="#2b2b2b"/><circle cx="65.10" cy="796.05" r="2.4" fill="#b9b9b9"/><path d="M65.90,794.05 V792.05 A1.8,1.8 0 0 1 69.30,792.05" fill="none" stroke="#b9b9b9" stroke-width="1"/><rect x="173.2" y="739.8" width="8" height="70" fill="#999"/><rect x="82.2" y="749.8" width="83" height="51" fill="#000"/><path d="M121.2,761.8 C120.2,755.8 124.2,751.8 130.2,751.8 L138.2,748.8 L140.2,750.8 C137.2,752.8 134.2,755.8 133.2,759.8 C132.2,764.8 130.2,767.8 128.2,769.8 L132.2,772.8 L126.2,773.8 C124.2,770.8 122.2,771.8 122.2,775.8 L121.2,780.8 L119.2,779.8 Z" fill="#fff"/><rect x="54.800000000000004" y="819.8000000000001" width="86.39999999999999" height="26.3" fill="#262626" fill-opacity="0.92" stroke="#5f5f5f" stroke-width="1.3"/><rect x="124.80" y="819.7" width="13.4" height="17.5" fill="#2e2e2e" fill-opacity="0.7" stroke="#505050" stroke-width="1"/><circle cx="131.50" cy="828.4000000000001" r="3.8" fill="#8a6a3a"/><rect x="139.00" y="819.7" width="13.4" height="17.5" fill="#2e2e2e" fill-opacity="0.7" stroke="#505050" stroke-width="1"/><circle cx="145.70" cy="828.4000000000001" r="3.8" fill="#3a3462"/><rect x="153.20" y="819.7" width="13.4" height="17.5" fill="#2e2e2e" fill-opacity="0.7" stroke="#505050" stroke-width="1"/><circle cx="159.90" cy="828.4000000000001" r="3.8" fill="#4a7ae0"/><rect x="167.40" y="819.7" width="13.4" height="17.5" fill="#2e2e2e" fill-opacity="0.7" stroke="#505050" stroke-width="1"/><path d="M174.10,824.2 V832.7 M169.90,828.4000000000001 H178.30" stroke="#555" stroke-width="1.5"/><text transform="translate(61.20,842.80) scale(1,1.12)" font-family="Liberation Mono" font-size="25.5" fill="#c9c9c9" xml:space="preserve">geo1</text><g opacity="1.0"><rect x="213" y="726" width="104" height="51" fill="#a8a8a8"/><rect x="231" y="728" width="78" height="47" fill="#676767"/><rect x="213" y="726" width="18" height="51" fill="#8d83d3"/><rect x="215" y="728.5" width="4" height="17" fill="#5e5794"/><rect x="215" y="755" width="4" height="19.5" fill="#5e5794"/><rect x="221.00" y="728.50" width="8" height="9.8" fill="#5e5794"/><circle cx="225.00" cy="733.40" r="3.2" fill="none" stroke="#cdc8ee" stroke-width="1"/><circle cx="225.00" cy="733.40" r="1.2" fill="none" stroke="#cdc8ee" stroke-width="0.9"/><rect x="221.00" y="740.30" width="8" height="9.8" fill="#5e5794"/><polyline points="221.50,748.70 224.50,744.20 225.30,746.40 228.50,741.70" fill="none" stroke="#cdc8ee" stroke-width="1.1"/><rect x="221.00" y="752.10" width="8" height="9.8" fill="#5e5794"/><path d="M221.50,757.00 H227.00 M224.50,754.00 L228.00,757.00 L224.50,760.00" fill="none" stroke="#cdc8ee" stroke-width="1.3"/><rect x="221.00" y="763.90" width="8" height="9.8" fill="#5e5794"/><circle cx="224.20" cy="770.30" r="2.4" fill="#cdc8ee"/><path d="M225.00,768.30 V766.30 A1.8,1.8 0 0 1 228.40,766.30" fill="none" stroke="#cdc8ee" stroke-width="1"/><rect x="309" y="728" width="6" height="47" fill="#8f8f8f"/><rect x="310.5" y="743" width="4" height="2" fill="#5e5794"/><rect x="310.5" y="755" width="4" height="5" fill="#5e5794"/><rect x="241.00" y="736.00" width="60.00" height="31.00" fill="#202020"/><rect x="258.00" y="736.00" width="26.00" height="31.00" fill="url(#chk)"/><circle cx="271.00" cy="751.50" r="12.48" fill="url(#rdisc)"/><use href="#fl1" transform="translate(271.00,751.50) scale(0.0300) translate(-720,-806)"/></g><rect x="213.6" y="779.9" width="134.3" height="26.3" fill="#262626" fill-opacity="0.92" stroke="#5f5f5f" stroke-width="1.3"/><text transform="translate(220.00,802.90) scale(1,1.12)" font-family="Liberation Mono" font-size="25.5" fill="#c9c9c9" xml:space="preserve">render1</text><g opacity="1.0"><rect x="353" y="726" width="104" height="51" fill="#a8a8a8"/><rect x="371" y="728" width="78" height="47" fill="#676767"/><rect x="353" y="726" width="18" height="51" fill="#8d83d3"/><rect x="355" y="728.5" width="4" height="17" fill="#5e5794"/><rect x="355" y="755" width="4" height="19.5" fill="#5e5794"/><rect x="361.00" y="728.50" width="8" height="9.8" fill="#5e5794"/><circle cx="365.00" cy="733.40" r="3.2" fill="none" stroke="#cdc8ee" stroke-width="1"/><circle cx="365.00" cy="733.40" r="1.2" fill="none" stroke="#cdc8ee" stroke-width="0.9"/><rect x="361.00" y="740.30" width="8" height="9.8" fill="#5e5794"/><polyline points="361.50,748.70 364.50,744.20 365.30,746.40 368.50,741.70" fill="none" stroke="#cdc8ee" stroke-width="1.1"/><rect x="361.00" y="752.10" width="8" height="9.8" fill="#5e5794"/><path d="M361.50,757.00 H367.00 M364.50,754.00 L368.00,757.00 L364.50,760.00" fill="none" stroke="#cdc8ee" stroke-width="1.3"/><rect x="361.00" y="763.90" width="8" height="9.8" fill="#5e5794"/><circle cx="364.20" cy="770.30" r="2.4" fill="#cdc8ee"/><path d="M365.00,768.30 V766.30 A1.8,1.8 0 0 1 368.40,766.30" fill="none" stroke="#cdc8ee" stroke-width="1"/><rect x="449" y="728" width="6" height="47" fill="#8f8f8f"/><rect x="450.5" y="743" width="4" height="2" fill="#5e5794"/><rect x="450.5" y="755" width="4" height="5" fill="#5e5794"/><rect x="381.00" y="736.00" width="60.00" height="31.00" fill="#202020"/><rect x="398.00" y="736.00" width="26.00" height="31.00" fill="url(#chk)"/><circle cx="411.00" cy="751.50" r="12.48" fill="url(#rdisc)"/><use href="#fl1" transform="translate(411.00,751.50) scale(0.0300) translate(-720,-806)"/></g><rect x="353.6" y="779.9" width="101.8" height="26.3" fill="#262626" fill-opacity="0.92" stroke="#5f5f5f" stroke-width="1.3"/><text transform="translate(360.00,802.90) scale(1,1.12)" font-family="Liberation Mono" font-size="25.5" fill="#c9c9c9" xml:space="preserve">null2</text><g opacity="1.0"><rect x="54" y="885" width="104" height="51" fill="#a8a8a8"/><rect x="72" y="887" width="78" height="47" fill="#676767"/><rect x="54" y="885" width="18" height="51" fill="#d7c35a"/><rect x="56" y="887.5" width="4" height="17" fill="#9c8c3a"/><rect x="56" y="914" width="4" height="19.5" fill="#9c8c3a"/><rect x="62.00" y="887.50" width="8" height="9.8" fill="#9c8c3a"/><circle cx="66.00" cy="892.40" r="3.2" fill="none" stroke="#cdc8ee" stroke-width="1"/><circle cx="66.00" cy="892.40" r="1.2" fill="none" stroke="#cdc8ee" stroke-width="0.9"/><rect x="62.00" y="899.30" width="8" height="9.8" fill="#9c8c3a"/><polyline points="62.50,907.70 65.50,903.20 66.30,905.40 69.50,900.70" fill="none" stroke="#cdc8ee" stroke-width="1.1"/><rect x="62.00" y="911.10" width="8" height="9.8" fill="#9c8c3a"/><circle cx="65.20" cy="917.50" r="2.4" fill="#cdc8ee"/><path d="M66.00,915.50 V913.50 A1.8,1.8 0 0 1 69.40,913.50" fill="none" stroke="#cdc8ee" stroke-width="1"/><rect x="150" y="887" width="6" height="47" fill="#8f8f8f"/><rect x="151.5" y="902" width="4" height="2" fill="#5e5794"/><rect x="151.5" y="914" width="4" height="5" fill="#5e5794"/><rect x="81" y="895" width="55" height="31" fill="#000"/><ellipse cx="110" cy="913" rx="17" ry="12" fill="#fff"/></g><rect x="54.6" y="938.6" width="164.3" height="26.3" fill="#262626" fill-opacity="0.92" stroke="#5f5f5f" stroke-width="1.3"/><text transform="translate(61.00,961.60) scale(1,1.12)" font-family="Liberation Mono" font-size="25.5" fill="#c9c9c9" xml:space="preserve">constant1</text><g opacity="0.74"><rect x="532" y="626" width="104" height="51" fill="#a8a8a8"/><rect x="550" y="628" width="78" height="47" fill="#676767"/><rect x="532" y="626" width="18" height="51" fill="#8d83d3"/><rect x="534" y="628.5" width="4" height="17" fill="#5e5794"/><rect x="534" y="655" width="4" height="19.5" fill="#5e5794"/><rect x="540.00" y="628.50" width="8" height="9.8" fill="#5e5794"/><circle cx="544.00" cy="633.40" r="3.2" fill="none" stroke="#cdc8ee" stroke-width="1"/><circle cx="544.00" cy="633.40" r="1.2" fill="none" stroke="#cdc8ee" stroke-width="0.9"/><rect x="540.00" y="640.30" width="8" height="9.8" fill="#5e5794"/><polyline points="540.50,648.70 543.50,644.20 544.30,646.40 547.50,641.70" fill="none" stroke="#cdc8ee" stroke-width="1.1"/><rect x="540.00" y="652.10" width="8" height="9.8" fill="#5e5794"/><path d="M540.50,657.00 H546.00 M543.50,654.00 L547.00,657.00 L543.50,660.00" fill="none" stroke="#cdc8ee" stroke-width="1.3"/><rect x="540.00" y="663.90" width="8" height="9.8" fill="#5e5794"/><circle cx="543.20" cy="670.30" r="2.4" fill="#cdc8ee"/><path d="M544.00,668.30 V666.30 A1.8,1.8 0 0 1 547.40,666.30" fill="none" stroke="#cdc8ee" stroke-width="1"/><rect x="628" y="628" width="6" height="47" fill="#8f8f8f"/><rect x="629.5" y="643" width="4" height="2" fill="#5e5794"/><rect x="629.5" y="655" width="4" height="5" fill="#5e5794"/><rect x="560.00" y="636.00" width="60.00" height="31.00" fill="#202020"/><rect x="577.00" y="636.00" width="26.00" height="31.00" fill="url(#chk)"/><circle cx="590.00" cy="651.50" r="12.48" fill="url(#rdisc)"/><use href="#fl1" transform="translate(590.00,651.50) scale(0.0300) translate(-720,-806)"/></g><g opacity="0.74"><rect x="672" y="626" width="104" height="51" fill="#a8a8a8"/><rect x="690" y="628" width="78" height="47" fill="#676767"/><rect x="672" y="626" width="18" height="51" fill="#8d83d3"/><rect x="674" y="628.5" width="4" height="17" fill="#5e5794"/><rect x="674" y="655" width="4" height="19.5" fill="#5e5794"/><rect x="680.00" y="628.50" width="8" height="9.8" fill="#5e5794"/><circle cx="684.00" cy="633.40" r="3.2" fill="none" stroke="#cdc8ee" stroke-width="1"/><circle cx="684.00" cy="633.40" r="1.2" fill="none" stroke="#cdc8ee" stroke-width="0.9"/><rect x="680.00" y="640.30" width="8" height="9.8" fill="#5e5794"/><polyline points="680.50,648.70 683.50,644.20 684.30,646.40 687.50,641.70" fill="none" stroke="#cdc8ee" stroke-width="1.1"/><rect x="680.00" y="652.10" width="8" height="9.8" fill="#5e5794"/><path d="M680.50,657.00 H686.00 M683.50,654.00 L687.00,657.00 L683.50,660.00" fill="none" stroke="#cdc8ee" stroke-width="1.3"/><rect x="680.00" y="663.90" width="8" height="9.8" fill="#5e5794"/><circle cx="683.20" cy="670.30" r="2.4" fill="#cdc8ee"/><path d="M684.00,668.30 V666.30 A1.8,1.8 0 0 1 687.40,666.30" fill="none" stroke="#cdc8ee" stroke-width="1"/><rect x="768" y="628" width="6" height="47" fill="#8f8f8f"/><rect x="769.5" y="643" width="4" height="2" fill="#5e5794"/><rect x="769.5" y="655" width="4" height="5" fill="#5e5794"/><rect x="700.00" y="636.00" width="60.00" height="31.00" fill="#202020"/><rect x="717.00" y="636.00" width="26.00" height="31.00" fill="url(#chk)"/><circle cx="730.00" cy="651.50" r="12.48" fill="url(#rdisc)"/><use href="#fl1" transform="translate(730.00,651.50) scale(0.0300) translate(-720,-806)"/></g><g opacity="0.74"><rect x="831.5" y="626" width="104" height="51" fill="#a8a8a8"/><rect x="849.5" y="628" width="78" height="47" fill="#676767"/><rect x="831.5" y="626" width="18" height="51" fill="#8d83d3"/><rect x="833.5" y="628.5" width="4" height="17" fill="#5e5794"/><rect x="833.5" y="655" width="4" height="19.5" fill="#5e5794"/><rect x="839.50" y="628.50" width="8" height="9.8" fill="#5e5794"/><circle cx="843.50" cy="633.40" r="3.2" fill="none" stroke="#cdc8ee" stroke-width="1"/><circle cx="843.50" cy="633.40" r="1.2" fill="none" stroke="#cdc8ee" stroke-width="0.9"/><rect x="839.50" y="640.30" width="8" height="9.8" fill="#5e5794"/><polyline points="840.00,648.70 843.00,644.20 843.80,646.40 847.00,641.70" fill="none" stroke="#cdc8ee" stroke-width="1.1"/><rect x="839.50" y="652.10" width="8" height="9.8" fill="#5e5794"/><path d="M840.00,657.00 H845.50 M843.00,654.00 L846.50,657.00 L843.00,660.00" fill="none" stroke="#cdc8ee" stroke-width="1.3"/><rect x="839.50" y="663.90" width="8" height="9.8" fill="#5e5794"/><circle cx="842.70" cy="670.30" r="2.4" fill="#cdc8ee"/><path d="M843.50,668.30 V666.30 A1.8,1.8 0 0 1 846.90,666.30" fill="none" stroke="#cdc8ee" stroke-width="1"/><rect x="927.5" y="628" width="6" height="47" fill="#8f8f8f"/><rect x="929.0" y="643" width="4" height="2" fill="#5e5794"/><rect x="929.0" y="655" width="4" height="5" fill="#5e5794"/><rect x="859.50" y="636.00" width="60.00" height="31.00" fill="#202020"/><rect x="876.50" y="636.00" width="26.00" height="31.00" fill="url(#chk)"/><circle cx="889.50" cy="651.50" r="12.48" fill="url(#rdisc)"/><use href="#fl1" transform="translate(889.50,651.50) scale(0.0300) translate(-720,-806)"/></g><rect x="532.6" y="679.6" width="480.40000000000003" height="26.3" fill="#262626" fill-opacity="0.69" stroke="#5f5f5f" stroke-width="1.3"/><text transform="translate(539.00,702.60) scale(1,1.12)" font-family="Liberation Mono" font-size="25.5" fill="#c9c9c9" xml:space="preserve">feedback1</text><text transform="translate(679.00,702.60) scale(1,1.12)" font-family="Liberation Mono" font-size="25.5" fill="#c9c9c9" xml:space="preserve">level1</text><text transform="translate(838.50,702.60) scale(1,1.12)" font-family="Liberation Mono" font-size="25.5" fill="#c9c9c9" xml:space="preserve">transform2</text><g opacity="1.0"><rect x="971.3" y="746" width="104" height="51" fill="#a8a8a8"/><rect x="989.3" y="748" width="78" height="47" fill="#676767"/><rect x="971.3" y="746" width="18" height="51" fill="#8d83d3"/><rect x="973.3" y="748.5" width="4" height="17" fill="#5e5794"/><rect x="973.3" y="775" width="4" height="19.5" fill="#5e5794"/><rect x="979.30" y="748.50" width="8" height="9.8" fill="#5e5794"/><circle cx="983.30" cy="753.40" r="3.2" fill="none" stroke="#cdc8ee" stroke-width="1"/><circle cx="983.30" cy="753.40" r="1.2" fill="none" stroke="#cdc8ee" stroke-width="0.9"/><rect x="979.30" y="760.30" width="8" height="9.8" fill="#5e5794"/><polyline points="979.80,768.70 982.80,764.20 983.60,766.40 986.80,761.70" fill="none" stroke="#cdc8ee" stroke-width="1.1"/><rect x="979.30" y="772.10" width="8" height="9.8" fill="#5e5794"/><path d="M979.80,777.00 H985.30 M982.80,774.00 L986.30,777.00 L982.80,780.00" fill="none" stroke="#cdc8ee" stroke-width="1.3"/><rect x="979.30" y="783.90" width="8" height="9.8" fill="#5e5794"/><circle cx="982.50" cy="790.30" r="2.4" fill="#cdc8ee"/><path d="M983.30,788.30 V786.30 A1.8,1.8 0 0 1 986.70,786.30" fill="none" stroke="#cdc8ee" stroke-width="1"/><rect x="1067.3" y="748" width="6" height="47" fill="#8f8f8f"/><rect x="1068.8" y="763" width="4" height="2" fill="#5e5794"/><rect x="1068.8" y="775" width="4" height="5" fill="#5e5794"/><rect x="999.30" y="756.00" width="60.00" height="31.00" fill="#202020"/><rect x="1016.30" y="756.00" width="26.00" height="31.00" fill="url(#chk)"/><circle cx="1029.30" cy="771.50" r="12.48" fill="url(#rdisc)"/><use href="#fl1" transform="translate(1029.30,771.50) scale(0.0300) translate(-720,-806)"/></g><rect x="971.9" y="799.6" width="102.5" height="26.3" fill="#262626" fill-opacity="0.92" stroke="#5f5f5f" stroke-width="1.3"/><text transform="translate(978.30,822.60) scale(1,1.12)" font-family="Liberation Mono" font-size="25.5" fill="#c9c9c9" xml:space="preserve">comp1</text><rect x="1131" y="674" width="127" height="6" fill="#3a3a3a"/><rect x="1131" y="750" width="127" height="6" fill="#3a3a3a"/><rect x="1149" y="675.5" width="101" height="1.5" fill="#555"/><rect x="1131" y="680" width="127" height="70" fill="#a9a9a9"/><rect x="1148" y="682.5" width="102" height="65" fill="#676767"/><rect x="1137.3" y="680" width="11" height="70" fill="#333"/><rect x="1138.30" y="682.00" width="8.8" height="9.5" fill="#2b2b2b"/><circle cx="1142.70" cy="686.75" r="3.2" fill="none" stroke="#b9b9b9" stroke-width="1"/><circle cx="1142.70" cy="686.75" r="1.2" fill="none" stroke="#b9b9b9" stroke-width="0.9"/><rect x="1138.30" y="694.00" width="8.8" height="9.5" fill="#2b2b2b"/><polyline points="1139.20,702.25 1142.20,697.75 1143.00,699.95 1146.20,695.25" fill="none" stroke="#b9b9b9" stroke-width="1.1"/><rect x="1138.30" y="706.00" width="8.8" height="9.5" fill="#2b2b2b"/><path d="M1139.90,707.95 L1145.50,713.55 M1145.50,707.95 L1139.90,713.55" stroke="#b9b9b9" stroke-width="1.2"/><rect x="1138.30" y="718.00" width="8.8" height="9.5" fill="#2b2b2b"/><path d="M1139.20,722.75 H1144.70 M1142.20,719.75 L1145.70,722.75 L1142.20,725.75" fill="none" stroke="#b9b9b9" stroke-width="1.3"/><rect x="1138.30" y="730.00" width="8.8" height="9.5" fill="#2b2b2b"/><circle cx="1141.90" cy="736.25" r="2.4" fill="#b9b9b9"/><path d="M1142.70,734.25 V732.25 A1.8,1.8 0 0 1 1146.10,732.25" fill="none" stroke="#b9b9b9" stroke-width="1"/><rect x="1250" y="680" width="8" height="70" fill="#999"/><rect x="1132" y="704" width="4" height="4" fill="#5e5794"/><rect x="1132" y="719" width="4" height="7" fill="#5e5794"/><rect x="1252" y="704" width="4" height="4" fill="#5e5794"/><rect x="1252" y="719" width="4" height="7" fill="#5e5794"/><rect x="1159.00" y="690.00" width="83.00" height="51.00" fill="#202020"/><rect x="1179.00" y="690.00" width="43.00" height="51.00" fill="url(#chk)"/><circle cx="1200.50" cy="715.50" r="20.64" fill="url(#rdisc)"/><use href="#fl1" transform="translate(1200.50,715.50) scale(0.0450) translate(-720,-806)"/><rect x="1131.6" y="760.0" width="164.5" height="26.3" fill="#262626" fill-opacity="0.92" stroke="#5f5f5f" stroke-width="1.3"/><text transform="translate(1138.00,783.00) scale(1,1.12)" font-family="Liberation Mono" font-size="25.5" fill="#c9c9c9" xml:space="preserve">rgbaDelay</text><g opacity="1.0"><rect x="1310" y="686" width="104" height="51" fill="#a8a8a8"/><rect x="1328" y="688" width="78" height="47" fill="#676767"/><rect x="1310" y="686" width="18" height="51" fill="#8d83d3"/><rect x="1312" y="688.5" width="4" height="17" fill="#5e5794"/><rect x="1312" y="715" width="4" height="19.5" fill="#5e5794"/><rect x="1318.00" y="688.50" width="8" height="9.8" fill="#5e5794"/><circle cx="1322.00" cy="693.40" r="3.2" fill="none" stroke="#cdc8ee" stroke-width="1"/><circle cx="1322.00" cy="693.40" r="1.2" fill="none" stroke="#cdc8ee" stroke-width="0.9"/><rect x="1318.00" y="700.30" width="8" height="9.8" fill="#5e5794"/><polyline points="1318.50,708.70 1321.50,704.20 1322.30,706.40 1325.50,701.70" fill="none" stroke="#cdc8ee" stroke-width="1.1"/><rect x="1318.00" y="712.10" width="8" height="9.8" fill="#5e5794"/><path d="M1318.50,717.00 H1324.00 M1321.50,714.00 L1325.00,717.00 L1321.50,720.00" fill="none" stroke="#cdc8ee" stroke-width="1.3"/><rect x="1318.00" y="723.90" width="8" height="9.8" fill="#5e5794"/><circle cx="1321.20" cy="730.30" r="2.4" fill="#cdc8ee"/><path d="M1322.00,728.30 V726.30 A1.8,1.8 0 0 1 1325.40,726.30" fill="none" stroke="#cdc8ee" stroke-width="1"/><rect x="1406" y="688" width="6" height="47" fill="#8f8f8f"/><rect x="1407.5" y="703" width="4" height="2" fill="#5e5794"/><rect x="1407.5" y="715" width="4" height="5" fill="#5e5794"/><rect x="1338.00" y="696.00" width="60.00" height="31.00" fill="#202020"/><rect x="1355.00" y="696.00" width="26.00" height="31.00" fill="url(#chk)"/><circle cx="1368.00" cy="711.50" r="12.48" fill="url(#rdisc)"/><use href="#fl1" transform="translate(1368.00,711.50) scale(0.0300) translate(-720,-806)"/></g><rect x="1310.6" y="739.9" width="133.8" height="26.3" fill="#262626" fill-opacity="0.92" stroke="#5f5f5f" stroke-width="1.3"/><text transform="translate(1317.00,762.90) scale(1,1.12)" font-family="Liberation Mono" font-size="25.5" fill="#c9c9c9" xml:space="preserve">mirror1</text><g opacity="1.0"><rect x="1450" y="686" width="104" height="51" fill="#a8a8a8"/><rect x="1468" y="688" width="78" height="47" fill="#676767"/><rect x="1450" y="686" width="18" height="51" fill="#8d83d3"/><rect x="1452" y="688.5" width="4" height="17" fill="#5e5794"/><rect x="1452" y="715" width="4" height="19.5" fill="#5e5794"/><rect x="1458.00" y="688.50" width="8" height="9.8" fill="#5e5794"/><circle cx="1462.00" cy="693.40" r="3.2" fill="none" stroke="#cdc8ee" stroke-width="1"/><circle cx="1462.00" cy="693.40" r="1.2" fill="none" stroke="#cdc8ee" stroke-width="0.9"/><rect x="1458.00" y="700.30" width="8" height="9.8" fill="#5e5794"/><polyline points="1458.50,708.70 1461.50,704.20 1462.30,706.40 1465.50,701.70" fill="none" stroke="#cdc8ee" stroke-width="1.1"/><rect x="1458.00" y="712.10" width="8" height="9.8" fill="#5e5794"/><path d="M1458.50,717.00 H1464.00 M1461.50,714.00 L1465.00,717.00 L1461.50,720.00" fill="none" stroke="#cdc8ee" stroke-width="1.3"/><rect x="1458.00" y="723.90" width="8" height="9.8" fill="#5e5794"/><circle cx="1461.20" cy="730.30" r="2.4" fill="#cdc8ee"/><path d="M1462.00,728.30 V726.30 A1.8,1.8 0 0 1 1465.40,726.30" fill="none" stroke="#cdc8ee" stroke-width="1"/><rect x="1546" y="688" width="6" height="47" fill="#8f8f8f"/><rect x="1547.5" y="703" width="4" height="2" fill="#5e5794"/><rect x="1547.5" y="715" width="4" height="5" fill="#5e5794"/><rect x="1478.00" y="696.00" width="60.00" height="31.00" fill="#202020"/><rect x="1495.00" y="696.00" width="26.00" height="31.00" fill="url(#chk)"/><circle cx="1508.00" cy="711.50" r="12.48" fill="url(#rdisc)"/><use href="#fl1" transform="translate(1508.00,711.50) scale(0.0300) translate(-720,-806)"/></g><rect x="1450.6" y="739.9" width="133.8" height="26.3" fill="#262626" fill-opacity="0.92" stroke="#5f5f5f" stroke-width="1.3"/><text transform="translate(1457.00,762.90) scale(1,1.12)" font-family="Liberation Mono" font-size="25.5" fill="#c9c9c9" xml:space="preserve">rgbkey1</text><rect x="1596" y="621" width="154" height="130" fill="#1e3510" stroke="#8ef03c" stroke-width="2"/><rect x="1605" y="630" width="136" height="112" fill="#000"/><rect x="1609" y="634" width="127" height="6" fill="#3a3a3a"/><rect x="1609" y="710" width="127" height="6" fill="#3a3a3a"/><rect x="1627" y="635.5" width="101" height="1.5" fill="#555"/><rect x="1609" y="640" width="127" height="70" fill="#a9a9a9"/><rect x="1626" y="642.5" width="102" height="65" fill="#676767"/><rect x="1615.3" y="640" width="11" height="70" fill="#333"/><rect x="1616.30" y="642.00" width="8.8" height="9.5" fill="#2b2b2b"/><circle cx="1620.70" cy="646.75" r="3.2" fill="none" stroke="#b9b9b9" stroke-width="1"/><circle cx="1620.70" cy="646.75" r="1.2" fill="none" stroke="#b9b9b9" stroke-width="0.9"/><rect x="1616.30" y="654.00" width="8.8" height="9.5" fill="#2b2b2b"/><polyline points="1617.20,662.25 1620.20,657.75 1621.00,659.95 1624.20,655.25" fill="none" stroke="#b9b9b9" stroke-width="1.1"/><rect x="1616.30" y="666.00" width="8.8" height="9.5" fill="#2b2b2b"/><path d="M1617.90,667.95 L1623.50,673.55 M1623.50,667.95 L1617.90,673.55" stroke="#b9b9b9" stroke-width="1.2"/><rect x="1616.30" y="678.00" width="8.8" height="9.5" fill="#2b2b2b"/><path d="M1617.20,682.75 H1622.70 M1620.20,679.75 L1623.70,682.75 L1620.20,685.75" fill="none" stroke="#b9b9b9" stroke-width="1.3"/><rect x="1616.30" y="690.00" width="8.8" height="9.5" fill="#2b2b2b"/><circle cx="1619.90" cy="696.25" r="2.4" fill="#b9b9b9"/><path d="M1620.70,694.25 V692.25 A1.8,1.8 0 0 1 1624.10,692.25" fill="none" stroke="#b9b9b9" stroke-width="1"/><rect x="1728" y="640" width="8" height="70" fill="#999"/><rect x="1610" y="664" width="4" height="4" fill="#5e5794"/><rect x="1610" y="679" width="4" height="7" fill="#5e5794"/><rect x="1730" y="664" width="4" height="4" fill="#5e5794"/><rect x="1730" y="679" width="4" height="7" fill="#5e5794"/><rect x="1637.00" y="650.00" width="83.00" height="51.00" fill="#202020"/><rect x="1657.00" y="650.00" width="43.00" height="51.00" fill="url(#chk)"/><rect x="1657.00" y="650.00" width="43.00" height="51.00" fill="#000" opacity="0.55"/><use href="#fl2" transform="translate(1678.50,675.50) scale(0.0450) translate(-720,-806)"/><rect x="1609.6" y="719.6" width="118.8" height="26.3" fill="#262626" fill-opacity="0.92" stroke="#5f5f5f" stroke-width="1.3"/><text transform="translate(1616.00,742.60) scale(1,1.12)" font-family="Liberation Mono" font-size="25.5" fill="#c9c9c9" xml:space="preserve">bloom2</text><g opacity="1.0"><rect x="1769" y="666" width="104" height="51" fill="#a8a8a8"/><rect x="1787" y="668" width="78" height="47" fill="#676767"/><rect x="1769" y="666" width="18" height="51" fill="#8d83d3"/><rect x="1771" y="668.5" width="4" height="17" fill="#5e5794"/><rect x="1771" y="695" width="4" height="19.5" fill="#5e5794"/><rect x="1777.00" y="668.50" width="8" height="9.8" fill="#5e5794"/><circle cx="1781.00" cy="673.40" r="3.2" fill="none" stroke="#cdc8ee" stroke-width="1"/><circle cx="1781.00" cy="673.40" r="1.2" fill="none" stroke="#cdc8ee" stroke-width="0.9"/><rect x="1777.00" y="680.30" width="8" height="9.8" fill="#5e5794"/><polyline points="1777.50,688.70 1780.50,684.20 1781.30,686.40 1784.50,681.70" fill="none" stroke="#cdc8ee" stroke-width="1.1"/><rect x="1777.00" y="692.10" width="8" height="9.8" fill="#5e5794"/><path d="M1777.50,697.00 H1783.00 M1780.50,694.00 L1784.00,697.00 L1780.50,700.00" fill="none" stroke="#cdc8ee" stroke-width="1.3"/><rect x="1777.00" y="703.90" width="8" height="9.8" fill="#5e5794"/><circle cx="1780.20" cy="710.30" r="2.4" fill="#cdc8ee"/><path d="M1781.00,708.30 V706.30 A1.8,1.8 0 0 1 1784.40,706.30" fill="none" stroke="#cdc8ee" stroke-width="1"/><rect x="1865" y="668" width="6" height="47" fill="#8f8f8f"/><rect x="1866.5" y="683" width="4" height="2" fill="#5e5794"/><rect x="1866.5" y="695" width="4" height="5" fill="#5e5794"/><rect x="1797.00" y="676.00" width="60.00" height="31.00" fill="#202020"/><rect x="1814.00" y="676.00" width="26.00" height="31.00" fill="url(#chk)"/><rect x="1814.00" y="676.00" width="26.00" height="31.00" fill="#000" opacity="0.55"/><use href="#fl2" transform="translate(1827.00,691.50) scale(0.0300) translate(-720,-806)"/></g><rect x="1769.6" y="719.6" width="133.5" height="26.3" fill="#262626" fill-opacity="0.92" stroke="#5f5f5f" stroke-width="1.3"/><text transform="translate(1776.00,742.60) scale(1,1.12)" font-family="Liberation Mono" font-size="25.5" fill="#c9c9c9" xml:space="preserve">rgbkey2</text></svg>
<div class="a" style="left:0.00px;top:1318.00px;width:40.00px;height:40.00px;background:#dcdcdc;"></div>
<div class="a" style="left:40.00px;top:1318.00px;width:40.00px;height:40.00px;background:#b4b4b4;"></div>
<div class="a" style="left:80.00px;top:1318.00px;width:40.00px;height:40.00px;background:#6c6c6c;"></div>
<div class="a" style="left:120.00px;top:1318.00px;width:40.00px;height:40.00px;background:#282828;"></div>
<div class="a" style="left:160.00px;top:1318.00px;width:40.00px;height:40.00px;background:#1c1c1c;"></div>
<div class="a" style="left:200.00px;top:1318.00px;width:40.00px;height:40.00px;background:#1c1c1c;"></div>
<div class="a" style="left:0.00px;top:1358.00px;width:40.00px;height:40.00px;background:#b03636;"></div>
<div class="a" style="left:40.00px;top:1358.00px;width:40.00px;height:40.00px;background:#a95e34;"></div>
<div class="a" style="left:80.00px;top:1358.00px;width:40.00px;height:40.00px;background:#a98637;"></div>
<div class="a" style="left:120.00px;top:1358.00px;width:40.00px;height:40.00px;background:#bcb946;"></div>
<div class="a" style="left:160.00px;top:1358.00px;width:40.00px;height:40.00px;background:#a3c445;"></div>
<div class="a" style="left:200.00px;top:1358.00px;width:40.00px;height:40.00px;background:#7aae3e;"></div>
<div class="a" style="left:0.00px;top:1398.00px;width:40.00px;height:40.00px;background:#7dcd4a;"></div>
<div class="a" style="left:40.00px;top:1398.00px;width:40.00px;height:40.00px;background:#72bd6a;"></div>
<div class="a" style="left:80.00px;top:1398.00px;width:40.00px;height:40.00px;background:#6db78a;"></div>
<div class="a" style="left:120.00px;top:1398.00px;width:40.00px;height:40.00px;background:#73bbba;"></div>
<div class="a" style="left:160.00px;top:1398.00px;width:40.00px;height:40.00px;background:#5f96c6;"></div>
<div class="a" style="left:200.00px;top:1398.00px;width:40.00px;height:40.00px;background:#435db0;"></div>
<div class="a" style="left:0.00px;top:1438.00px;width:40.00px;height:40.00px;background:#3636c8;"></div>
<div class="a" style="left:40.00px;top:1438.00px;width:40.00px;height:40.00px;background:#5330bc;"></div>
<div class="a" style="left:80.00px;top:1438.00px;width:40.00px;height:40.00px;background:#772db4;"></div>
<div class="a" style="left:120.00px;top:1438.00px;width:40.00px;height:40.00px;background:#a236b8;"></div>
<div class="a" style="left:160.00px;top:1438.00px;width:40.00px;height:40.00px;background:#a93b8f;"></div>
<div class="a" style="left:200.00px;top:1438.00px;width:40.00px;height:40.00px;background:#94355a;"></div>
<div class="a t" style="left:170.60px;top:1323.97px;font-size:26px;line-height:29.04px;font-family:'Liberation Sans', sans-serif;color:#aab0c6;transform:scaleX(0.9557);">None</div>
<div class="a" style="left:0.00px;top:1477.00px;width:2880.00px;height:140.00px;background:#333335;border-radius:0 0 14px 14px;box-shadow:inset 0 -1.5px 0 #77777c;"></div>
<div class="a" style="left:0.00px;top:1477.00px;width:556.00px;height:140.00px;background:#100f1c;border-radius:0 0 0 14px;box-shadow:inset 0 -1.5px 0 #77777c;"></div>
<div class="a" style="left:556.50px;top:1478.00px;width:2320.50px;height:28.00px;background:#121212;box-shadow:inset 0 0 0 1px #5a5a5a;"></div>
<div class="a t" style="left:560.50px;top:1479.49px;font-size:21px;line-height:23.46px;font-family:'Liberation Sans', sans-serif;color:#9c9c9c;">1</div>
<div class="a" style="left:750.17px;top:1478.00px;width:1.20px;height:28.00px;background:#5a5a5a;"></div>
<div class="a t" style="left:754.17px;top:1479.49px;font-size:21px;line-height:23.46px;font-family:'Liberation Sans', sans-serif;color:#9c9c9c;">51</div>
<div class="a" style="left:943.85px;top:1478.00px;width:1.20px;height:28.00px;background:#5a5a5a;"></div>
<div class="a t" style="left:947.85px;top:1479.49px;font-size:21px;line-height:23.46px;font-family:'Liberation Sans', sans-serif;color:#9c9c9c;">101</div>
<div class="a" style="left:1137.53px;top:1478.00px;width:1.20px;height:28.00px;background:#5a5a5a;"></div>
<div class="a t" style="left:1141.53px;top:1479.49px;font-size:21px;line-height:23.46px;font-family:'Liberation Sans', sans-serif;color:#9c9c9c;">151</div>
<div class="a" style="left:1331.20px;top:1478.00px;width:1.20px;height:28.00px;background:#5a5a5a;"></div>
<div class="a t" style="left:1335.20px;top:1479.49px;font-size:21px;line-height:23.46px;font-family:'Liberation Sans', sans-serif;color:#9c9c9c;">201</div>
<div class="a" style="left:1524.88px;top:1478.00px;width:1.20px;height:28.00px;background:#5a5a5a;"></div>
<div class="a t" style="left:1528.88px;top:1479.49px;font-size:21px;line-height:23.46px;font-family:'Liberation Sans', sans-serif;color:#9c9c9c;">251</div>
<div class="a" style="left:1718.55px;top:1478.00px;width:1.20px;height:28.00px;background:#5a5a5a;"></div>
<div class="a t" style="left:1722.55px;top:1479.49px;font-size:21px;line-height:23.46px;font-family:'Liberation Sans', sans-serif;color:#9c9c9c;">301</div>
<div class="a" style="left:1912.22px;top:1478.00px;width:1.20px;height:28.00px;background:#5a5a5a;"></div>
<div class="a t" style="left:1916.22px;top:1479.49px;font-size:21px;line-height:23.46px;font-family:'Liberation Sans', sans-serif;color:#9c9c9c;">351</div>
<div class="a" style="left:2105.90px;top:1478.00px;width:1.20px;height:28.00px;background:#5a5a5a;"></div>
<div class="a t" style="left:2109.90px;top:1479.49px;font-size:21px;line-height:23.46px;font-family:'Liberation Sans', sans-serif;color:#9c9c9c;">401</div>
<div class="a" style="left:2299.57px;top:1478.00px;width:1.20px;height:28.00px;background:#5a5a5a;"></div>
<div class="a t" style="left:2303.57px;top:1479.49px;font-size:21px;line-height:23.46px;font-family:'Liberation Sans', sans-serif;color:#9c9c9c;">451</div>
<div class="a" style="left:2493.25px;top:1478.00px;width:1.20px;height:28.00px;background:#5a5a5a;"></div>
<div class="a t" style="left:2497.25px;top:1479.49px;font-size:21px;line-height:23.46px;font-family:'Liberation Sans', sans-serif;color:#9c9c9c;">501</div>
<div class="a" style="left:2686.93px;top:1478.00px;width:1.20px;height:28.00px;background:#5a5a5a;"></div>
<div class="a t" style="left:2690.93px;top:1479.49px;font-size:21px;line-height:23.46px;font-family:'Liberation Sans', sans-serif;color:#9c9c9c;">551</div>
<div class="a t" style="left:2832.48px;top:1479.49px;font-size:21px;line-height:23.46px;font-family:'Liberation Sans', sans-serif;color:#9c9c9c;">600</div>
<div class="a" style="left:1895.00px;top:1478.60px;width:2.50px;height:22.50px;background:#6d80c4;"></div>
<div class="a" style="left:556.50px;top:1506.00px;width:2320.50px;height:25.00px;background:#1e1e20;"></div>
<div class="a" style="left:560.00px;top:1510.00px;width:42.00px;height:16.00px;background:#3c3c3c;box-shadow:inset 0 0 0 1px #555;"></div>
<div class="a" style="left:602.00px;top:1510.00px;width:2224.00px;height:16.00px;background:#3e4a6a;"></div>
<div class="a" style="left:2828.00px;top:1510.00px;width:42.00px;height:16.00px;background:#3c3c3c;box-shadow:inset 0 0 0 1px #555;"></div>
<div class="a" style="left:556.50px;top:1530.50px;width:2320.50px;height:1.00px;background:#66666a;"></div>
<div class="a t" style="left:13.00px;top:1490.68px;font-size:24px;line-height:26.81px;font-family:'Liberation Sans', sans-serif;color:#878894;transform:scaleX(1.1857);">Start:</div>
<div class="a t" style="left:134.00px;top:1490.68px;font-size:24px;line-height:26.81px;font-family:'Liberation Sans', sans-serif;color:#7e92d6;transform:scaleX(0.8766);">1</div>
<div class="a t" style="left:273.00px;top:1490.68px;font-size:24px;line-height:26.81px;font-family:'Liberation Sans', sans-serif;color:#878894;transform:scaleX(1.0857);">End:</div>
<div class="a t" style="left:392.60px;top:1490.68px;font-size:24px;line-height:26.81px;font-family:'Liberation Sans', sans-serif;color:#7e92d6;transform:scaleX(1.1413);">600</div>
<div class="a t" style="left:13.00px;top:1521.23px;font-size:24px;line-height:26.81px;font-family:'Liberation Sans', sans-serif;color:#878894;transform:scaleX(1.1194);">RStart:</div>
<div class="a t" style="left:134.00px;top:1521.23px;font-size:24px;line-height:26.81px;font-family:'Liberation Sans', sans-serif;color:#7e92d6;transform:scaleX(0.8766);">1</div>
<div class="a t" style="left:273.00px;top:1521.23px;font-size:24px;line-height:26.81px;font-family:'Liberation Sans', sans-serif;color:#878894;transform:scaleX(1.0374);">REnd:</div>
<div class="a t" style="left:392.60px;top:1521.23px;font-size:24px;line-height:26.81px;font-family:'Liberation Sans', sans-serif;color:#7e92d6;transform:scaleX(1.1413);">600</div>
<div class="a t" style="left:13.00px;top:1551.78px;font-size:24px;line-height:26.81px;font-family:'Liberation Sans', sans-serif;color:#878894;transform:scaleX(0.9654);">FPS:</div>
<div class="a t" style="left:134.00px;top:1551.78px;font-size:24px;line-height:26.81px;font-family:'Liberation Sans', sans-serif;color:#7e92d6;transform:scaleX(1.1475);">60.0</div>
<div class="a t" style="left:273.00px;top:1551.78px;font-size:24px;line-height:26.81px;font-family:'Liberation Sans', sans-serif;color:#878894;transform:scaleX(1.0508);">Tempo:</div>
<div class="a t" style="left:392.60px;top:1551.78px;font-size:24px;line-height:26.81px;font-family:'Liberation Sans', sans-serif;color:#7e92d6;transform:scaleX(1.1322);">120.0</div>
<div class="a t" style="left:13.00px;top:1582.33px;font-size:24px;line-height:26.81px;font-family:'Liberation Sans', sans-serif;color:#878894;transform:scaleX(1.0438);">ResetF:</div>
<div class="a t" style="left:134.00px;top:1582.33px;font-size:24px;line-height:26.81px;font-family:'Liberation Sans', sans-serif;color:#7e92d6;transform:scaleX(0.8766);">1</div>
<div class="a t" style="left:273.00px;top:1582.33px;font-size:24px;line-height:26.81px;font-family:'Liberation Sans', sans-serif;color:#878894;transform:scaleX(1.0370);">T Sig:</div>
<div class="a t" style="left:392.60px;top:1582.33px;font-size:24px;line-height:26.81px;font-family:'Liberation Sans', sans-serif;color:#7e92d6;transform:scaleX(1.1238);">4</div>
<div class="a t" style="left:461.50px;top:1582.33px;font-size:24px;line-height:26.81px;font-family:'Liberation Sans', sans-serif;color:#7e92d6;transform:scaleX(1.1238);">4</div>
<div class="a" style="left:564.00px;top:1534.00px;width:40.00px;height:39.00px;background:#3c3c41;box-shadow:inset 0 0 0 1px #77777d;"></div>
<div class="a t" style="left:580.67px;top:1540.28px;font-size:24px;line-height:26.81px;font-family:'Liberation Sans', sans-serif;color:#77777f;">/</div>
<div class="a" style="left:564.00px;top:1574.00px;width:40.00px;height:35.50px;background:#3c3c41;box-shadow:inset 0 0 0 1px #77777d;"></div>
<div class="a t" style="left:576.80px;top:1581.02px;font-size:24px;line-height:27.19px;font-family:'Liberation Mono', monospace;color:#77777f;">I</div>
<div class="a" style="left:611.00px;top:1534.50px;width:134.00px;height:34.00px;background:#3c3c41;box-shadow:inset 0 0 0 1px #77777d;"></div>
<div class="a" style="left:614.00px;top:1537.50px;width:128.00px;height:28.00px;background:#b5834f;"></div>
<div class="a t" style="left:619.00px;top:1539.28px;font-size:24px;line-height:26.81px;font-family:'Liberation Sans', sans-serif;color:#3b0c0c;transform:scaleX(1.0659);">TimeCode</div>
<div class="a" style="left:611.00px;top:1573.00px;width:134.00px;height:36.00px;background:#3c3c41;box-shadow:inset 0 0 0 1px #77777d;"></div>
<div class="a t" style="left:645.80px;top:1579.28px;font-size:24px;line-height:26.81px;font-family:'Liberation Sans', sans-serif;color:#a9afc7;transform:scaleX(1.0591);">Beats</div>
<div class="a" style="left:750.50px;top:1534.50px;width:398.50px;height:76.50px;background:#000;box-shadow:inset 0 0 0 1px #555;"></div>
<div class="a t" style="left:793.30px;top:1546.94px;font-size:52px;line-height:58.08px;font-family:'Liberation Sans', sans-serif;color:#7f9cf0;transform:scaleX(1.1467);">00:00:05:46</div>
<div class="a" style="left:1154.00px;top:1534.50px;width:269.50px;height:76.50px;background:#000;box-shadow:inset 0 0 0 1px #555;"></div>
<div class="a t" style="left:1244.75px;top:1546.94px;font-size:52px;line-height:58.08px;font-family:'Liberation Sans', sans-serif;color:#7f9cf0;transform:scaleX(1.0339);">346</div>
<div class="a" style="left:1428.00px;top:1534.00px;width:76.50px;height:77.00px;background:#3c3c41;box-shadow:inset 0 0 0 1px #77777d;"></div>
<div class="a" style="left:1510.50px;top:1534.00px;width:76.50px;height:77.00px;background:#3c3c41;box-shadow:inset 0 0 0 1px #77777d;"></div>
<div class="a" style="left:1592.60px;top:1534.00px;width:76.50px;height:77.00px;background:#3c3c41;box-shadow:inset 0 0 0 1px #77777d;"></div>
<div class="a" style="left:1674.70px;top:1534.00px;width:76.50px;height:77.00px;background:#3c3c41;box-shadow:inset 0 0 0 1px #77777d;"></div>
<div class="a" style="left:1677.70px;top:1537.00px;width:70.50px;height:71.00px;background:#b5834f;"></div>
<div class="a" style="left:1756.50px;top:1534.00px;width:76.50px;height:77.00px;background:#3c3c41;box-shadow:inset 0 0 0 1px #77777d;"></div>
<div class="a" style="left:1838.30px;top:1534.00px;width:76.50px;height:77.00px;background:#3c3c41;box-shadow:inset 0 0 0 1px #77777d;"></div>
<svg class="a" style="left:0;top:0" width="2880" height="1704" fill="#aab0c6">
<rect x="1454.5" y="1563" width="4" height="20"/>
<polygon points="1469,1563 1469,1583 1458.5,1573"/>
<polygon points="1479.6,1563 1479.6,1583 1469,1573"/>
<rect x="1541.7" y="1563" width="4.3" height="20"/>
<rect x="1550.6" y="1563" width="4.3" height="20"/>
<polygon points="1633,1563 1633,1583 1622.4,1573"/>
<polygon fill="#4a0c0c" points="1708.5,1563 1708.5,1583 1719,1573"/>
<rect x="1789" y="1571.8" width="11" height="2.6"/>
<rect x="1866.3" y="1571.8" width="20.4" height="2.6"/>
<rect x="1875.2" y="1563" width="2.6" height="20.4"/>
</svg>
<div class="a t" style="left:1926.50px;top:1537.78px;font-size:25px;line-height:27.93px;font-family:'Liberation Sans', sans-serif;color:#a9afc7;transform:scaleX(1.0607);">Range Limit</div>
<div class="a" style="left:1923.00px;top:1576.60px;width:102.00px;height:34.00px;background:#3c3c41;box-shadow:inset 0 0 0 1px #77777d;"></div>
<div class="a" style="left:1926.00px;top:1579.60px;width:96.00px;height:28.00px;background:#b5834f;"></div>
<div class="a t" style="left:1946.00px;top:1580.38px;font-size:25px;line-height:27.93px;font-family:'Liberation Sans', sans-serif;color:#3b0c0c;transform:scaleX(1.0069);">Loop</div>
<div class="a" style="left:2028.40px;top:1576.60px;width:86.60px;height:34.00px;background:#3c3c41;box-shadow:inset 0 0 0 1px #77777d;"></div>
<div class="a t" style="left:2042.70px;top:1580.38px;font-size:25px;line-height:27.93px;font-family:'Liberation Sans', sans-serif;color:#a9afc7;transform:scaleX(0.9958);">Once</div>
</body></html>
